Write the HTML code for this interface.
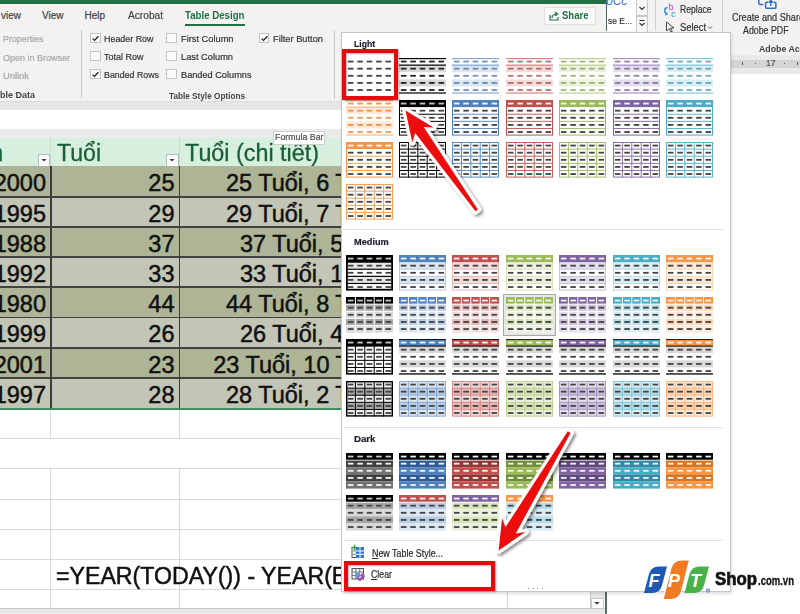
<!DOCTYPE html><html><head><meta charset="utf-8"><style>
html,body{margin:0;padding:0;width:800px;height:614px;overflow:hidden;background:#fff}
body{position:relative;font-family:"Liberation Sans", sans-serif}
body>div,body>svg{position:absolute;display:block}
</style></head><body>
<div style="left:0px;top:0px;width:607px;height:3.5px;background:#1e7145;"></div>
<div style="left:0px;top:3.5px;width:607px;height:97.5px;background:#f3f2f1;"></div>
<div style="left:607px;top:0px;width:193px;height:55px;background:#f3f2f1;"></div>
<div style="left:1.00px;top:10.90px;font-size:10px;line-height:10px;color:#444;font-weight:normal;-webkit-text-stroke:0.2px #444;white-space:nowrap">view</div>
<div style="left:42.00px;top:10.90px;font-size:10px;line-height:10px;color:#444;font-weight:normal;-webkit-text-stroke:0.2px #444;white-space:nowrap">View</div>
<div style="left:84.50px;top:10.90px;font-size:10px;line-height:10px;color:#444;font-weight:normal;-webkit-text-stroke:0.2px #444;white-space:nowrap">Help</div>
<div style="left:128.00px;top:10.90px;font-size:10px;line-height:10px;color:#444;font-weight:normal;-webkit-text-stroke:0.2px #444;transform:scaleX(1.0154);transform-origin:left top;white-space:nowrap">Acrobat</div>
<div style="left:185.00px;top:10.90px;font-size:10px;line-height:10px;color:#1e7145;font-weight:bold;transform:scaleX(0.9675);transform-origin:left top;white-space:nowrap">Table Design</div>
<div style="left:185px;top:23.5px;width:60px;height:2px;background:#1e7145;"></div>
<div style="left:2.50px;top:34.42px;font-size:9.5px;line-height:9.5px;color:#a6a6a6;font-weight:normal;-webkit-text-stroke:0.2px #a6a6a6;transform:scaleX(0.9351);transform-origin:left top;white-space:nowrap">Properties</div>
<div style="left:2.50px;top:52.72px;font-size:9.5px;line-height:9.5px;color:#a6a6a6;font-weight:normal;-webkit-text-stroke:0.2px #a6a6a6;transform:scaleX(0.9468);transform-origin:left top;white-space:nowrap">Open in Browser</div>
<div style="left:2.50px;top:70.92px;font-size:9.5px;line-height:9.5px;color:#a6a6a6;font-weight:normal;-webkit-text-stroke:0.2px #a6a6a6;transform:scaleX(0.9846);transform-origin:left top;white-space:nowrap">Unlink</div>
<div style="left:-0.50px;top:90.42px;font-size:9.5px;line-height:9.5px;color:#444;font-weight:bold;transform:scaleX(0.9467);transform-origin:left top;white-space:nowrap">ble Data</div>
<div style="left:80.5px;top:30px;width:1.2px;height:68px;background:#c8c6c4;"></div>
<div style="left:90px;top:32.5px;width:8.5px;height:8.5px;border:1px solid #c4c4c4;background:#fbfbfb"></div>
<svg style="left:90px;top:32.5px" width="11" height="11" viewBox="0 0 11 11"><path d="M2.6 5.6 L4.5 7.4 L8.4 3.3" fill="none" stroke="#222" stroke-width="1.3"/></svg>
<div style="left:90px;top:50.5px;width:8.5px;height:8.5px;border:1px solid #c4c4c4;background:#fbfbfb"></div>
<div style="left:90px;top:68.5px;width:8.5px;height:8.5px;border:1px solid #c4c4c4;background:#fbfbfb"></div>
<svg style="left:90px;top:68.5px" width="11" height="11" viewBox="0 0 11 11"><path d="M2.6 5.6 L4.5 7.4 L8.4 3.3" fill="none" stroke="#222" stroke-width="1.3"/></svg>
<div style="left:166.3px;top:32.5px;width:8.5px;height:8.5px;border:1px solid #c4c4c4;background:#fbfbfb"></div>
<div style="left:166.3px;top:50.5px;width:8.5px;height:8.5px;border:1px solid #c4c4c4;background:#fbfbfb"></div>
<div style="left:166.3px;top:68.5px;width:8.5px;height:8.5px;border:1px solid #c4c4c4;background:#fbfbfb"></div>
<div style="left:258.6px;top:32.5px;width:8.5px;height:8.5px;border:1px solid #c4c4c4;background:#fbfbfb"></div>
<svg style="left:258.6px;top:32.5px" width="11" height="11" viewBox="0 0 11 11"><path d="M2.6 5.6 L4.5 7.4 L8.4 3.3" fill="none" stroke="#222" stroke-width="1.3"/></svg>
<div style="left:104.00px;top:33.97px;font-size:9.8px;line-height:9.8px;color:#333;font-weight:normal;-webkit-text-stroke:0.2px #333;transform:scaleX(0.9090);transform-origin:left top;white-space:nowrap">Header Row</div>
<div style="left:104.00px;top:51.97px;font-size:9.8px;line-height:9.8px;color:#333;font-weight:normal;-webkit-text-stroke:0.2px #333;transform:scaleX(0.9183);transform-origin:left top;white-space:nowrap">Total Row</div>
<div style="left:104.00px;top:69.97px;font-size:9.8px;line-height:9.8px;color:#333;font-weight:normal;-webkit-text-stroke:0.2px #333;transform:scaleX(0.9016);transform-origin:left top;white-space:nowrap">Banded Rows</div>
<div style="left:180.70px;top:33.97px;font-size:9.8px;line-height:9.8px;color:#333;font-weight:normal;-webkit-text-stroke:0.2px #333;transform:scaleX(0.9454);transform-origin:left top;white-space:nowrap">First Column</div>
<div style="left:180.70px;top:51.97px;font-size:9.8px;line-height:9.8px;color:#333;font-weight:normal;-webkit-text-stroke:0.2px #333;transform:scaleX(0.9455);transform-origin:left top;white-space:nowrap">Last Column</div>
<div style="left:180.70px;top:69.97px;font-size:9.8px;line-height:9.8px;color:#333;font-weight:normal;-webkit-text-stroke:0.2px #333;transform:scaleX(0.9380);transform-origin:left top;white-space:nowrap">Banded Columns</div>
<div style="left:272.50px;top:33.97px;font-size:9.8px;line-height:9.8px;color:#333;font-weight:normal;-webkit-text-stroke:0.2px #333;transform:scaleX(0.9465);transform-origin:left top;white-space:nowrap">Filter Button</div>
<div style="left:169.00px;top:90.72px;font-size:9.5px;line-height:9.5px;color:#444;font-weight:bold;transform:scaleX(0.8638);transform-origin:left top;white-space:nowrap">Table Style Options</div>
<div style="left:334px;top:30.5px;width:1.2px;height:68px;background:#c8c6c4;"></div>
<div style="left:544px;top:6.5px;width:50px;height:16.5px;border:1px solid #e1dfdd;border-radius:2px;background:#fafafa"></div>
<svg style="left:549px;top:10px" width="11" height="11" viewBox="0 0 11 11"><path d="M1 5 V10 H9 V7" fill="none" stroke="#1e7145" stroke-width="1.2"/><path d="M3 8 C3 5 5 4 8 4 M6 2 L8.5 4 L6 6" fill="none" stroke="#1e7145" stroke-width="1.2"/></svg>
<div style="left:562.00px;top:10.70px;font-size:10px;line-height:10px;color:#1e7145;font-weight:bold;transform:scaleX(0.9533);transform-origin:left top;white-space:nowrap">Share</div>
<div style="left:0px;top:101px;width:607px;height:9px;background:#e6e6e6;"></div>
<div style="left:0px;top:101px;width:607px;height:1px;background:#dcdcdc;"></div>
<div style="left:0px;top:110px;width:607px;height:19px;background:#ffffff;"></div>
<div style="left:0px;top:129px;width:607px;height:8.5px;background:#ebebeb;"></div>
<div style="left:0px;top:137.5px;width:607px;height:471px;background:#ffffff;"></div>
<div style="left:0px;top:137.5px;width:341px;height:28.5px;background:#d6efdf;"></div>
<div style="left:50.3px;top:137.5px;width:1px;height:28.5px;background:#c6dccd;"></div>
<div style="left:179.3px;top:137.5px;width:1px;height:28.5px;background:#c6dccd;"></div>
<div style="left:-10.00px;top:142.03px;font-size:23.5px;line-height:23.5px;color:#1b5e36;font-weight:normal;-webkit-text-stroke:0.3px #1b5e36;white-space:nowrap">h</div>
<div style="left:56.50px;top:142.03px;font-size:23.5px;line-height:23.5px;color:#1b5e36;font-weight:normal;-webkit-text-stroke:0.3px #1b5e36;transform:scaleX(0.9812);transform-origin:left top;white-space:nowrap">Tuổi</div>
<div style="left:184.80px;top:142.03px;font-size:23.5px;line-height:23.5px;color:#1b5e36;font-weight:normal;-webkit-text-stroke:0.3px #1b5e36;transform:scaleX(0.9929);transform-origin:left top;white-space:nowrap">Tuổi (chi tiết)</div>
<div style="left:37.8px;top:154px;width:10.5px;height:10.5px;border:1px solid #b8b8b8;background:#fbfbfb"></div>
<svg style="left:37.8px;top:154px" width="12" height="12" viewBox="0 0 12 12"><path d="M3.3 5 L8.7 5 L6 7.6 Z" fill="#444"/></svg>
<div style="left:166.3px;top:154px;width:10.5px;height:10.5px;border:1px solid #b8b8b8;background:#fbfbfb"></div>
<svg style="left:166.3px;top:154px" width="12" height="12" viewBox="0 0 12 12"><path d="M3.3 5 L8.7 5 L6 7.6 Z" fill="#444"/></svg>
<div style="left:0px;top:166.0px;width:341px;height:30.2px;background:#adb596;"></div>
<div style="left:0px;top:196.2px;width:341px;height:30.2px;background:#c3c6b6;"></div>
<div style="left:0px;top:226.4px;width:341px;height:30.2px;background:#adb596;"></div>
<div style="left:0px;top:256.6px;width:341px;height:30.2px;background:#c3c6b6;"></div>
<div style="left:0px;top:286.8px;width:341px;height:30.2px;background:#adb596;"></div>
<div style="left:0px;top:317.0px;width:341px;height:30.2px;background:#c3c6b6;"></div>
<div style="left:0px;top:347.2px;width:341px;height:30.2px;background:#adb596;"></div>
<div style="left:0px;top:377.4px;width:341px;height:30.2px;background:#c3c6b6;"></div>
<div style="left:0px;top:195.8px;width:341px;height:1.8px;background:#424242;"></div>
<div style="left:0px;top:226.0px;width:341px;height:1.8px;background:#424242;"></div>
<div style="left:0px;top:256.2px;width:341px;height:1.8px;background:#424242;"></div>
<div style="left:0px;top:286.40000000000003px;width:341px;height:1.8px;background:#424242;"></div>
<div style="left:0px;top:316.6px;width:341px;height:1.8px;background:#424242;"></div>
<div style="left:0px;top:346.8px;width:341px;height:1.8px;background:#424242;"></div>
<div style="left:0px;top:377.0px;width:341px;height:1.8px;background:#424242;"></div>
<div style="left:-6.28px;width:52.28px;top:172.43px;font-size:23.5px;line-height:23.5px;color:#111;font-weight:normal;-webkit-text-stroke:0.5px #111;white-space:nowrap">2000</div>
<div style="left:148.36px;width:26.14px;top:172.43px;font-size:23.5px;line-height:23.5px;color:#111;font-weight:normal;-webkit-text-stroke:0.5px #111;white-space:nowrap">25</div>
<div style="left:226.00px;top:172.43px;font-size:23.5px;line-height:23.5px;color:#111;font-weight:normal;-webkit-text-stroke:0.5px #111;white-space:nowrap">25 Tuổi, 6 Tháng</div>
<div style="left:-6.28px;width:52.28px;top:202.62px;font-size:23.5px;line-height:23.5px;color:#111;font-weight:normal;-webkit-text-stroke:0.5px #111;white-space:nowrap">1995</div>
<div style="left:148.36px;width:26.14px;top:202.62px;font-size:23.5px;line-height:23.5px;color:#111;font-weight:normal;-webkit-text-stroke:0.5px #111;white-space:nowrap">29</div>
<div style="left:226.00px;top:202.62px;font-size:23.5px;line-height:23.5px;color:#111;font-weight:normal;-webkit-text-stroke:0.5px #111;white-space:nowrap">29 Tuổi, 7 Tháng</div>
<div style="left:-6.28px;width:52.28px;top:232.83px;font-size:23.5px;line-height:23.5px;color:#111;font-weight:normal;-webkit-text-stroke:0.5px #111;white-space:nowrap">1988</div>
<div style="left:148.36px;width:26.14px;top:232.83px;font-size:23.5px;line-height:23.5px;color:#111;font-weight:normal;-webkit-text-stroke:0.5px #111;white-space:nowrap">37</div>
<div style="left:240.00px;top:232.83px;font-size:23.5px;line-height:23.5px;color:#111;font-weight:normal;-webkit-text-stroke:0.5px #111;white-space:nowrap">37 Tuổi, 5 Tháng</div>
<div style="left:-6.28px;width:52.28px;top:263.02px;font-size:23.5px;line-height:23.5px;color:#111;font-weight:normal;-webkit-text-stroke:0.5px #111;white-space:nowrap">1992</div>
<div style="left:148.36px;width:26.14px;top:263.02px;font-size:23.5px;line-height:23.5px;color:#111;font-weight:normal;-webkit-text-stroke:0.5px #111;white-space:nowrap">33</div>
<div style="left:240.00px;top:263.02px;font-size:23.5px;line-height:23.5px;color:#111;font-weight:normal;-webkit-text-stroke:0.5px #111;white-space:nowrap">33 Tuổi, 1 Tháng</div>
<div style="left:-6.28px;width:52.28px;top:293.22px;font-size:23.5px;line-height:23.5px;color:#111;font-weight:normal;-webkit-text-stroke:0.5px #111;white-space:nowrap">1980</div>
<div style="left:148.36px;width:26.14px;top:293.22px;font-size:23.5px;line-height:23.5px;color:#111;font-weight:normal;-webkit-text-stroke:0.5px #111;white-space:nowrap">44</div>
<div style="left:226.00px;top:293.22px;font-size:23.5px;line-height:23.5px;color:#111;font-weight:normal;-webkit-text-stroke:0.5px #111;white-space:nowrap">44 Tuổi, 8 Tháng</div>
<div style="left:-6.28px;width:52.28px;top:323.42px;font-size:23.5px;line-height:23.5px;color:#111;font-weight:normal;-webkit-text-stroke:0.5px #111;white-space:nowrap">1999</div>
<div style="left:148.36px;width:26.14px;top:323.42px;font-size:23.5px;line-height:23.5px;color:#111;font-weight:normal;-webkit-text-stroke:0.5px #111;white-space:nowrap">26</div>
<div style="left:240.00px;top:323.42px;font-size:23.5px;line-height:23.5px;color:#111;font-weight:normal;-webkit-text-stroke:0.5px #111;white-space:nowrap">26 Tuổi, 4 Tháng</div>
<div style="left:-6.28px;width:52.28px;top:353.62px;font-size:23.5px;line-height:23.5px;color:#111;font-weight:normal;-webkit-text-stroke:0.5px #111;white-space:nowrap">2001</div>
<div style="left:148.36px;width:26.14px;top:353.62px;font-size:23.5px;line-height:23.5px;color:#111;font-weight:normal;-webkit-text-stroke:0.5px #111;white-space:nowrap">23</div>
<div style="left:213.20px;top:353.62px;font-size:23.5px;line-height:23.5px;color:#111;font-weight:normal;-webkit-text-stroke:0.5px #111;white-space:nowrap">23 Tuổi, 10 Tháng</div>
<div style="left:-6.28px;width:52.28px;top:383.82px;font-size:23.5px;line-height:23.5px;color:#111;font-weight:normal;-webkit-text-stroke:0.5px #111;white-space:nowrap">1997</div>
<div style="left:148.36px;width:26.14px;top:383.82px;font-size:23.5px;line-height:23.5px;color:#111;font-weight:normal;-webkit-text-stroke:0.5px #111;white-space:nowrap">28</div>
<div style="left:226.00px;top:383.82px;font-size:23.5px;line-height:23.5px;color:#111;font-weight:normal;-webkit-text-stroke:0.5px #111;white-space:nowrap">28 Tuổi, 2 Tháng</div>
<div style="left:50px;top:166px;width:1.6px;height:242px;background:#3d3d3d;"></div>
<div style="left:178.5px;top:166px;width:1.6px;height:242px;background:#3d3d3d;"></div>
<div style="left:0px;top:408px;width:341px;height:1.5px;background:#3f8f5e;"></div>
<div style="left:0px;top:438px;width:607px;height:1px;background:#d9d9d9;"></div>
<div style="left:0px;top:468px;width:607px;height:1px;background:#d9d9d9;"></div>
<div style="left:0px;top:499px;width:607px;height:1px;background:#d9d9d9;"></div>
<div style="left:0px;top:529px;width:607px;height:1px;background:#d9d9d9;"></div>
<div style="left:0px;top:559px;width:607px;height:1px;background:#d9d9d9;"></div>
<div style="left:0px;top:589px;width:607px;height:1px;background:#d9d9d9;"></div>
<div style="left:50.3px;top:409.5px;width:1px;height:28.5px;background:#d9d9d9;"></div>
<div style="left:178.8px;top:409.5px;width:1px;height:28.5px;background:#d9d9d9;"></div>
<div style="left:50.3px;top:468px;width:1px;height:140px;background:#d9d9d9;"></div>
<div style="left:178.8px;top:468px;width:1px;height:140px;background:#d9d9d9;"></div>
<div style="left:55.50px;top:565.02px;font-size:23.5px;line-height:23.5px;color:#111;font-weight:normal;-webkit-text-stroke:0.5px #111;transform:scaleX(0.9849);transform-origin:left top;white-space:nowrap">=YEAR(TODAY()) - YEAR(E</div>
<div style="left:0px;top:608px;width:607px;height:6px;background:#e8e8e8;"></div>
<div style="left:0px;top:607.5px;width:607px;height:1px;background:#c8c8c8;"></div>
<div style="left:507px;top:590px;width:1px;height:18px;background:#d9d9d9;"></div>
<div style="left:589.5px;top:590px;width:1px;height:18px;background:#c8c8c8;"></div>
<div style="left:590.5px;top:590px;width:14.5px;height:8px;background:#e6e6e6;"></div>
<div style="left:591px;top:598px;width:11px;height:9px;border:1px solid #c8c8c8;background:#fff"></div>
<svg style="left:591px;top:597px" width="12" height="12" viewBox="0 0 12 12"><path d="M3.3 5 L8.7 5 L6 7.7 Z" fill="#444"/></svg>
<div style="left:605.3px;top:590px;width:1.7px;height:24px;background:#56705e;"></div>
<div style="left:605.5px;top:0px;width:1.6px;height:31px;background:#4a6b55;"></div>
<div style="left:272.5px;top:131px;width:50.5px;height:11.8px;border:1px solid #cfcfcf;background:#fff"></div>
<div style="left:274.50px;top:133.09px;font-size:9.3px;line-height:9.3px;color:#4a4a4a;font-weight:normal;-webkit-text-stroke:0.2px #4a4a4a;transform:scaleX(0.9481);transform-origin:left top;white-space:nowrap">Formula Bar</div>
<div style="left:607px;top:0px;width:29px;height:31px;background:#ffffff;"></div>
<div style="left:606.00px;top:-5.20px;font-size:12px;line-height:12px;color:#4a6fc7;font-weight:normal;font-style:italic;white-space:nowrap">bCc</div>
<div style="left:608.00px;top:16.43px;font-size:9.5px;line-height:9.5px;color:#333;font-weight:normal;-webkit-text-stroke:0.2px #333;transform:scaleX(0.8910);transform-origin:left top;white-space:nowrap">se E...</div>
<div style="left:636px;top:0px;width:10px;height:15px;border:1px solid #c8c8c8;border-top:none;background:#f7f7f7"></div>
<div style="left:636px;top:16px;width:10px;height:14.5px;border:1px solid #c8c8c8;background:#f7f7f7"></div>
<svg style="left:636px;top:0px" width="12" height="32" viewBox="0 0 12 32"><path d="M3.5 7 L6 9.5 L8.5 7" fill="none" stroke="#333" stroke-width="1.1"/><path d="M3.5 20.5 L8.5 20.5 M3.5 23 L6 25.5 L8.5 23" fill="none" stroke="#333" stroke-width="1.1"/></svg>
<div style="left:655px;top:0px;width:1px;height:31px;background:#d0d0d0;"></div>
<div style="left:722px;top:0px;width:1px;height:52px;background:#d0d0d0;"></div>
<svg style="left:662px;top:2px" width="16" height="16" viewBox="0 0 16 16"><text x="6.5" y="7.5" font-family="Liberation Sans" font-size="9" fill="#b84cc8">b</text><text x="9" y="15" font-family="Liberation Sans" font-size="9" fill="#2a8fd0">c</text><path d="M5.5 5.5 C2 6 1.5 10.5 4.8 11.8 M3.4 10.3 L5 12 L3.2 13.2" fill="none" stroke="#2a8fd0" stroke-width="1.3"/></svg>
<div style="left:679.60px;top:5.00px;font-size:10px;line-height:10px;color:#333;font-weight:normal;-webkit-text-stroke:0.2px #333;transform:scaleX(0.8582);transform-origin:left top;white-space:nowrap">Replace</div>
<svg style="left:665px;top:21px" width="11" height="12" viewBox="0 0 11 12"><path d="M1.5 1 L1.5 10 L4 7.5 L6 11 L7.3 10.3 L5.5 7 L9 7 Z" fill="#fff" stroke="#333" stroke-width="0.9"/></svg>
<div style="left:679.60px;top:22.50px;font-size:10px;line-height:10px;color:#333;font-weight:normal;-webkit-text-stroke:0.2px #333;transform:scaleX(0.9354);transform-origin:left top;white-space:nowrap">Select</div>
<svg style="left:707px;top:25px" width="6" height="5" viewBox="0 0 6 5"><path d="M1 1.5 L3 3.5 L5 1.5" fill="none" stroke="#444" stroke-width="0.9"/></svg>
<svg style="left:756px;top:0px" width="22" height="10" viewBox="0 0 22 10"><path d="M2.8 0 V3.3 Q2.8 4.5 4 4.5 H7.2" fill="none" stroke="#2b6fc6" stroke-width="1.5"/><path d="M12 2.2 H10.7 Q9.6 2.2 9.6 3.3 V7.2 Q9.6 8.3 10.7 8.3 H18.8 Q19.9 8.3 19.9 7.2 V3.3 Q19.9 2.2 18.8 2.2 H17.5" fill="none" stroke="#2b6fc6" stroke-width="1.5"/><path d="M14.75 6 V0.5 M12.6 2.6 L14.75 0.5 L16.9 2.6" fill="none" stroke="#2b6fc6" stroke-width="1.4"/></svg>
<div style="left:731.60px;top:13.10px;font-size:10px;line-height:10px;color:#333;font-weight:normal;-webkit-text-stroke:0.2px #333;transform:scaleX(0.9119);transform-origin:left top;white-space:nowrap">Create and Share</div>
<div style="left:742.80px;top:25.60px;font-size:10px;line-height:10px;color:#333;font-weight:normal;-webkit-text-stroke:0.2px #333;transform:scaleX(0.8820);transform-origin:left top;white-space:nowrap">Adobe PDF</div>
<div style="left:758.80px;top:44.03px;font-size:9.5px;line-height:9.5px;color:#444;font-weight:bold;transform:scaleX(0.9227);transform-origin:left top;white-space:nowrap">Adobe Acr</div>
<div style="left:607px;top:55px;width:193px;height:19px;background:#e9e9e9;"></div>
<div style="left:607px;top:60px;width:193px;height:7.5px;background:#d4d4d4;"></div>
<div style="left:766.00px;top:59.27px;font-size:8.5px;line-height:8.5px;color:#555;font-weight:normal;-webkit-text-stroke:0.2px #555;white-space:nowrap">17</div>
<div style="left:741.5px;top:62px;width:0.8px;height:3px;background:#555;"></div>
<div style="left:797px;top:62px;width:0.8px;height:3px;background:#555;"></div>
<div style="left:755.4px;top:63px;width:1px;height:1px;background:#666;"></div>
<div style="left:783.5px;top:63px;width:1px;height:1px;background:#666;"></div>
<div style="left:607px;top:74px;width:193px;height:540px;background:#ffffff;"></div>
<div style="left:341px;top:32px;width:389.5px;height:560px;background:#fff;border:1px solid #c6c6c6;box-sizing:border-box;box-shadow:1px 2px 3px rgba(0,0,0,0.12)"></div>
<div style="left:353.50px;top:39.24px;font-size:9.6px;line-height:9.6px;color:#1c1c28;font-weight:bold;-webkit-text-stroke:0.2px #1c1c28;transform:scaleX(0.8954);transform-origin:left top;white-space:nowrap">Light</div>
<div style="left:353.60px;top:236.59px;font-size:9.9px;line-height:9.9px;color:#1c1c28;font-weight:bold;-webkit-text-stroke:0.2px #1c1c28;transform:scaleX(0.9327);transform-origin:left top;white-space:nowrap">Medium</div>
<div style="left:353.80px;top:434.08px;font-size:9.9px;line-height:9.9px;color:#1c1c28;font-weight:bold;-webkit-text-stroke:0.2px #1c1c28;transform:scaleX(0.9787);transform-origin:left top;white-space:nowrap">Dark</div>
<div style="left:342.5px;top:229px;width:380px;height:1px;background:#e1e1e1;"></div>
<div style="left:342.5px;top:427px;width:380px;height:1px;background:#e1e1e1;"></div>
<div style="left:342.5px;top:540px;width:380px;height:1px;background:#e1e1e1;"></div>
<svg style="left:345.60px;top:58.00px" width="47" height="35.6" viewBox="0 0 47 35.6"><rect x="1.90" y="2.66" width="5.6" height="1.8" fill="#444444"/><rect x="11.30" y="2.66" width="5.6" height="1.8" fill="#444444"/><rect x="20.70" y="2.66" width="5.6" height="1.8" fill="#444444"/><rect x="30.10" y="2.66" width="5.6" height="1.8" fill="#444444"/><rect x="39.50" y="2.66" width="5.6" height="1.8" fill="#444444"/><rect x="1.90" y="9.78" width="5.6" height="1.8" fill="#444444"/><rect x="11.30" y="9.78" width="5.6" height="1.8" fill="#444444"/><rect x="20.70" y="9.78" width="5.6" height="1.8" fill="#444444"/><rect x="30.10" y="9.78" width="5.6" height="1.8" fill="#444444"/><rect x="39.50" y="9.78" width="5.6" height="1.8" fill="#444444"/><rect x="1.90" y="16.90" width="5.6" height="1.8" fill="#444444"/><rect x="11.30" y="16.90" width="5.6" height="1.8" fill="#444444"/><rect x="20.70" y="16.90" width="5.6" height="1.8" fill="#444444"/><rect x="30.10" y="16.90" width="5.6" height="1.8" fill="#444444"/><rect x="39.50" y="16.90" width="5.6" height="1.8" fill="#444444"/><rect x="1.90" y="24.02" width="5.6" height="1.8" fill="#444444"/><rect x="11.30" y="24.02" width="5.6" height="1.8" fill="#444444"/><rect x="20.70" y="24.02" width="5.6" height="1.8" fill="#444444"/><rect x="30.10" y="24.02" width="5.6" height="1.8" fill="#444444"/><rect x="39.50" y="24.02" width="5.6" height="1.8" fill="#444444"/><rect x="1.90" y="31.14" width="5.6" height="1.8" fill="#444444"/><rect x="11.30" y="31.14" width="5.6" height="1.8" fill="#444444"/><rect x="20.70" y="31.14" width="5.6" height="1.8" fill="#444444"/><rect x="30.10" y="31.14" width="5.6" height="1.8" fill="#444444"/><rect x="39.50" y="31.14" width="5.6" height="1.8" fill="#444444"/></svg>
<svg style="left:399.00px;top:58.00px" width="47" height="35.6" viewBox="0 0 47 35.6"><rect x="0" y="7.12" width="47" height="7.12" fill="#d9d9d9"/><rect x="0" y="21.36" width="47" height="7.12" fill="#d9d9d9"/><g opacity="1"><rect x="0" y="0.00" width="47" height="1.2" fill="#000000"/><rect x="0" y="6.52" width="47" height="1.2" fill="#000000"/><rect x="0" y="34.40" width="47" height="1.2" fill="#000000"/><rect x="1.90" y="2.66" width="5.6" height="1.8" fill="#222"/><rect x="11.30" y="2.66" width="5.6" height="1.8" fill="#222"/><rect x="20.70" y="2.66" width="5.6" height="1.8" fill="#222"/><rect x="30.10" y="2.66" width="5.6" height="1.8" fill="#222"/><rect x="39.50" y="2.66" width="5.6" height="1.8" fill="#222"/><rect x="1.90" y="9.78" width="5.6" height="1.8" fill="#222"/><rect x="11.30" y="9.78" width="5.6" height="1.8" fill="#222"/><rect x="20.70" y="9.78" width="5.6" height="1.8" fill="#222"/><rect x="30.10" y="9.78" width="5.6" height="1.8" fill="#222"/><rect x="39.50" y="9.78" width="5.6" height="1.8" fill="#222"/><rect x="1.90" y="16.90" width="5.6" height="1.8" fill="#222"/><rect x="11.30" y="16.90" width="5.6" height="1.8" fill="#222"/><rect x="20.70" y="16.90" width="5.6" height="1.8" fill="#222"/><rect x="30.10" y="16.90" width="5.6" height="1.8" fill="#222"/><rect x="39.50" y="16.90" width="5.6" height="1.8" fill="#222"/><rect x="1.90" y="24.02" width="5.6" height="1.8" fill="#222"/><rect x="11.30" y="24.02" width="5.6" height="1.8" fill="#222"/><rect x="20.70" y="24.02" width="5.6" height="1.8" fill="#222"/><rect x="30.10" y="24.02" width="5.6" height="1.8" fill="#222"/><rect x="39.50" y="24.02" width="5.6" height="1.8" fill="#222"/><rect x="1.90" y="31.14" width="5.6" height="1.8" fill="#222"/><rect x="11.30" y="31.14" width="5.6" height="1.8" fill="#222"/><rect x="20.70" y="31.14" width="5.6" height="1.8" fill="#222"/><rect x="30.10" y="31.14" width="5.6" height="1.8" fill="#222"/><rect x="39.50" y="31.14" width="5.6" height="1.8" fill="#222"/></g></svg>
<svg style="left:452.40px;top:58.00px" width="47" height="35.6" viewBox="0 0 47 35.6"><rect x="0" y="7.12" width="47" height="7.12" fill="#dce6f1"/><rect x="0" y="21.36" width="47" height="7.12" fill="#dce6f1"/><g opacity="0.68"><rect x="0" y="0.00" width="47" height="1.2" fill="#4f81bd"/><rect x="0" y="6.52" width="47" height="1.2" fill="#4f81bd"/><rect x="0" y="34.40" width="47" height="1.2" fill="#4f81bd"/><rect x="1.90" y="2.66" width="5.6" height="1.8" fill="#376092"/><rect x="11.30" y="2.66" width="5.6" height="1.8" fill="#376092"/><rect x="20.70" y="2.66" width="5.6" height="1.8" fill="#376092"/><rect x="30.10" y="2.66" width="5.6" height="1.8" fill="#376092"/><rect x="39.50" y="2.66" width="5.6" height="1.8" fill="#376092"/><rect x="1.90" y="9.78" width="5.6" height="1.8" fill="#376092"/><rect x="11.30" y="9.78" width="5.6" height="1.8" fill="#376092"/><rect x="20.70" y="9.78" width="5.6" height="1.8" fill="#376092"/><rect x="30.10" y="9.78" width="5.6" height="1.8" fill="#376092"/><rect x="39.50" y="9.78" width="5.6" height="1.8" fill="#376092"/><rect x="1.90" y="16.90" width="5.6" height="1.8" fill="#376092"/><rect x="11.30" y="16.90" width="5.6" height="1.8" fill="#376092"/><rect x="20.70" y="16.90" width="5.6" height="1.8" fill="#376092"/><rect x="30.10" y="16.90" width="5.6" height="1.8" fill="#376092"/><rect x="39.50" y="16.90" width="5.6" height="1.8" fill="#376092"/><rect x="1.90" y="24.02" width="5.6" height="1.8" fill="#376092"/><rect x="11.30" y="24.02" width="5.6" height="1.8" fill="#376092"/><rect x="20.70" y="24.02" width="5.6" height="1.8" fill="#376092"/><rect x="30.10" y="24.02" width="5.6" height="1.8" fill="#376092"/><rect x="39.50" y="24.02" width="5.6" height="1.8" fill="#376092"/><rect x="1.90" y="31.14" width="5.6" height="1.8" fill="#376092"/><rect x="11.30" y="31.14" width="5.6" height="1.8" fill="#376092"/><rect x="20.70" y="31.14" width="5.6" height="1.8" fill="#376092"/><rect x="30.10" y="31.14" width="5.6" height="1.8" fill="#376092"/><rect x="39.50" y="31.14" width="5.6" height="1.8" fill="#376092"/></g></svg>
<svg style="left:505.80px;top:58.00px" width="47" height="35.6" viewBox="0 0 47 35.6"><rect x="0" y="7.12" width="47" height="7.12" fill="#f2dcdb"/><rect x="0" y="21.36" width="47" height="7.12" fill="#f2dcdb"/><g opacity="0.68"><rect x="0" y="0.00" width="47" height="1.2" fill="#c0504d"/><rect x="0" y="6.52" width="47" height="1.2" fill="#c0504d"/><rect x="0" y="34.40" width="47" height="1.2" fill="#c0504d"/><rect x="1.90" y="2.66" width="5.6" height="1.8" fill="#963634"/><rect x="11.30" y="2.66" width="5.6" height="1.8" fill="#963634"/><rect x="20.70" y="2.66" width="5.6" height="1.8" fill="#963634"/><rect x="30.10" y="2.66" width="5.6" height="1.8" fill="#963634"/><rect x="39.50" y="2.66" width="5.6" height="1.8" fill="#963634"/><rect x="1.90" y="9.78" width="5.6" height="1.8" fill="#963634"/><rect x="11.30" y="9.78" width="5.6" height="1.8" fill="#963634"/><rect x="20.70" y="9.78" width="5.6" height="1.8" fill="#963634"/><rect x="30.10" y="9.78" width="5.6" height="1.8" fill="#963634"/><rect x="39.50" y="9.78" width="5.6" height="1.8" fill="#963634"/><rect x="1.90" y="16.90" width="5.6" height="1.8" fill="#963634"/><rect x="11.30" y="16.90" width="5.6" height="1.8" fill="#963634"/><rect x="20.70" y="16.90" width="5.6" height="1.8" fill="#963634"/><rect x="30.10" y="16.90" width="5.6" height="1.8" fill="#963634"/><rect x="39.50" y="16.90" width="5.6" height="1.8" fill="#963634"/><rect x="1.90" y="24.02" width="5.6" height="1.8" fill="#963634"/><rect x="11.30" y="24.02" width="5.6" height="1.8" fill="#963634"/><rect x="20.70" y="24.02" width="5.6" height="1.8" fill="#963634"/><rect x="30.10" y="24.02" width="5.6" height="1.8" fill="#963634"/><rect x="39.50" y="24.02" width="5.6" height="1.8" fill="#963634"/><rect x="1.90" y="31.14" width="5.6" height="1.8" fill="#963634"/><rect x="11.30" y="31.14" width="5.6" height="1.8" fill="#963634"/><rect x="20.70" y="31.14" width="5.6" height="1.8" fill="#963634"/><rect x="30.10" y="31.14" width="5.6" height="1.8" fill="#963634"/><rect x="39.50" y="31.14" width="5.6" height="1.8" fill="#963634"/></g></svg>
<svg style="left:559.20px;top:58.00px" width="47" height="35.6" viewBox="0 0 47 35.6"><rect x="0" y="7.12" width="47" height="7.12" fill="#ebf1de"/><rect x="0" y="21.36" width="47" height="7.12" fill="#ebf1de"/><g opacity="0.68"><rect x="0" y="0.00" width="47" height="1.2" fill="#9bbb59"/><rect x="0" y="6.52" width="47" height="1.2" fill="#9bbb59"/><rect x="0" y="34.40" width="47" height="1.2" fill="#9bbb59"/><rect x="1.90" y="2.66" width="5.6" height="1.8" fill="#76933c"/><rect x="11.30" y="2.66" width="5.6" height="1.8" fill="#76933c"/><rect x="20.70" y="2.66" width="5.6" height="1.8" fill="#76933c"/><rect x="30.10" y="2.66" width="5.6" height="1.8" fill="#76933c"/><rect x="39.50" y="2.66" width="5.6" height="1.8" fill="#76933c"/><rect x="1.90" y="9.78" width="5.6" height="1.8" fill="#76933c"/><rect x="11.30" y="9.78" width="5.6" height="1.8" fill="#76933c"/><rect x="20.70" y="9.78" width="5.6" height="1.8" fill="#76933c"/><rect x="30.10" y="9.78" width="5.6" height="1.8" fill="#76933c"/><rect x="39.50" y="9.78" width="5.6" height="1.8" fill="#76933c"/><rect x="1.90" y="16.90" width="5.6" height="1.8" fill="#76933c"/><rect x="11.30" y="16.90" width="5.6" height="1.8" fill="#76933c"/><rect x="20.70" y="16.90" width="5.6" height="1.8" fill="#76933c"/><rect x="30.10" y="16.90" width="5.6" height="1.8" fill="#76933c"/><rect x="39.50" y="16.90" width="5.6" height="1.8" fill="#76933c"/><rect x="1.90" y="24.02" width="5.6" height="1.8" fill="#76933c"/><rect x="11.30" y="24.02" width="5.6" height="1.8" fill="#76933c"/><rect x="20.70" y="24.02" width="5.6" height="1.8" fill="#76933c"/><rect x="30.10" y="24.02" width="5.6" height="1.8" fill="#76933c"/><rect x="39.50" y="24.02" width="5.6" height="1.8" fill="#76933c"/><rect x="1.90" y="31.14" width="5.6" height="1.8" fill="#76933c"/><rect x="11.30" y="31.14" width="5.6" height="1.8" fill="#76933c"/><rect x="20.70" y="31.14" width="5.6" height="1.8" fill="#76933c"/><rect x="30.10" y="31.14" width="5.6" height="1.8" fill="#76933c"/><rect x="39.50" y="31.14" width="5.6" height="1.8" fill="#76933c"/></g></svg>
<svg style="left:612.60px;top:58.00px" width="47" height="35.6" viewBox="0 0 47 35.6"><rect x="0" y="7.12" width="47" height="7.12" fill="#e4dfec"/><rect x="0" y="21.36" width="47" height="7.12" fill="#e4dfec"/><g opacity="0.68"><rect x="0" y="0.00" width="47" height="1.2" fill="#8064a2"/><rect x="0" y="6.52" width="47" height="1.2" fill="#8064a2"/><rect x="0" y="34.40" width="47" height="1.2" fill="#8064a2"/><rect x="1.90" y="2.66" width="5.6" height="1.8" fill="#60497a"/><rect x="11.30" y="2.66" width="5.6" height="1.8" fill="#60497a"/><rect x="20.70" y="2.66" width="5.6" height="1.8" fill="#60497a"/><rect x="30.10" y="2.66" width="5.6" height="1.8" fill="#60497a"/><rect x="39.50" y="2.66" width="5.6" height="1.8" fill="#60497a"/><rect x="1.90" y="9.78" width="5.6" height="1.8" fill="#60497a"/><rect x="11.30" y="9.78" width="5.6" height="1.8" fill="#60497a"/><rect x="20.70" y="9.78" width="5.6" height="1.8" fill="#60497a"/><rect x="30.10" y="9.78" width="5.6" height="1.8" fill="#60497a"/><rect x="39.50" y="9.78" width="5.6" height="1.8" fill="#60497a"/><rect x="1.90" y="16.90" width="5.6" height="1.8" fill="#60497a"/><rect x="11.30" y="16.90" width="5.6" height="1.8" fill="#60497a"/><rect x="20.70" y="16.90" width="5.6" height="1.8" fill="#60497a"/><rect x="30.10" y="16.90" width="5.6" height="1.8" fill="#60497a"/><rect x="39.50" y="16.90" width="5.6" height="1.8" fill="#60497a"/><rect x="1.90" y="24.02" width="5.6" height="1.8" fill="#60497a"/><rect x="11.30" y="24.02" width="5.6" height="1.8" fill="#60497a"/><rect x="20.70" y="24.02" width="5.6" height="1.8" fill="#60497a"/><rect x="30.10" y="24.02" width="5.6" height="1.8" fill="#60497a"/><rect x="39.50" y="24.02" width="5.6" height="1.8" fill="#60497a"/><rect x="1.90" y="31.14" width="5.6" height="1.8" fill="#60497a"/><rect x="11.30" y="31.14" width="5.6" height="1.8" fill="#60497a"/><rect x="20.70" y="31.14" width="5.6" height="1.8" fill="#60497a"/><rect x="30.10" y="31.14" width="5.6" height="1.8" fill="#60497a"/><rect x="39.50" y="31.14" width="5.6" height="1.8" fill="#60497a"/></g></svg>
<svg style="left:666.00px;top:58.00px" width="47" height="35.6" viewBox="0 0 47 35.6"><rect x="0" y="7.12" width="47" height="7.12" fill="#daeef3"/><rect x="0" y="21.36" width="47" height="7.12" fill="#daeef3"/><g opacity="0.68"><rect x="0" y="0.00" width="47" height="1.2" fill="#4bacc6"/><rect x="0" y="6.52" width="47" height="1.2" fill="#4bacc6"/><rect x="0" y="34.40" width="47" height="1.2" fill="#4bacc6"/><rect x="1.90" y="2.66" width="5.6" height="1.8" fill="#31869b"/><rect x="11.30" y="2.66" width="5.6" height="1.8" fill="#31869b"/><rect x="20.70" y="2.66" width="5.6" height="1.8" fill="#31869b"/><rect x="30.10" y="2.66" width="5.6" height="1.8" fill="#31869b"/><rect x="39.50" y="2.66" width="5.6" height="1.8" fill="#31869b"/><rect x="1.90" y="9.78" width="5.6" height="1.8" fill="#31869b"/><rect x="11.30" y="9.78" width="5.6" height="1.8" fill="#31869b"/><rect x="20.70" y="9.78" width="5.6" height="1.8" fill="#31869b"/><rect x="30.10" y="9.78" width="5.6" height="1.8" fill="#31869b"/><rect x="39.50" y="9.78" width="5.6" height="1.8" fill="#31869b"/><rect x="1.90" y="16.90" width="5.6" height="1.8" fill="#31869b"/><rect x="11.30" y="16.90" width="5.6" height="1.8" fill="#31869b"/><rect x="20.70" y="16.90" width="5.6" height="1.8" fill="#31869b"/><rect x="30.10" y="16.90" width="5.6" height="1.8" fill="#31869b"/><rect x="39.50" y="16.90" width="5.6" height="1.8" fill="#31869b"/><rect x="1.90" y="24.02" width="5.6" height="1.8" fill="#31869b"/><rect x="11.30" y="24.02" width="5.6" height="1.8" fill="#31869b"/><rect x="20.70" y="24.02" width="5.6" height="1.8" fill="#31869b"/><rect x="30.10" y="24.02" width="5.6" height="1.8" fill="#31869b"/><rect x="39.50" y="24.02" width="5.6" height="1.8" fill="#31869b"/><rect x="1.90" y="31.14" width="5.6" height="1.8" fill="#31869b"/><rect x="11.30" y="31.14" width="5.6" height="1.8" fill="#31869b"/><rect x="20.70" y="31.14" width="5.6" height="1.8" fill="#31869b"/><rect x="30.10" y="31.14" width="5.6" height="1.8" fill="#31869b"/><rect x="39.50" y="31.14" width="5.6" height="1.8" fill="#31869b"/></g></svg>
<svg style="left:345.60px;top:100.00px" width="47" height="35.6" viewBox="0 0 47 35.6"><rect x="0" y="7.12" width="47" height="7.12" fill="#fde9d9"/><rect x="0" y="21.36" width="47" height="7.12" fill="#fde9d9"/><g opacity="0.68"><rect x="0" y="0.00" width="47" height="1.2" fill="#f79646"/><rect x="0" y="6.52" width="47" height="1.2" fill="#f79646"/><rect x="0" y="34.40" width="47" height="1.2" fill="#f79646"/><rect x="1.90" y="2.66" width="5.6" height="1.8" fill="#e26b0a"/><rect x="11.30" y="2.66" width="5.6" height="1.8" fill="#e26b0a"/><rect x="20.70" y="2.66" width="5.6" height="1.8" fill="#e26b0a"/><rect x="30.10" y="2.66" width="5.6" height="1.8" fill="#e26b0a"/><rect x="39.50" y="2.66" width="5.6" height="1.8" fill="#e26b0a"/><rect x="1.90" y="9.78" width="5.6" height="1.8" fill="#e26b0a"/><rect x="11.30" y="9.78" width="5.6" height="1.8" fill="#e26b0a"/><rect x="20.70" y="9.78" width="5.6" height="1.8" fill="#e26b0a"/><rect x="30.10" y="9.78" width="5.6" height="1.8" fill="#e26b0a"/><rect x="39.50" y="9.78" width="5.6" height="1.8" fill="#e26b0a"/><rect x="1.90" y="16.90" width="5.6" height="1.8" fill="#e26b0a"/><rect x="11.30" y="16.90" width="5.6" height="1.8" fill="#e26b0a"/><rect x="20.70" y="16.90" width="5.6" height="1.8" fill="#e26b0a"/><rect x="30.10" y="16.90" width="5.6" height="1.8" fill="#e26b0a"/><rect x="39.50" y="16.90" width="5.6" height="1.8" fill="#e26b0a"/><rect x="1.90" y="24.02" width="5.6" height="1.8" fill="#e26b0a"/><rect x="11.30" y="24.02" width="5.6" height="1.8" fill="#e26b0a"/><rect x="20.70" y="24.02" width="5.6" height="1.8" fill="#e26b0a"/><rect x="30.10" y="24.02" width="5.6" height="1.8" fill="#e26b0a"/><rect x="39.50" y="24.02" width="5.6" height="1.8" fill="#e26b0a"/><rect x="1.90" y="31.14" width="5.6" height="1.8" fill="#e26b0a"/><rect x="11.30" y="31.14" width="5.6" height="1.8" fill="#e26b0a"/><rect x="20.70" y="31.14" width="5.6" height="1.8" fill="#e26b0a"/><rect x="30.10" y="31.14" width="5.6" height="1.8" fill="#e26b0a"/><rect x="39.50" y="31.14" width="5.6" height="1.8" fill="#e26b0a"/></g></svg>
<svg style="left:399.00px;top:100.00px" width="47" height="35.6" viewBox="0 0 47 35.6"><rect x="0" y="0.00" width="47" height="7.12" fill="#000000"/><g opacity="1"><rect x="0" y="13.74" width="47" height="1.0" fill="#000000"/><rect x="0" y="20.86" width="47" height="1.0" fill="#000000"/><rect x="0" y="27.98" width="47" height="1.0" fill="#000000"/></g><rect x="0.5" y="0.5" width="46.0" height="34.60" fill="none" stroke="#000000" stroke-width="1.0"/><rect x="1.90" y="2.66" width="5.6" height="1.8" fill="#c4c4c4"/><rect x="11.30" y="2.66" width="5.6" height="1.8" fill="#c4c4c4"/><rect x="20.70" y="2.66" width="5.6" height="1.8" fill="#c4c4c4"/><rect x="30.10" y="2.66" width="5.6" height="1.8" fill="#c4c4c4"/><rect x="39.50" y="2.66" width="5.6" height="1.8" fill="#c4c4c4"/><rect x="1.90" y="9.78" width="5.6" height="1.8" fill="#444444"/><rect x="11.30" y="9.78" width="5.6" height="1.8" fill="#444444"/><rect x="20.70" y="9.78" width="5.6" height="1.8" fill="#444444"/><rect x="30.10" y="9.78" width="5.6" height="1.8" fill="#444444"/><rect x="39.50" y="9.78" width="5.6" height="1.8" fill="#444444"/><rect x="1.90" y="16.90" width="5.6" height="1.8" fill="#444444"/><rect x="11.30" y="16.90" width="5.6" height="1.8" fill="#444444"/><rect x="20.70" y="16.90" width="5.6" height="1.8" fill="#444444"/><rect x="30.10" y="16.90" width="5.6" height="1.8" fill="#444444"/><rect x="39.50" y="16.90" width="5.6" height="1.8" fill="#444444"/><rect x="1.90" y="24.02" width="5.6" height="1.8" fill="#444444"/><rect x="11.30" y="24.02" width="5.6" height="1.8" fill="#444444"/><rect x="20.70" y="24.02" width="5.6" height="1.8" fill="#444444"/><rect x="30.10" y="24.02" width="5.6" height="1.8" fill="#444444"/><rect x="39.50" y="24.02" width="5.6" height="1.8" fill="#444444"/><rect x="1.90" y="31.14" width="5.6" height="1.8" fill="#444444"/><rect x="11.30" y="31.14" width="5.6" height="1.8" fill="#444444"/><rect x="20.70" y="31.14" width="5.6" height="1.8" fill="#444444"/><rect x="30.10" y="31.14" width="5.6" height="1.8" fill="#444444"/><rect x="39.50" y="31.14" width="5.6" height="1.8" fill="#444444"/></svg>
<svg style="left:452.40px;top:100.00px" width="47" height="35.6" viewBox="0 0 47 35.6"><rect x="0" y="0.00" width="47" height="7.12" fill="#4f81bd"/><g opacity="0.9"><rect x="0" y="13.74" width="47" height="1.0" fill="#4f81bd"/><rect x="0" y="20.86" width="47" height="1.0" fill="#4f81bd"/><rect x="0" y="27.98" width="47" height="1.0" fill="#4f81bd"/></g><rect x="0.5" y="0.5" width="46.0" height="34.60" fill="none" stroke="#4f81bd" stroke-width="1.0"/><rect x="1.90" y="2.66" width="5.6" height="1.8" fill="#f4f4f4"/><rect x="11.30" y="2.66" width="5.6" height="1.8" fill="#f4f4f4"/><rect x="20.70" y="2.66" width="5.6" height="1.8" fill="#f4f4f4"/><rect x="30.10" y="2.66" width="5.6" height="1.8" fill="#f4f4f4"/><rect x="39.50" y="2.66" width="5.6" height="1.8" fill="#f4f4f4"/><rect x="1.90" y="9.78" width="5.6" height="1.8" fill="#444444"/><rect x="11.30" y="9.78" width="5.6" height="1.8" fill="#444444"/><rect x="20.70" y="9.78" width="5.6" height="1.8" fill="#444444"/><rect x="30.10" y="9.78" width="5.6" height="1.8" fill="#444444"/><rect x="39.50" y="9.78" width="5.6" height="1.8" fill="#444444"/><rect x="1.90" y="16.90" width="5.6" height="1.8" fill="#444444"/><rect x="11.30" y="16.90" width="5.6" height="1.8" fill="#444444"/><rect x="20.70" y="16.90" width="5.6" height="1.8" fill="#444444"/><rect x="30.10" y="16.90" width="5.6" height="1.8" fill="#444444"/><rect x="39.50" y="16.90" width="5.6" height="1.8" fill="#444444"/><rect x="1.90" y="24.02" width="5.6" height="1.8" fill="#444444"/><rect x="11.30" y="24.02" width="5.6" height="1.8" fill="#444444"/><rect x="20.70" y="24.02" width="5.6" height="1.8" fill="#444444"/><rect x="30.10" y="24.02" width="5.6" height="1.8" fill="#444444"/><rect x="39.50" y="24.02" width="5.6" height="1.8" fill="#444444"/><rect x="1.90" y="31.14" width="5.6" height="1.8" fill="#444444"/><rect x="11.30" y="31.14" width="5.6" height="1.8" fill="#444444"/><rect x="20.70" y="31.14" width="5.6" height="1.8" fill="#444444"/><rect x="30.10" y="31.14" width="5.6" height="1.8" fill="#444444"/><rect x="39.50" y="31.14" width="5.6" height="1.8" fill="#444444"/></svg>
<svg style="left:505.80px;top:100.00px" width="47" height="35.6" viewBox="0 0 47 35.6"><rect x="0" y="0.00" width="47" height="7.12" fill="#c0504d"/><g opacity="0.9"><rect x="0" y="13.74" width="47" height="1.0" fill="#c0504d"/><rect x="0" y="20.86" width="47" height="1.0" fill="#c0504d"/><rect x="0" y="27.98" width="47" height="1.0" fill="#c0504d"/></g><rect x="0.5" y="0.5" width="46.0" height="34.60" fill="none" stroke="#c0504d" stroke-width="1.0"/><rect x="1.90" y="2.66" width="5.6" height="1.8" fill="#f4f4f4"/><rect x="11.30" y="2.66" width="5.6" height="1.8" fill="#f4f4f4"/><rect x="20.70" y="2.66" width="5.6" height="1.8" fill="#f4f4f4"/><rect x="30.10" y="2.66" width="5.6" height="1.8" fill="#f4f4f4"/><rect x="39.50" y="2.66" width="5.6" height="1.8" fill="#f4f4f4"/><rect x="1.90" y="9.78" width="5.6" height="1.8" fill="#444444"/><rect x="11.30" y="9.78" width="5.6" height="1.8" fill="#444444"/><rect x="20.70" y="9.78" width="5.6" height="1.8" fill="#444444"/><rect x="30.10" y="9.78" width="5.6" height="1.8" fill="#444444"/><rect x="39.50" y="9.78" width="5.6" height="1.8" fill="#444444"/><rect x="1.90" y="16.90" width="5.6" height="1.8" fill="#444444"/><rect x="11.30" y="16.90" width="5.6" height="1.8" fill="#444444"/><rect x="20.70" y="16.90" width="5.6" height="1.8" fill="#444444"/><rect x="30.10" y="16.90" width="5.6" height="1.8" fill="#444444"/><rect x="39.50" y="16.90" width="5.6" height="1.8" fill="#444444"/><rect x="1.90" y="24.02" width="5.6" height="1.8" fill="#444444"/><rect x="11.30" y="24.02" width="5.6" height="1.8" fill="#444444"/><rect x="20.70" y="24.02" width="5.6" height="1.8" fill="#444444"/><rect x="30.10" y="24.02" width="5.6" height="1.8" fill="#444444"/><rect x="39.50" y="24.02" width="5.6" height="1.8" fill="#444444"/><rect x="1.90" y="31.14" width="5.6" height="1.8" fill="#444444"/><rect x="11.30" y="31.14" width="5.6" height="1.8" fill="#444444"/><rect x="20.70" y="31.14" width="5.6" height="1.8" fill="#444444"/><rect x="30.10" y="31.14" width="5.6" height="1.8" fill="#444444"/><rect x="39.50" y="31.14" width="5.6" height="1.8" fill="#444444"/></svg>
<svg style="left:559.20px;top:100.00px" width="47" height="35.6" viewBox="0 0 47 35.6"><rect x="0" y="0.00" width="47" height="7.12" fill="#9bbb59"/><g opacity="0.9"><rect x="0" y="13.74" width="47" height="1.0" fill="#9bbb59"/><rect x="0" y="20.86" width="47" height="1.0" fill="#9bbb59"/><rect x="0" y="27.98" width="47" height="1.0" fill="#9bbb59"/></g><rect x="0.5" y="0.5" width="46.0" height="34.60" fill="none" stroke="#9bbb59" stroke-width="1.0"/><rect x="1.90" y="2.66" width="5.6" height="1.8" fill="#f4f4f4"/><rect x="11.30" y="2.66" width="5.6" height="1.8" fill="#f4f4f4"/><rect x="20.70" y="2.66" width="5.6" height="1.8" fill="#f4f4f4"/><rect x="30.10" y="2.66" width="5.6" height="1.8" fill="#f4f4f4"/><rect x="39.50" y="2.66" width="5.6" height="1.8" fill="#f4f4f4"/><rect x="1.90" y="9.78" width="5.6" height="1.8" fill="#444444"/><rect x="11.30" y="9.78" width="5.6" height="1.8" fill="#444444"/><rect x="20.70" y="9.78" width="5.6" height="1.8" fill="#444444"/><rect x="30.10" y="9.78" width="5.6" height="1.8" fill="#444444"/><rect x="39.50" y="9.78" width="5.6" height="1.8" fill="#444444"/><rect x="1.90" y="16.90" width="5.6" height="1.8" fill="#444444"/><rect x="11.30" y="16.90" width="5.6" height="1.8" fill="#444444"/><rect x="20.70" y="16.90" width="5.6" height="1.8" fill="#444444"/><rect x="30.10" y="16.90" width="5.6" height="1.8" fill="#444444"/><rect x="39.50" y="16.90" width="5.6" height="1.8" fill="#444444"/><rect x="1.90" y="24.02" width="5.6" height="1.8" fill="#444444"/><rect x="11.30" y="24.02" width="5.6" height="1.8" fill="#444444"/><rect x="20.70" y="24.02" width="5.6" height="1.8" fill="#444444"/><rect x="30.10" y="24.02" width="5.6" height="1.8" fill="#444444"/><rect x="39.50" y="24.02" width="5.6" height="1.8" fill="#444444"/><rect x="1.90" y="31.14" width="5.6" height="1.8" fill="#444444"/><rect x="11.30" y="31.14" width="5.6" height="1.8" fill="#444444"/><rect x="20.70" y="31.14" width="5.6" height="1.8" fill="#444444"/><rect x="30.10" y="31.14" width="5.6" height="1.8" fill="#444444"/><rect x="39.50" y="31.14" width="5.6" height="1.8" fill="#444444"/></svg>
<svg style="left:612.60px;top:100.00px" width="47" height="35.6" viewBox="0 0 47 35.6"><rect x="0" y="0.00" width="47" height="7.12" fill="#8064a2"/><g opacity="0.9"><rect x="0" y="13.74" width="47" height="1.0" fill="#8064a2"/><rect x="0" y="20.86" width="47" height="1.0" fill="#8064a2"/><rect x="0" y="27.98" width="47" height="1.0" fill="#8064a2"/></g><rect x="0.5" y="0.5" width="46.0" height="34.60" fill="none" stroke="#8064a2" stroke-width="1.0"/><rect x="1.90" y="2.66" width="5.6" height="1.8" fill="#f4f4f4"/><rect x="11.30" y="2.66" width="5.6" height="1.8" fill="#f4f4f4"/><rect x="20.70" y="2.66" width="5.6" height="1.8" fill="#f4f4f4"/><rect x="30.10" y="2.66" width="5.6" height="1.8" fill="#f4f4f4"/><rect x="39.50" y="2.66" width="5.6" height="1.8" fill="#f4f4f4"/><rect x="1.90" y="9.78" width="5.6" height="1.8" fill="#444444"/><rect x="11.30" y="9.78" width="5.6" height="1.8" fill="#444444"/><rect x="20.70" y="9.78" width="5.6" height="1.8" fill="#444444"/><rect x="30.10" y="9.78" width="5.6" height="1.8" fill="#444444"/><rect x="39.50" y="9.78" width="5.6" height="1.8" fill="#444444"/><rect x="1.90" y="16.90" width="5.6" height="1.8" fill="#444444"/><rect x="11.30" y="16.90" width="5.6" height="1.8" fill="#444444"/><rect x="20.70" y="16.90" width="5.6" height="1.8" fill="#444444"/><rect x="30.10" y="16.90" width="5.6" height="1.8" fill="#444444"/><rect x="39.50" y="16.90" width="5.6" height="1.8" fill="#444444"/><rect x="1.90" y="24.02" width="5.6" height="1.8" fill="#444444"/><rect x="11.30" y="24.02" width="5.6" height="1.8" fill="#444444"/><rect x="20.70" y="24.02" width="5.6" height="1.8" fill="#444444"/><rect x="30.10" y="24.02" width="5.6" height="1.8" fill="#444444"/><rect x="39.50" y="24.02" width="5.6" height="1.8" fill="#444444"/><rect x="1.90" y="31.14" width="5.6" height="1.8" fill="#444444"/><rect x="11.30" y="31.14" width="5.6" height="1.8" fill="#444444"/><rect x="20.70" y="31.14" width="5.6" height="1.8" fill="#444444"/><rect x="30.10" y="31.14" width="5.6" height="1.8" fill="#444444"/><rect x="39.50" y="31.14" width="5.6" height="1.8" fill="#444444"/></svg>
<svg style="left:666.00px;top:100.00px" width="47" height="35.6" viewBox="0 0 47 35.6"><rect x="0" y="0.00" width="47" height="7.12" fill="#4bacc6"/><g opacity="0.9"><rect x="0" y="13.74" width="47" height="1.0" fill="#4bacc6"/><rect x="0" y="20.86" width="47" height="1.0" fill="#4bacc6"/><rect x="0" y="27.98" width="47" height="1.0" fill="#4bacc6"/></g><rect x="0.5" y="0.5" width="46.0" height="34.60" fill="none" stroke="#4bacc6" stroke-width="1.0"/><rect x="1.90" y="2.66" width="5.6" height="1.8" fill="#f4f4f4"/><rect x="11.30" y="2.66" width="5.6" height="1.8" fill="#f4f4f4"/><rect x="20.70" y="2.66" width="5.6" height="1.8" fill="#f4f4f4"/><rect x="30.10" y="2.66" width="5.6" height="1.8" fill="#f4f4f4"/><rect x="39.50" y="2.66" width="5.6" height="1.8" fill="#f4f4f4"/><rect x="1.90" y="9.78" width="5.6" height="1.8" fill="#444444"/><rect x="11.30" y="9.78" width="5.6" height="1.8" fill="#444444"/><rect x="20.70" y="9.78" width="5.6" height="1.8" fill="#444444"/><rect x="30.10" y="9.78" width="5.6" height="1.8" fill="#444444"/><rect x="39.50" y="9.78" width="5.6" height="1.8" fill="#444444"/><rect x="1.90" y="16.90" width="5.6" height="1.8" fill="#444444"/><rect x="11.30" y="16.90" width="5.6" height="1.8" fill="#444444"/><rect x="20.70" y="16.90" width="5.6" height="1.8" fill="#444444"/><rect x="30.10" y="16.90" width="5.6" height="1.8" fill="#444444"/><rect x="39.50" y="16.90" width="5.6" height="1.8" fill="#444444"/><rect x="1.90" y="24.02" width="5.6" height="1.8" fill="#444444"/><rect x="11.30" y="24.02" width="5.6" height="1.8" fill="#444444"/><rect x="20.70" y="24.02" width="5.6" height="1.8" fill="#444444"/><rect x="30.10" y="24.02" width="5.6" height="1.8" fill="#444444"/><rect x="39.50" y="24.02" width="5.6" height="1.8" fill="#444444"/><rect x="1.90" y="31.14" width="5.6" height="1.8" fill="#444444"/><rect x="11.30" y="31.14" width="5.6" height="1.8" fill="#444444"/><rect x="20.70" y="31.14" width="5.6" height="1.8" fill="#444444"/><rect x="30.10" y="31.14" width="5.6" height="1.8" fill="#444444"/><rect x="39.50" y="31.14" width="5.6" height="1.8" fill="#444444"/></svg>
<svg style="left:345.60px;top:142.00px" width="47" height="35.6" viewBox="0 0 47 35.6"><rect x="0" y="0.00" width="47" height="7.12" fill="#f79646"/><g opacity="0.9"><rect x="0" y="13.74" width="47" height="1.0" fill="#f79646"/><rect x="0" y="20.86" width="47" height="1.0" fill="#f79646"/><rect x="0" y="27.98" width="47" height="1.0" fill="#f79646"/></g><rect x="0.5" y="0.5" width="46.0" height="34.60" fill="none" stroke="#f79646" stroke-width="1.0"/><rect x="1.90" y="2.66" width="5.6" height="1.8" fill="#f4f4f4"/><rect x="11.30" y="2.66" width="5.6" height="1.8" fill="#f4f4f4"/><rect x="20.70" y="2.66" width="5.6" height="1.8" fill="#f4f4f4"/><rect x="30.10" y="2.66" width="5.6" height="1.8" fill="#f4f4f4"/><rect x="39.50" y="2.66" width="5.6" height="1.8" fill="#f4f4f4"/><rect x="1.90" y="9.78" width="5.6" height="1.8" fill="#444444"/><rect x="11.30" y="9.78" width="5.6" height="1.8" fill="#444444"/><rect x="20.70" y="9.78" width="5.6" height="1.8" fill="#444444"/><rect x="30.10" y="9.78" width="5.6" height="1.8" fill="#444444"/><rect x="39.50" y="9.78" width="5.6" height="1.8" fill="#444444"/><rect x="1.90" y="16.90" width="5.6" height="1.8" fill="#444444"/><rect x="11.30" y="16.90" width="5.6" height="1.8" fill="#444444"/><rect x="20.70" y="16.90" width="5.6" height="1.8" fill="#444444"/><rect x="30.10" y="16.90" width="5.6" height="1.8" fill="#444444"/><rect x="39.50" y="16.90" width="5.6" height="1.8" fill="#444444"/><rect x="1.90" y="24.02" width="5.6" height="1.8" fill="#444444"/><rect x="11.30" y="24.02" width="5.6" height="1.8" fill="#444444"/><rect x="20.70" y="24.02" width="5.6" height="1.8" fill="#444444"/><rect x="30.10" y="24.02" width="5.6" height="1.8" fill="#444444"/><rect x="39.50" y="24.02" width="5.6" height="1.8" fill="#444444"/><rect x="1.90" y="31.14" width="5.6" height="1.8" fill="#444444"/><rect x="11.30" y="31.14" width="5.6" height="1.8" fill="#444444"/><rect x="20.70" y="31.14" width="5.6" height="1.8" fill="#444444"/><rect x="30.10" y="31.14" width="5.6" height="1.8" fill="#444444"/><rect x="39.50" y="31.14" width="5.6" height="1.8" fill="#444444"/></svg>
<svg style="left:399.00px;top:142.00px" width="47" height="35.6" viewBox="0 0 47 35.6"><g opacity="1"><rect x="0" y="6.62" width="47" height="1.0" fill="#000000"/><rect x="0" y="13.74" width="47" height="1.0" fill="#000000"/><rect x="0" y="20.86" width="47" height="1.0" fill="#000000"/><rect x="0" y="27.98" width="47" height="1.0" fill="#000000"/><rect x="8.90" y="0.00" width="1.0" height="35.60" fill="#000000"/><rect x="18.30" y="0.00" width="1.0" height="35.60" fill="#000000"/><rect x="27.70" y="0.00" width="1.0" height="35.60" fill="#000000"/><rect x="37.10" y="0.00" width="1.0" height="35.60" fill="#000000"/><rect x="0.5" y="0.5" width="46.0" height="34.60" fill="none" stroke="#000000" stroke-width="1.0"/></g><rect x="1.90" y="2.66" width="5.6" height="1.8" fill="#444444"/><rect x="11.30" y="2.66" width="5.6" height="1.8" fill="#444444"/><rect x="20.70" y="2.66" width="5.6" height="1.8" fill="#444444"/><rect x="30.10" y="2.66" width="5.6" height="1.8" fill="#444444"/><rect x="39.50" y="2.66" width="5.6" height="1.8" fill="#444444"/><rect x="1.90" y="9.78" width="5.6" height="1.8" fill="#444444"/><rect x="11.30" y="9.78" width="5.6" height="1.8" fill="#444444"/><rect x="20.70" y="9.78" width="5.6" height="1.8" fill="#444444"/><rect x="30.10" y="9.78" width="5.6" height="1.8" fill="#444444"/><rect x="39.50" y="9.78" width="5.6" height="1.8" fill="#444444"/><rect x="1.90" y="16.90" width="5.6" height="1.8" fill="#444444"/><rect x="11.30" y="16.90" width="5.6" height="1.8" fill="#444444"/><rect x="20.70" y="16.90" width="5.6" height="1.8" fill="#444444"/><rect x="30.10" y="16.90" width="5.6" height="1.8" fill="#444444"/><rect x="39.50" y="16.90" width="5.6" height="1.8" fill="#444444"/><rect x="1.90" y="24.02" width="5.6" height="1.8" fill="#444444"/><rect x="11.30" y="24.02" width="5.6" height="1.8" fill="#444444"/><rect x="20.70" y="24.02" width="5.6" height="1.8" fill="#444444"/><rect x="30.10" y="24.02" width="5.6" height="1.8" fill="#444444"/><rect x="39.50" y="24.02" width="5.6" height="1.8" fill="#444444"/><rect x="1.90" y="31.14" width="5.6" height="1.8" fill="#444444"/><rect x="11.30" y="31.14" width="5.6" height="1.8" fill="#444444"/><rect x="20.70" y="31.14" width="5.6" height="1.8" fill="#444444"/><rect x="30.10" y="31.14" width="5.6" height="1.8" fill="#444444"/><rect x="39.50" y="31.14" width="5.6" height="1.8" fill="#444444"/></svg>
<svg style="left:452.40px;top:142.00px" width="47" height="35.6" viewBox="0 0 47 35.6"><g opacity="0.9"><rect x="0" y="6.62" width="47" height="1.0" fill="#4f81bd"/><rect x="0" y="13.74" width="47" height="1.0" fill="#4f81bd"/><rect x="0" y="20.86" width="47" height="1.0" fill="#4f81bd"/><rect x="0" y="27.98" width="47" height="1.0" fill="#4f81bd"/><rect x="8.90" y="0.00" width="1.0" height="35.60" fill="#4f81bd"/><rect x="18.30" y="0.00" width="1.0" height="35.60" fill="#4f81bd"/><rect x="27.70" y="0.00" width="1.0" height="35.60" fill="#4f81bd"/><rect x="37.10" y="0.00" width="1.0" height="35.60" fill="#4f81bd"/><rect x="0.5" y="0.5" width="46.0" height="34.60" fill="none" stroke="#4f81bd" stroke-width="1.0"/></g><rect x="1.90" y="2.66" width="5.6" height="1.8" fill="#444444"/><rect x="11.30" y="2.66" width="5.6" height="1.8" fill="#444444"/><rect x="20.70" y="2.66" width="5.6" height="1.8" fill="#444444"/><rect x="30.10" y="2.66" width="5.6" height="1.8" fill="#444444"/><rect x="39.50" y="2.66" width="5.6" height="1.8" fill="#444444"/><rect x="1.90" y="9.78" width="5.6" height="1.8" fill="#444444"/><rect x="11.30" y="9.78" width="5.6" height="1.8" fill="#444444"/><rect x="20.70" y="9.78" width="5.6" height="1.8" fill="#444444"/><rect x="30.10" y="9.78" width="5.6" height="1.8" fill="#444444"/><rect x="39.50" y="9.78" width="5.6" height="1.8" fill="#444444"/><rect x="1.90" y="16.90" width="5.6" height="1.8" fill="#444444"/><rect x="11.30" y="16.90" width="5.6" height="1.8" fill="#444444"/><rect x="20.70" y="16.90" width="5.6" height="1.8" fill="#444444"/><rect x="30.10" y="16.90" width="5.6" height="1.8" fill="#444444"/><rect x="39.50" y="16.90" width="5.6" height="1.8" fill="#444444"/><rect x="1.90" y="24.02" width="5.6" height="1.8" fill="#444444"/><rect x="11.30" y="24.02" width="5.6" height="1.8" fill="#444444"/><rect x="20.70" y="24.02" width="5.6" height="1.8" fill="#444444"/><rect x="30.10" y="24.02" width="5.6" height="1.8" fill="#444444"/><rect x="39.50" y="24.02" width="5.6" height="1.8" fill="#444444"/><rect x="1.90" y="31.14" width="5.6" height="1.8" fill="#444444"/><rect x="11.30" y="31.14" width="5.6" height="1.8" fill="#444444"/><rect x="20.70" y="31.14" width="5.6" height="1.8" fill="#444444"/><rect x="30.10" y="31.14" width="5.6" height="1.8" fill="#444444"/><rect x="39.50" y="31.14" width="5.6" height="1.8" fill="#444444"/></svg>
<svg style="left:505.80px;top:142.00px" width="47" height="35.6" viewBox="0 0 47 35.6"><g opacity="0.9"><rect x="0" y="6.62" width="47" height="1.0" fill="#c0504d"/><rect x="0" y="13.74" width="47" height="1.0" fill="#c0504d"/><rect x="0" y="20.86" width="47" height="1.0" fill="#c0504d"/><rect x="0" y="27.98" width="47" height="1.0" fill="#c0504d"/><rect x="8.90" y="0.00" width="1.0" height="35.60" fill="#c0504d"/><rect x="18.30" y="0.00" width="1.0" height="35.60" fill="#c0504d"/><rect x="27.70" y="0.00" width="1.0" height="35.60" fill="#c0504d"/><rect x="37.10" y="0.00" width="1.0" height="35.60" fill="#c0504d"/><rect x="0.5" y="0.5" width="46.0" height="34.60" fill="none" stroke="#c0504d" stroke-width="1.0"/></g><rect x="1.90" y="2.66" width="5.6" height="1.8" fill="#444444"/><rect x="11.30" y="2.66" width="5.6" height="1.8" fill="#444444"/><rect x="20.70" y="2.66" width="5.6" height="1.8" fill="#444444"/><rect x="30.10" y="2.66" width="5.6" height="1.8" fill="#444444"/><rect x="39.50" y="2.66" width="5.6" height="1.8" fill="#444444"/><rect x="1.90" y="9.78" width="5.6" height="1.8" fill="#444444"/><rect x="11.30" y="9.78" width="5.6" height="1.8" fill="#444444"/><rect x="20.70" y="9.78" width="5.6" height="1.8" fill="#444444"/><rect x="30.10" y="9.78" width="5.6" height="1.8" fill="#444444"/><rect x="39.50" y="9.78" width="5.6" height="1.8" fill="#444444"/><rect x="1.90" y="16.90" width="5.6" height="1.8" fill="#444444"/><rect x="11.30" y="16.90" width="5.6" height="1.8" fill="#444444"/><rect x="20.70" y="16.90" width="5.6" height="1.8" fill="#444444"/><rect x="30.10" y="16.90" width="5.6" height="1.8" fill="#444444"/><rect x="39.50" y="16.90" width="5.6" height="1.8" fill="#444444"/><rect x="1.90" y="24.02" width="5.6" height="1.8" fill="#444444"/><rect x="11.30" y="24.02" width="5.6" height="1.8" fill="#444444"/><rect x="20.70" y="24.02" width="5.6" height="1.8" fill="#444444"/><rect x="30.10" y="24.02" width="5.6" height="1.8" fill="#444444"/><rect x="39.50" y="24.02" width="5.6" height="1.8" fill="#444444"/><rect x="1.90" y="31.14" width="5.6" height="1.8" fill="#444444"/><rect x="11.30" y="31.14" width="5.6" height="1.8" fill="#444444"/><rect x="20.70" y="31.14" width="5.6" height="1.8" fill="#444444"/><rect x="30.10" y="31.14" width="5.6" height="1.8" fill="#444444"/><rect x="39.50" y="31.14" width="5.6" height="1.8" fill="#444444"/></svg>
<svg style="left:559.20px;top:142.00px" width="47" height="35.6" viewBox="0 0 47 35.6"><g opacity="0.9"><rect x="0" y="6.62" width="47" height="1.0" fill="#9bbb59"/><rect x="0" y="13.74" width="47" height="1.0" fill="#9bbb59"/><rect x="0" y="20.86" width="47" height="1.0" fill="#9bbb59"/><rect x="0" y="27.98" width="47" height="1.0" fill="#9bbb59"/><rect x="8.90" y="0.00" width="1.0" height="35.60" fill="#9bbb59"/><rect x="18.30" y="0.00" width="1.0" height="35.60" fill="#9bbb59"/><rect x="27.70" y="0.00" width="1.0" height="35.60" fill="#9bbb59"/><rect x="37.10" y="0.00" width="1.0" height="35.60" fill="#9bbb59"/><rect x="0.5" y="0.5" width="46.0" height="34.60" fill="none" stroke="#9bbb59" stroke-width="1.0"/></g><rect x="1.90" y="2.66" width="5.6" height="1.8" fill="#444444"/><rect x="11.30" y="2.66" width="5.6" height="1.8" fill="#444444"/><rect x="20.70" y="2.66" width="5.6" height="1.8" fill="#444444"/><rect x="30.10" y="2.66" width="5.6" height="1.8" fill="#444444"/><rect x="39.50" y="2.66" width="5.6" height="1.8" fill="#444444"/><rect x="1.90" y="9.78" width="5.6" height="1.8" fill="#444444"/><rect x="11.30" y="9.78" width="5.6" height="1.8" fill="#444444"/><rect x="20.70" y="9.78" width="5.6" height="1.8" fill="#444444"/><rect x="30.10" y="9.78" width="5.6" height="1.8" fill="#444444"/><rect x="39.50" y="9.78" width="5.6" height="1.8" fill="#444444"/><rect x="1.90" y="16.90" width="5.6" height="1.8" fill="#444444"/><rect x="11.30" y="16.90" width="5.6" height="1.8" fill="#444444"/><rect x="20.70" y="16.90" width="5.6" height="1.8" fill="#444444"/><rect x="30.10" y="16.90" width="5.6" height="1.8" fill="#444444"/><rect x="39.50" y="16.90" width="5.6" height="1.8" fill="#444444"/><rect x="1.90" y="24.02" width="5.6" height="1.8" fill="#444444"/><rect x="11.30" y="24.02" width="5.6" height="1.8" fill="#444444"/><rect x="20.70" y="24.02" width="5.6" height="1.8" fill="#444444"/><rect x="30.10" y="24.02" width="5.6" height="1.8" fill="#444444"/><rect x="39.50" y="24.02" width="5.6" height="1.8" fill="#444444"/><rect x="1.90" y="31.14" width="5.6" height="1.8" fill="#444444"/><rect x="11.30" y="31.14" width="5.6" height="1.8" fill="#444444"/><rect x="20.70" y="31.14" width="5.6" height="1.8" fill="#444444"/><rect x="30.10" y="31.14" width="5.6" height="1.8" fill="#444444"/><rect x="39.50" y="31.14" width="5.6" height="1.8" fill="#444444"/></svg>
<svg style="left:612.60px;top:142.00px" width="47" height="35.6" viewBox="0 0 47 35.6"><g opacity="0.9"><rect x="0" y="6.62" width="47" height="1.0" fill="#8064a2"/><rect x="0" y="13.74" width="47" height="1.0" fill="#8064a2"/><rect x="0" y="20.86" width="47" height="1.0" fill="#8064a2"/><rect x="0" y="27.98" width="47" height="1.0" fill="#8064a2"/><rect x="8.90" y="0.00" width="1.0" height="35.60" fill="#8064a2"/><rect x="18.30" y="0.00" width="1.0" height="35.60" fill="#8064a2"/><rect x="27.70" y="0.00" width="1.0" height="35.60" fill="#8064a2"/><rect x="37.10" y="0.00" width="1.0" height="35.60" fill="#8064a2"/><rect x="0.5" y="0.5" width="46.0" height="34.60" fill="none" stroke="#8064a2" stroke-width="1.0"/></g><rect x="1.90" y="2.66" width="5.6" height="1.8" fill="#444444"/><rect x="11.30" y="2.66" width="5.6" height="1.8" fill="#444444"/><rect x="20.70" y="2.66" width="5.6" height="1.8" fill="#444444"/><rect x="30.10" y="2.66" width="5.6" height="1.8" fill="#444444"/><rect x="39.50" y="2.66" width="5.6" height="1.8" fill="#444444"/><rect x="1.90" y="9.78" width="5.6" height="1.8" fill="#444444"/><rect x="11.30" y="9.78" width="5.6" height="1.8" fill="#444444"/><rect x="20.70" y="9.78" width="5.6" height="1.8" fill="#444444"/><rect x="30.10" y="9.78" width="5.6" height="1.8" fill="#444444"/><rect x="39.50" y="9.78" width="5.6" height="1.8" fill="#444444"/><rect x="1.90" y="16.90" width="5.6" height="1.8" fill="#444444"/><rect x="11.30" y="16.90" width="5.6" height="1.8" fill="#444444"/><rect x="20.70" y="16.90" width="5.6" height="1.8" fill="#444444"/><rect x="30.10" y="16.90" width="5.6" height="1.8" fill="#444444"/><rect x="39.50" y="16.90" width="5.6" height="1.8" fill="#444444"/><rect x="1.90" y="24.02" width="5.6" height="1.8" fill="#444444"/><rect x="11.30" y="24.02" width="5.6" height="1.8" fill="#444444"/><rect x="20.70" y="24.02" width="5.6" height="1.8" fill="#444444"/><rect x="30.10" y="24.02" width="5.6" height="1.8" fill="#444444"/><rect x="39.50" y="24.02" width="5.6" height="1.8" fill="#444444"/><rect x="1.90" y="31.14" width="5.6" height="1.8" fill="#444444"/><rect x="11.30" y="31.14" width="5.6" height="1.8" fill="#444444"/><rect x="20.70" y="31.14" width="5.6" height="1.8" fill="#444444"/><rect x="30.10" y="31.14" width="5.6" height="1.8" fill="#444444"/><rect x="39.50" y="31.14" width="5.6" height="1.8" fill="#444444"/></svg>
<svg style="left:666.00px;top:142.00px" width="47" height="35.6" viewBox="0 0 47 35.6"><g opacity="0.9"><rect x="0" y="6.62" width="47" height="1.0" fill="#4bacc6"/><rect x="0" y="13.74" width="47" height="1.0" fill="#4bacc6"/><rect x="0" y="20.86" width="47" height="1.0" fill="#4bacc6"/><rect x="0" y="27.98" width="47" height="1.0" fill="#4bacc6"/><rect x="8.90" y="0.00" width="1.0" height="35.60" fill="#4bacc6"/><rect x="18.30" y="0.00" width="1.0" height="35.60" fill="#4bacc6"/><rect x="27.70" y="0.00" width="1.0" height="35.60" fill="#4bacc6"/><rect x="37.10" y="0.00" width="1.0" height="35.60" fill="#4bacc6"/><rect x="0.5" y="0.5" width="46.0" height="34.60" fill="none" stroke="#4bacc6" stroke-width="1.0"/></g><rect x="1.90" y="2.66" width="5.6" height="1.8" fill="#444444"/><rect x="11.30" y="2.66" width="5.6" height="1.8" fill="#444444"/><rect x="20.70" y="2.66" width="5.6" height="1.8" fill="#444444"/><rect x="30.10" y="2.66" width="5.6" height="1.8" fill="#444444"/><rect x="39.50" y="2.66" width="5.6" height="1.8" fill="#444444"/><rect x="1.90" y="9.78" width="5.6" height="1.8" fill="#444444"/><rect x="11.30" y="9.78" width="5.6" height="1.8" fill="#444444"/><rect x="20.70" y="9.78" width="5.6" height="1.8" fill="#444444"/><rect x="30.10" y="9.78" width="5.6" height="1.8" fill="#444444"/><rect x="39.50" y="9.78" width="5.6" height="1.8" fill="#444444"/><rect x="1.90" y="16.90" width="5.6" height="1.8" fill="#444444"/><rect x="11.30" y="16.90" width="5.6" height="1.8" fill="#444444"/><rect x="20.70" y="16.90" width="5.6" height="1.8" fill="#444444"/><rect x="30.10" y="16.90" width="5.6" height="1.8" fill="#444444"/><rect x="39.50" y="16.90" width="5.6" height="1.8" fill="#444444"/><rect x="1.90" y="24.02" width="5.6" height="1.8" fill="#444444"/><rect x="11.30" y="24.02" width="5.6" height="1.8" fill="#444444"/><rect x="20.70" y="24.02" width="5.6" height="1.8" fill="#444444"/><rect x="30.10" y="24.02" width="5.6" height="1.8" fill="#444444"/><rect x="39.50" y="24.02" width="5.6" height="1.8" fill="#444444"/><rect x="1.90" y="31.14" width="5.6" height="1.8" fill="#444444"/><rect x="11.30" y="31.14" width="5.6" height="1.8" fill="#444444"/><rect x="20.70" y="31.14" width="5.6" height="1.8" fill="#444444"/><rect x="30.10" y="31.14" width="5.6" height="1.8" fill="#444444"/><rect x="39.50" y="31.14" width="5.6" height="1.8" fill="#444444"/></svg>
<svg style="left:345.60px;top:184.00px" width="47" height="35.6" viewBox="0 0 47 35.6"><g opacity="0.9"><rect x="0" y="6.62" width="47" height="1.0" fill="#f79646"/><rect x="0" y="13.74" width="47" height="1.0" fill="#f79646"/><rect x="0" y="20.86" width="47" height="1.0" fill="#f79646"/><rect x="0" y="27.98" width="47" height="1.0" fill="#f79646"/><rect x="8.90" y="0.00" width="1.0" height="35.60" fill="#f79646"/><rect x="18.30" y="0.00" width="1.0" height="35.60" fill="#f79646"/><rect x="27.70" y="0.00" width="1.0" height="35.60" fill="#f79646"/><rect x="37.10" y="0.00" width="1.0" height="35.60" fill="#f79646"/><rect x="0.5" y="0.5" width="46.0" height="34.60" fill="none" stroke="#f79646" stroke-width="1.0"/></g><rect x="1.90" y="2.66" width="5.6" height="1.8" fill="#444444"/><rect x="11.30" y="2.66" width="5.6" height="1.8" fill="#444444"/><rect x="20.70" y="2.66" width="5.6" height="1.8" fill="#444444"/><rect x="30.10" y="2.66" width="5.6" height="1.8" fill="#444444"/><rect x="39.50" y="2.66" width="5.6" height="1.8" fill="#444444"/><rect x="1.90" y="9.78" width="5.6" height="1.8" fill="#444444"/><rect x="11.30" y="9.78" width="5.6" height="1.8" fill="#444444"/><rect x="20.70" y="9.78" width="5.6" height="1.8" fill="#444444"/><rect x="30.10" y="9.78" width="5.6" height="1.8" fill="#444444"/><rect x="39.50" y="9.78" width="5.6" height="1.8" fill="#444444"/><rect x="1.90" y="16.90" width="5.6" height="1.8" fill="#444444"/><rect x="11.30" y="16.90" width="5.6" height="1.8" fill="#444444"/><rect x="20.70" y="16.90" width="5.6" height="1.8" fill="#444444"/><rect x="30.10" y="16.90" width="5.6" height="1.8" fill="#444444"/><rect x="39.50" y="16.90" width="5.6" height="1.8" fill="#444444"/><rect x="1.90" y="24.02" width="5.6" height="1.8" fill="#444444"/><rect x="11.30" y="24.02" width="5.6" height="1.8" fill="#444444"/><rect x="20.70" y="24.02" width="5.6" height="1.8" fill="#444444"/><rect x="30.10" y="24.02" width="5.6" height="1.8" fill="#444444"/><rect x="39.50" y="24.02" width="5.6" height="1.8" fill="#444444"/><rect x="1.90" y="31.14" width="5.6" height="1.8" fill="#444444"/><rect x="11.30" y="31.14" width="5.6" height="1.8" fill="#444444"/><rect x="20.70" y="31.14" width="5.6" height="1.8" fill="#444444"/><rect x="30.10" y="31.14" width="5.6" height="1.8" fill="#444444"/><rect x="39.50" y="31.14" width="5.6" height="1.8" fill="#444444"/></svg>
<div style="left:502.6px;top:294px;width:53.5px;height:41.8px;box-sizing:border-box;border:1px solid #a8a8a8;background:#e6e6e6"></div>
<svg style="left:345.60px;top:255.20px" width="47" height="35.6" viewBox="0 0 47 35.6"><rect x="0" y="0.00" width="47" height="7.12" fill="#000"/><rect x="0" y="7.12" width="47" height="7.12" fill="#e6e6e6"/><rect x="0" y="21.36" width="47" height="7.12" fill="#e6e6e6"/><rect x="0" y="6.52" width="47" height="1.2" fill="#000"/><rect x="0" y="13.64" width="47" height="1.2" fill="#000"/><rect x="0" y="20.76" width="47" height="1.2" fill="#000"/><rect x="0" y="27.88" width="47" height="1.2" fill="#000"/><rect x="0.9" y="0.9" width="45.2" height="33.80" fill="none" stroke="#000" stroke-width="1.8"/><rect x="1.90" y="2.66" width="5.6" height="1.8" fill="#c4c4c4"/><rect x="11.30" y="2.66" width="5.6" height="1.8" fill="#c4c4c4"/><rect x="20.70" y="2.66" width="5.6" height="1.8" fill="#c4c4c4"/><rect x="30.10" y="2.66" width="5.6" height="1.8" fill="#c4c4c4"/><rect x="39.50" y="2.66" width="5.6" height="1.8" fill="#c4c4c4"/><rect x="1.90" y="9.78" width="5.6" height="1.8" fill="#444444"/><rect x="11.30" y="9.78" width="5.6" height="1.8" fill="#444444"/><rect x="20.70" y="9.78" width="5.6" height="1.8" fill="#444444"/><rect x="30.10" y="9.78" width="5.6" height="1.8" fill="#444444"/><rect x="39.50" y="9.78" width="5.6" height="1.8" fill="#444444"/><rect x="1.90" y="16.90" width="5.6" height="1.8" fill="#444444"/><rect x="11.30" y="16.90" width="5.6" height="1.8" fill="#444444"/><rect x="20.70" y="16.90" width="5.6" height="1.8" fill="#444444"/><rect x="30.10" y="16.90" width="5.6" height="1.8" fill="#444444"/><rect x="39.50" y="16.90" width="5.6" height="1.8" fill="#444444"/><rect x="1.90" y="24.02" width="5.6" height="1.8" fill="#444444"/><rect x="11.30" y="24.02" width="5.6" height="1.8" fill="#444444"/><rect x="20.70" y="24.02" width="5.6" height="1.8" fill="#444444"/><rect x="30.10" y="24.02" width="5.6" height="1.8" fill="#444444"/><rect x="39.50" y="24.02" width="5.6" height="1.8" fill="#444444"/><rect x="1.90" y="31.14" width="5.6" height="1.8" fill="#444444"/><rect x="11.30" y="31.14" width="5.6" height="1.8" fill="#444444"/><rect x="20.70" y="31.14" width="5.6" height="1.8" fill="#444444"/><rect x="30.10" y="31.14" width="5.6" height="1.8" fill="#444444"/><rect x="39.50" y="31.14" width="5.6" height="1.8" fill="#444444"/></svg>
<svg style="left:399.00px;top:255.20px" width="47" height="35.6" viewBox="0 0 47 35.6"><rect x="0" y="0.00" width="47" height="7.12" fill="#4f81bd"/><rect x="0" y="7.12" width="47" height="7.12" fill="#dce6f1"/><rect x="0" y="21.36" width="47" height="7.12" fill="#dce6f1"/><rect x="0" y="13.74" width="47" height="1.0" fill="#b8cce4"/><rect x="0" y="20.86" width="47" height="1.0" fill="#b8cce4"/><rect x="0" y="27.98" width="47" height="1.0" fill="#b8cce4"/><rect x="0.5" y="0.5" width="46.0" height="34.60" fill="none" stroke="#b8cce4" stroke-width="1.0"/><rect x="0" y="0.00" width="47" height="7.12" fill="#4f81bd"/><rect x="1.90" y="2.66" width="5.6" height="1.8" fill="#f4f4f4"/><rect x="11.30" y="2.66" width="5.6" height="1.8" fill="#f4f4f4"/><rect x="20.70" y="2.66" width="5.6" height="1.8" fill="#f4f4f4"/><rect x="30.10" y="2.66" width="5.6" height="1.8" fill="#f4f4f4"/><rect x="39.50" y="2.66" width="5.6" height="1.8" fill="#f4f4f4"/><rect x="1.90" y="9.78" width="5.6" height="1.8" fill="#444444"/><rect x="11.30" y="9.78" width="5.6" height="1.8" fill="#444444"/><rect x="20.70" y="9.78" width="5.6" height="1.8" fill="#444444"/><rect x="30.10" y="9.78" width="5.6" height="1.8" fill="#444444"/><rect x="39.50" y="9.78" width="5.6" height="1.8" fill="#444444"/><rect x="1.90" y="16.90" width="5.6" height="1.8" fill="#444444"/><rect x="11.30" y="16.90" width="5.6" height="1.8" fill="#444444"/><rect x="20.70" y="16.90" width="5.6" height="1.8" fill="#444444"/><rect x="30.10" y="16.90" width="5.6" height="1.8" fill="#444444"/><rect x="39.50" y="16.90" width="5.6" height="1.8" fill="#444444"/><rect x="1.90" y="24.02" width="5.6" height="1.8" fill="#444444"/><rect x="11.30" y="24.02" width="5.6" height="1.8" fill="#444444"/><rect x="20.70" y="24.02" width="5.6" height="1.8" fill="#444444"/><rect x="30.10" y="24.02" width="5.6" height="1.8" fill="#444444"/><rect x="39.50" y="24.02" width="5.6" height="1.8" fill="#444444"/><rect x="1.90" y="31.14" width="5.6" height="1.8" fill="#444444"/><rect x="11.30" y="31.14" width="5.6" height="1.8" fill="#444444"/><rect x="20.70" y="31.14" width="5.6" height="1.8" fill="#444444"/><rect x="30.10" y="31.14" width="5.6" height="1.8" fill="#444444"/><rect x="39.50" y="31.14" width="5.6" height="1.8" fill="#444444"/></svg>
<svg style="left:452.40px;top:255.20px" width="47" height="35.6" viewBox="0 0 47 35.6"><rect x="0" y="0.00" width="47" height="7.12" fill="#c0504d"/><rect x="0" y="7.12" width="47" height="7.12" fill="#f2dcdb"/><rect x="0" y="21.36" width="47" height="7.12" fill="#f2dcdb"/><rect x="0" y="13.74" width="47" height="1.0" fill="#e6b8b7"/><rect x="0" y="20.86" width="47" height="1.0" fill="#e6b8b7"/><rect x="0" y="27.98" width="47" height="1.0" fill="#e6b8b7"/><rect x="0.5" y="0.5" width="46.0" height="34.60" fill="none" stroke="#e6b8b7" stroke-width="1.0"/><rect x="0" y="0.00" width="47" height="7.12" fill="#c0504d"/><rect x="1.90" y="2.66" width="5.6" height="1.8" fill="#f4f4f4"/><rect x="11.30" y="2.66" width="5.6" height="1.8" fill="#f4f4f4"/><rect x="20.70" y="2.66" width="5.6" height="1.8" fill="#f4f4f4"/><rect x="30.10" y="2.66" width="5.6" height="1.8" fill="#f4f4f4"/><rect x="39.50" y="2.66" width="5.6" height="1.8" fill="#f4f4f4"/><rect x="1.90" y="9.78" width="5.6" height="1.8" fill="#444444"/><rect x="11.30" y="9.78" width="5.6" height="1.8" fill="#444444"/><rect x="20.70" y="9.78" width="5.6" height="1.8" fill="#444444"/><rect x="30.10" y="9.78" width="5.6" height="1.8" fill="#444444"/><rect x="39.50" y="9.78" width="5.6" height="1.8" fill="#444444"/><rect x="1.90" y="16.90" width="5.6" height="1.8" fill="#444444"/><rect x="11.30" y="16.90" width="5.6" height="1.8" fill="#444444"/><rect x="20.70" y="16.90" width="5.6" height="1.8" fill="#444444"/><rect x="30.10" y="16.90" width="5.6" height="1.8" fill="#444444"/><rect x="39.50" y="16.90" width="5.6" height="1.8" fill="#444444"/><rect x="1.90" y="24.02" width="5.6" height="1.8" fill="#444444"/><rect x="11.30" y="24.02" width="5.6" height="1.8" fill="#444444"/><rect x="20.70" y="24.02" width="5.6" height="1.8" fill="#444444"/><rect x="30.10" y="24.02" width="5.6" height="1.8" fill="#444444"/><rect x="39.50" y="24.02" width="5.6" height="1.8" fill="#444444"/><rect x="1.90" y="31.14" width="5.6" height="1.8" fill="#444444"/><rect x="11.30" y="31.14" width="5.6" height="1.8" fill="#444444"/><rect x="20.70" y="31.14" width="5.6" height="1.8" fill="#444444"/><rect x="30.10" y="31.14" width="5.6" height="1.8" fill="#444444"/><rect x="39.50" y="31.14" width="5.6" height="1.8" fill="#444444"/></svg>
<svg style="left:505.80px;top:255.20px" width="47" height="35.6" viewBox="0 0 47 35.6"><rect x="0" y="0.00" width="47" height="7.12" fill="#9bbb59"/><rect x="0" y="7.12" width="47" height="7.12" fill="#ebf1de"/><rect x="0" y="21.36" width="47" height="7.12" fill="#ebf1de"/><rect x="0" y="13.74" width="47" height="1.0" fill="#d8e4bc"/><rect x="0" y="20.86" width="47" height="1.0" fill="#d8e4bc"/><rect x="0" y="27.98" width="47" height="1.0" fill="#d8e4bc"/><rect x="0.5" y="0.5" width="46.0" height="34.60" fill="none" stroke="#d8e4bc" stroke-width="1.0"/><rect x="0" y="0.00" width="47" height="7.12" fill="#9bbb59"/><rect x="1.90" y="2.66" width="5.6" height="1.8" fill="#f4f4f4"/><rect x="11.30" y="2.66" width="5.6" height="1.8" fill="#f4f4f4"/><rect x="20.70" y="2.66" width="5.6" height="1.8" fill="#f4f4f4"/><rect x="30.10" y="2.66" width="5.6" height="1.8" fill="#f4f4f4"/><rect x="39.50" y="2.66" width="5.6" height="1.8" fill="#f4f4f4"/><rect x="1.90" y="9.78" width="5.6" height="1.8" fill="#444444"/><rect x="11.30" y="9.78" width="5.6" height="1.8" fill="#444444"/><rect x="20.70" y="9.78" width="5.6" height="1.8" fill="#444444"/><rect x="30.10" y="9.78" width="5.6" height="1.8" fill="#444444"/><rect x="39.50" y="9.78" width="5.6" height="1.8" fill="#444444"/><rect x="1.90" y="16.90" width="5.6" height="1.8" fill="#444444"/><rect x="11.30" y="16.90" width="5.6" height="1.8" fill="#444444"/><rect x="20.70" y="16.90" width="5.6" height="1.8" fill="#444444"/><rect x="30.10" y="16.90" width="5.6" height="1.8" fill="#444444"/><rect x="39.50" y="16.90" width="5.6" height="1.8" fill="#444444"/><rect x="1.90" y="24.02" width="5.6" height="1.8" fill="#444444"/><rect x="11.30" y="24.02" width="5.6" height="1.8" fill="#444444"/><rect x="20.70" y="24.02" width="5.6" height="1.8" fill="#444444"/><rect x="30.10" y="24.02" width="5.6" height="1.8" fill="#444444"/><rect x="39.50" y="24.02" width="5.6" height="1.8" fill="#444444"/><rect x="1.90" y="31.14" width="5.6" height="1.8" fill="#444444"/><rect x="11.30" y="31.14" width="5.6" height="1.8" fill="#444444"/><rect x="20.70" y="31.14" width="5.6" height="1.8" fill="#444444"/><rect x="30.10" y="31.14" width="5.6" height="1.8" fill="#444444"/><rect x="39.50" y="31.14" width="5.6" height="1.8" fill="#444444"/></svg>
<svg style="left:559.20px;top:255.20px" width="47" height="35.6" viewBox="0 0 47 35.6"><rect x="0" y="0.00" width="47" height="7.12" fill="#8064a2"/><rect x="0" y="7.12" width="47" height="7.12" fill="#e4dfec"/><rect x="0" y="21.36" width="47" height="7.12" fill="#e4dfec"/><rect x="0" y="13.74" width="47" height="1.0" fill="#ccc0da"/><rect x="0" y="20.86" width="47" height="1.0" fill="#ccc0da"/><rect x="0" y="27.98" width="47" height="1.0" fill="#ccc0da"/><rect x="0.5" y="0.5" width="46.0" height="34.60" fill="none" stroke="#ccc0da" stroke-width="1.0"/><rect x="0" y="0.00" width="47" height="7.12" fill="#8064a2"/><rect x="1.90" y="2.66" width="5.6" height="1.8" fill="#f4f4f4"/><rect x="11.30" y="2.66" width="5.6" height="1.8" fill="#f4f4f4"/><rect x="20.70" y="2.66" width="5.6" height="1.8" fill="#f4f4f4"/><rect x="30.10" y="2.66" width="5.6" height="1.8" fill="#f4f4f4"/><rect x="39.50" y="2.66" width="5.6" height="1.8" fill="#f4f4f4"/><rect x="1.90" y="9.78" width="5.6" height="1.8" fill="#444444"/><rect x="11.30" y="9.78" width="5.6" height="1.8" fill="#444444"/><rect x="20.70" y="9.78" width="5.6" height="1.8" fill="#444444"/><rect x="30.10" y="9.78" width="5.6" height="1.8" fill="#444444"/><rect x="39.50" y="9.78" width="5.6" height="1.8" fill="#444444"/><rect x="1.90" y="16.90" width="5.6" height="1.8" fill="#444444"/><rect x="11.30" y="16.90" width="5.6" height="1.8" fill="#444444"/><rect x="20.70" y="16.90" width="5.6" height="1.8" fill="#444444"/><rect x="30.10" y="16.90" width="5.6" height="1.8" fill="#444444"/><rect x="39.50" y="16.90" width="5.6" height="1.8" fill="#444444"/><rect x="1.90" y="24.02" width="5.6" height="1.8" fill="#444444"/><rect x="11.30" y="24.02" width="5.6" height="1.8" fill="#444444"/><rect x="20.70" y="24.02" width="5.6" height="1.8" fill="#444444"/><rect x="30.10" y="24.02" width="5.6" height="1.8" fill="#444444"/><rect x="39.50" y="24.02" width="5.6" height="1.8" fill="#444444"/><rect x="1.90" y="31.14" width="5.6" height="1.8" fill="#444444"/><rect x="11.30" y="31.14" width="5.6" height="1.8" fill="#444444"/><rect x="20.70" y="31.14" width="5.6" height="1.8" fill="#444444"/><rect x="30.10" y="31.14" width="5.6" height="1.8" fill="#444444"/><rect x="39.50" y="31.14" width="5.6" height="1.8" fill="#444444"/></svg>
<svg style="left:612.60px;top:255.20px" width="47" height="35.6" viewBox="0 0 47 35.6"><rect x="0" y="0.00" width="47" height="7.12" fill="#4bacc6"/><rect x="0" y="7.12" width="47" height="7.12" fill="#daeef3"/><rect x="0" y="21.36" width="47" height="7.12" fill="#daeef3"/><rect x="0" y="13.74" width="47" height="1.0" fill="#b7dee8"/><rect x="0" y="20.86" width="47" height="1.0" fill="#b7dee8"/><rect x="0" y="27.98" width="47" height="1.0" fill="#b7dee8"/><rect x="0.5" y="0.5" width="46.0" height="34.60" fill="none" stroke="#b7dee8" stroke-width="1.0"/><rect x="0" y="0.00" width="47" height="7.12" fill="#4bacc6"/><rect x="1.90" y="2.66" width="5.6" height="1.8" fill="#f4f4f4"/><rect x="11.30" y="2.66" width="5.6" height="1.8" fill="#f4f4f4"/><rect x="20.70" y="2.66" width="5.6" height="1.8" fill="#f4f4f4"/><rect x="30.10" y="2.66" width="5.6" height="1.8" fill="#f4f4f4"/><rect x="39.50" y="2.66" width="5.6" height="1.8" fill="#f4f4f4"/><rect x="1.90" y="9.78" width="5.6" height="1.8" fill="#444444"/><rect x="11.30" y="9.78" width="5.6" height="1.8" fill="#444444"/><rect x="20.70" y="9.78" width="5.6" height="1.8" fill="#444444"/><rect x="30.10" y="9.78" width="5.6" height="1.8" fill="#444444"/><rect x="39.50" y="9.78" width="5.6" height="1.8" fill="#444444"/><rect x="1.90" y="16.90" width="5.6" height="1.8" fill="#444444"/><rect x="11.30" y="16.90" width="5.6" height="1.8" fill="#444444"/><rect x="20.70" y="16.90" width="5.6" height="1.8" fill="#444444"/><rect x="30.10" y="16.90" width="5.6" height="1.8" fill="#444444"/><rect x="39.50" y="16.90" width="5.6" height="1.8" fill="#444444"/><rect x="1.90" y="24.02" width="5.6" height="1.8" fill="#444444"/><rect x="11.30" y="24.02" width="5.6" height="1.8" fill="#444444"/><rect x="20.70" y="24.02" width="5.6" height="1.8" fill="#444444"/><rect x="30.10" y="24.02" width="5.6" height="1.8" fill="#444444"/><rect x="39.50" y="24.02" width="5.6" height="1.8" fill="#444444"/><rect x="1.90" y="31.14" width="5.6" height="1.8" fill="#444444"/><rect x="11.30" y="31.14" width="5.6" height="1.8" fill="#444444"/><rect x="20.70" y="31.14" width="5.6" height="1.8" fill="#444444"/><rect x="30.10" y="31.14" width="5.6" height="1.8" fill="#444444"/><rect x="39.50" y="31.14" width="5.6" height="1.8" fill="#444444"/></svg>
<svg style="left:666.00px;top:255.20px" width="47" height="35.6" viewBox="0 0 47 35.6"><rect x="0" y="0.00" width="47" height="7.12" fill="#f79646"/><rect x="0" y="7.12" width="47" height="7.12" fill="#fde9d9"/><rect x="0" y="21.36" width="47" height="7.12" fill="#fde9d9"/><rect x="0" y="13.74" width="47" height="1.0" fill="#fcd5b4"/><rect x="0" y="20.86" width="47" height="1.0" fill="#fcd5b4"/><rect x="0" y="27.98" width="47" height="1.0" fill="#fcd5b4"/><rect x="0.5" y="0.5" width="46.0" height="34.60" fill="none" stroke="#fcd5b4" stroke-width="1.0"/><rect x="0" y="0.00" width="47" height="7.12" fill="#f79646"/><rect x="1.90" y="2.66" width="5.6" height="1.8" fill="#f4f4f4"/><rect x="11.30" y="2.66" width="5.6" height="1.8" fill="#f4f4f4"/><rect x="20.70" y="2.66" width="5.6" height="1.8" fill="#f4f4f4"/><rect x="30.10" y="2.66" width="5.6" height="1.8" fill="#f4f4f4"/><rect x="39.50" y="2.66" width="5.6" height="1.8" fill="#f4f4f4"/><rect x="1.90" y="9.78" width="5.6" height="1.8" fill="#444444"/><rect x="11.30" y="9.78" width="5.6" height="1.8" fill="#444444"/><rect x="20.70" y="9.78" width="5.6" height="1.8" fill="#444444"/><rect x="30.10" y="9.78" width="5.6" height="1.8" fill="#444444"/><rect x="39.50" y="9.78" width="5.6" height="1.8" fill="#444444"/><rect x="1.90" y="16.90" width="5.6" height="1.8" fill="#444444"/><rect x="11.30" y="16.90" width="5.6" height="1.8" fill="#444444"/><rect x="20.70" y="16.90" width="5.6" height="1.8" fill="#444444"/><rect x="30.10" y="16.90" width="5.6" height="1.8" fill="#444444"/><rect x="39.50" y="16.90" width="5.6" height="1.8" fill="#444444"/><rect x="1.90" y="24.02" width="5.6" height="1.8" fill="#444444"/><rect x="11.30" y="24.02" width="5.6" height="1.8" fill="#444444"/><rect x="20.70" y="24.02" width="5.6" height="1.8" fill="#444444"/><rect x="30.10" y="24.02" width="5.6" height="1.8" fill="#444444"/><rect x="39.50" y="24.02" width="5.6" height="1.8" fill="#444444"/><rect x="1.90" y="31.14" width="5.6" height="1.8" fill="#444444"/><rect x="11.30" y="31.14" width="5.6" height="1.8" fill="#444444"/><rect x="20.70" y="31.14" width="5.6" height="1.8" fill="#444444"/><rect x="30.10" y="31.14" width="5.6" height="1.8" fill="#444444"/><rect x="39.50" y="31.14" width="5.6" height="1.8" fill="#444444"/></svg>
<svg style="left:345.60px;top:297.20px" width="47" height="35.6" viewBox="0 0 47 35.6"><rect x="0" y="0.00" width="47" height="7.12" fill="#000"/><rect x="0" y="7.12" width="47" height="7.12" fill="#a6a6a6"/><rect x="0" y="14.24" width="47" height="7.12" fill="#d9d9d9"/><rect x="0" y="21.36" width="47" height="7.12" fill="#a6a6a6"/><rect x="0" y="28.48" width="47" height="7.12" fill="#d9d9d9"/><rect x="0" y="6.62" width="47" height="1.0" fill="#fff"/><rect x="0" y="13.74" width="47" height="1.0" fill="#fff"/><rect x="0" y="20.86" width="47" height="1.0" fill="#fff"/><rect x="0" y="27.98" width="47" height="1.0" fill="#fff"/><rect x="8.90" y="0.00" width="1.0" height="35.60" fill="#fff"/><rect x="18.30" y="0.00" width="1.0" height="35.60" fill="#fff"/><rect x="27.70" y="0.00" width="1.0" height="35.60" fill="#fff"/><rect x="37.10" y="0.00" width="1.0" height="35.60" fill="#fff"/><rect x="1.90" y="2.66" width="5.6" height="1.8" fill="#c4c4c4"/><rect x="11.30" y="2.66" width="5.6" height="1.8" fill="#c4c4c4"/><rect x="20.70" y="2.66" width="5.6" height="1.8" fill="#c4c4c4"/><rect x="30.10" y="2.66" width="5.6" height="1.8" fill="#c4c4c4"/><rect x="39.50" y="2.66" width="5.6" height="1.8" fill="#c4c4c4"/><rect x="1.90" y="9.78" width="5.6" height="1.8" fill="#444444"/><rect x="11.30" y="9.78" width="5.6" height="1.8" fill="#444444"/><rect x="20.70" y="9.78" width="5.6" height="1.8" fill="#444444"/><rect x="30.10" y="9.78" width="5.6" height="1.8" fill="#444444"/><rect x="39.50" y="9.78" width="5.6" height="1.8" fill="#444444"/><rect x="1.90" y="16.90" width="5.6" height="1.8" fill="#444444"/><rect x="11.30" y="16.90" width="5.6" height="1.8" fill="#444444"/><rect x="20.70" y="16.90" width="5.6" height="1.8" fill="#444444"/><rect x="30.10" y="16.90" width="5.6" height="1.8" fill="#444444"/><rect x="39.50" y="16.90" width="5.6" height="1.8" fill="#444444"/><rect x="1.90" y="24.02" width="5.6" height="1.8" fill="#444444"/><rect x="11.30" y="24.02" width="5.6" height="1.8" fill="#444444"/><rect x="20.70" y="24.02" width="5.6" height="1.8" fill="#444444"/><rect x="30.10" y="24.02" width="5.6" height="1.8" fill="#444444"/><rect x="39.50" y="24.02" width="5.6" height="1.8" fill="#444444"/><rect x="1.90" y="31.14" width="5.6" height="1.8" fill="#444444"/><rect x="11.30" y="31.14" width="5.6" height="1.8" fill="#444444"/><rect x="20.70" y="31.14" width="5.6" height="1.8" fill="#444444"/><rect x="30.10" y="31.14" width="5.6" height="1.8" fill="#444444"/><rect x="39.50" y="31.14" width="5.6" height="1.8" fill="#444444"/></svg>
<svg style="left:399.00px;top:297.20px" width="47" height="35.6" viewBox="0 0 47 35.6"><rect x="0" y="0.00" width="47" height="7.12" fill="#4f81bd"/><rect x="0" y="7.12" width="47" height="7.12" fill="#b8cce4"/><rect x="0" y="14.24" width="47" height="7.12" fill="#dce6f1"/><rect x="0" y="21.36" width="47" height="7.12" fill="#b8cce4"/><rect x="0" y="28.48" width="47" height="7.12" fill="#dce6f1"/><rect x="0" y="6.62" width="47" height="1.0" fill="#fff"/><rect x="0" y="13.74" width="47" height="1.0" fill="#fff"/><rect x="0" y="20.86" width="47" height="1.0" fill="#fff"/><rect x="0" y="27.98" width="47" height="1.0" fill="#fff"/><rect x="8.90" y="0.00" width="1.0" height="35.60" fill="#fff"/><rect x="18.30" y="0.00" width="1.0" height="35.60" fill="#fff"/><rect x="27.70" y="0.00" width="1.0" height="35.60" fill="#fff"/><rect x="37.10" y="0.00" width="1.0" height="35.60" fill="#fff"/><rect x="1.90" y="2.66" width="5.6" height="1.8" fill="#f4f4f4"/><rect x="11.30" y="2.66" width="5.6" height="1.8" fill="#f4f4f4"/><rect x="20.70" y="2.66" width="5.6" height="1.8" fill="#f4f4f4"/><rect x="30.10" y="2.66" width="5.6" height="1.8" fill="#f4f4f4"/><rect x="39.50" y="2.66" width="5.6" height="1.8" fill="#f4f4f4"/><rect x="1.90" y="9.78" width="5.6" height="1.8" fill="#444444"/><rect x="11.30" y="9.78" width="5.6" height="1.8" fill="#444444"/><rect x="20.70" y="9.78" width="5.6" height="1.8" fill="#444444"/><rect x="30.10" y="9.78" width="5.6" height="1.8" fill="#444444"/><rect x="39.50" y="9.78" width="5.6" height="1.8" fill="#444444"/><rect x="1.90" y="16.90" width="5.6" height="1.8" fill="#444444"/><rect x="11.30" y="16.90" width="5.6" height="1.8" fill="#444444"/><rect x="20.70" y="16.90" width="5.6" height="1.8" fill="#444444"/><rect x="30.10" y="16.90" width="5.6" height="1.8" fill="#444444"/><rect x="39.50" y="16.90" width="5.6" height="1.8" fill="#444444"/><rect x="1.90" y="24.02" width="5.6" height="1.8" fill="#444444"/><rect x="11.30" y="24.02" width="5.6" height="1.8" fill="#444444"/><rect x="20.70" y="24.02" width="5.6" height="1.8" fill="#444444"/><rect x="30.10" y="24.02" width="5.6" height="1.8" fill="#444444"/><rect x="39.50" y="24.02" width="5.6" height="1.8" fill="#444444"/><rect x="1.90" y="31.14" width="5.6" height="1.8" fill="#444444"/><rect x="11.30" y="31.14" width="5.6" height="1.8" fill="#444444"/><rect x="20.70" y="31.14" width="5.6" height="1.8" fill="#444444"/><rect x="30.10" y="31.14" width="5.6" height="1.8" fill="#444444"/><rect x="39.50" y="31.14" width="5.6" height="1.8" fill="#444444"/></svg>
<svg style="left:452.40px;top:297.20px" width="47" height="35.6" viewBox="0 0 47 35.6"><rect x="0" y="0.00" width="47" height="7.12" fill="#c0504d"/><rect x="0" y="7.12" width="47" height="7.12" fill="#e6b8b7"/><rect x="0" y="14.24" width="47" height="7.12" fill="#f2dcdb"/><rect x="0" y="21.36" width="47" height="7.12" fill="#e6b8b7"/><rect x="0" y="28.48" width="47" height="7.12" fill="#f2dcdb"/><rect x="0" y="6.62" width="47" height="1.0" fill="#fff"/><rect x="0" y="13.74" width="47" height="1.0" fill="#fff"/><rect x="0" y="20.86" width="47" height="1.0" fill="#fff"/><rect x="0" y="27.98" width="47" height="1.0" fill="#fff"/><rect x="8.90" y="0.00" width="1.0" height="35.60" fill="#fff"/><rect x="18.30" y="0.00" width="1.0" height="35.60" fill="#fff"/><rect x="27.70" y="0.00" width="1.0" height="35.60" fill="#fff"/><rect x="37.10" y="0.00" width="1.0" height="35.60" fill="#fff"/><rect x="1.90" y="2.66" width="5.6" height="1.8" fill="#f4f4f4"/><rect x="11.30" y="2.66" width="5.6" height="1.8" fill="#f4f4f4"/><rect x="20.70" y="2.66" width="5.6" height="1.8" fill="#f4f4f4"/><rect x="30.10" y="2.66" width="5.6" height="1.8" fill="#f4f4f4"/><rect x="39.50" y="2.66" width="5.6" height="1.8" fill="#f4f4f4"/><rect x="1.90" y="9.78" width="5.6" height="1.8" fill="#444444"/><rect x="11.30" y="9.78" width="5.6" height="1.8" fill="#444444"/><rect x="20.70" y="9.78" width="5.6" height="1.8" fill="#444444"/><rect x="30.10" y="9.78" width="5.6" height="1.8" fill="#444444"/><rect x="39.50" y="9.78" width="5.6" height="1.8" fill="#444444"/><rect x="1.90" y="16.90" width="5.6" height="1.8" fill="#444444"/><rect x="11.30" y="16.90" width="5.6" height="1.8" fill="#444444"/><rect x="20.70" y="16.90" width="5.6" height="1.8" fill="#444444"/><rect x="30.10" y="16.90" width="5.6" height="1.8" fill="#444444"/><rect x="39.50" y="16.90" width="5.6" height="1.8" fill="#444444"/><rect x="1.90" y="24.02" width="5.6" height="1.8" fill="#444444"/><rect x="11.30" y="24.02" width="5.6" height="1.8" fill="#444444"/><rect x="20.70" y="24.02" width="5.6" height="1.8" fill="#444444"/><rect x="30.10" y="24.02" width="5.6" height="1.8" fill="#444444"/><rect x="39.50" y="24.02" width="5.6" height="1.8" fill="#444444"/><rect x="1.90" y="31.14" width="5.6" height="1.8" fill="#444444"/><rect x="11.30" y="31.14" width="5.6" height="1.8" fill="#444444"/><rect x="20.70" y="31.14" width="5.6" height="1.8" fill="#444444"/><rect x="30.10" y="31.14" width="5.6" height="1.8" fill="#444444"/><rect x="39.50" y="31.14" width="5.6" height="1.8" fill="#444444"/></svg>
<svg style="left:505.80px;top:297.20px" width="47" height="35.6" viewBox="0 0 47 35.6"><rect x="0" y="0.00" width="47" height="7.12" fill="#9bbb59"/><rect x="0" y="7.12" width="47" height="7.12" fill="#d8e4bc"/><rect x="0" y="14.24" width="47" height="7.12" fill="#ebf1de"/><rect x="0" y="21.36" width="47" height="7.12" fill="#d8e4bc"/><rect x="0" y="28.48" width="47" height="7.12" fill="#ebf1de"/><rect x="0" y="6.62" width="47" height="1.0" fill="#fff"/><rect x="0" y="13.74" width="47" height="1.0" fill="#fff"/><rect x="0" y="20.86" width="47" height="1.0" fill="#fff"/><rect x="0" y="27.98" width="47" height="1.0" fill="#fff"/><rect x="8.90" y="0.00" width="1.0" height="35.60" fill="#fff"/><rect x="18.30" y="0.00" width="1.0" height="35.60" fill="#fff"/><rect x="27.70" y="0.00" width="1.0" height="35.60" fill="#fff"/><rect x="37.10" y="0.00" width="1.0" height="35.60" fill="#fff"/><rect x="1.90" y="2.66" width="5.6" height="1.8" fill="#f4f4f4"/><rect x="11.30" y="2.66" width="5.6" height="1.8" fill="#f4f4f4"/><rect x="20.70" y="2.66" width="5.6" height="1.8" fill="#f4f4f4"/><rect x="30.10" y="2.66" width="5.6" height="1.8" fill="#f4f4f4"/><rect x="39.50" y="2.66" width="5.6" height="1.8" fill="#f4f4f4"/><rect x="1.90" y="9.78" width="5.6" height="1.8" fill="#444444"/><rect x="11.30" y="9.78" width="5.6" height="1.8" fill="#444444"/><rect x="20.70" y="9.78" width="5.6" height="1.8" fill="#444444"/><rect x="30.10" y="9.78" width="5.6" height="1.8" fill="#444444"/><rect x="39.50" y="9.78" width="5.6" height="1.8" fill="#444444"/><rect x="1.90" y="16.90" width="5.6" height="1.8" fill="#444444"/><rect x="11.30" y="16.90" width="5.6" height="1.8" fill="#444444"/><rect x="20.70" y="16.90" width="5.6" height="1.8" fill="#444444"/><rect x="30.10" y="16.90" width="5.6" height="1.8" fill="#444444"/><rect x="39.50" y="16.90" width="5.6" height="1.8" fill="#444444"/><rect x="1.90" y="24.02" width="5.6" height="1.8" fill="#444444"/><rect x="11.30" y="24.02" width="5.6" height="1.8" fill="#444444"/><rect x="20.70" y="24.02" width="5.6" height="1.8" fill="#444444"/><rect x="30.10" y="24.02" width="5.6" height="1.8" fill="#444444"/><rect x="39.50" y="24.02" width="5.6" height="1.8" fill="#444444"/><rect x="1.90" y="31.14" width="5.6" height="1.8" fill="#444444"/><rect x="11.30" y="31.14" width="5.6" height="1.8" fill="#444444"/><rect x="20.70" y="31.14" width="5.6" height="1.8" fill="#444444"/><rect x="30.10" y="31.14" width="5.6" height="1.8" fill="#444444"/><rect x="39.50" y="31.14" width="5.6" height="1.8" fill="#444444"/></svg>
<svg style="left:559.20px;top:297.20px" width="47" height="35.6" viewBox="0 0 47 35.6"><rect x="0" y="0.00" width="47" height="7.12" fill="#8064a2"/><rect x="0" y="7.12" width="47" height="7.12" fill="#ccc0da"/><rect x="0" y="14.24" width="47" height="7.12" fill="#e4dfec"/><rect x="0" y="21.36" width="47" height="7.12" fill="#ccc0da"/><rect x="0" y="28.48" width="47" height="7.12" fill="#e4dfec"/><rect x="0" y="6.62" width="47" height="1.0" fill="#fff"/><rect x="0" y="13.74" width="47" height="1.0" fill="#fff"/><rect x="0" y="20.86" width="47" height="1.0" fill="#fff"/><rect x="0" y="27.98" width="47" height="1.0" fill="#fff"/><rect x="8.90" y="0.00" width="1.0" height="35.60" fill="#fff"/><rect x="18.30" y="0.00" width="1.0" height="35.60" fill="#fff"/><rect x="27.70" y="0.00" width="1.0" height="35.60" fill="#fff"/><rect x="37.10" y="0.00" width="1.0" height="35.60" fill="#fff"/><rect x="1.90" y="2.66" width="5.6" height="1.8" fill="#f4f4f4"/><rect x="11.30" y="2.66" width="5.6" height="1.8" fill="#f4f4f4"/><rect x="20.70" y="2.66" width="5.6" height="1.8" fill="#f4f4f4"/><rect x="30.10" y="2.66" width="5.6" height="1.8" fill="#f4f4f4"/><rect x="39.50" y="2.66" width="5.6" height="1.8" fill="#f4f4f4"/><rect x="1.90" y="9.78" width="5.6" height="1.8" fill="#444444"/><rect x="11.30" y="9.78" width="5.6" height="1.8" fill="#444444"/><rect x="20.70" y="9.78" width="5.6" height="1.8" fill="#444444"/><rect x="30.10" y="9.78" width="5.6" height="1.8" fill="#444444"/><rect x="39.50" y="9.78" width="5.6" height="1.8" fill="#444444"/><rect x="1.90" y="16.90" width="5.6" height="1.8" fill="#444444"/><rect x="11.30" y="16.90" width="5.6" height="1.8" fill="#444444"/><rect x="20.70" y="16.90" width="5.6" height="1.8" fill="#444444"/><rect x="30.10" y="16.90" width="5.6" height="1.8" fill="#444444"/><rect x="39.50" y="16.90" width="5.6" height="1.8" fill="#444444"/><rect x="1.90" y="24.02" width="5.6" height="1.8" fill="#444444"/><rect x="11.30" y="24.02" width="5.6" height="1.8" fill="#444444"/><rect x="20.70" y="24.02" width="5.6" height="1.8" fill="#444444"/><rect x="30.10" y="24.02" width="5.6" height="1.8" fill="#444444"/><rect x="39.50" y="24.02" width="5.6" height="1.8" fill="#444444"/><rect x="1.90" y="31.14" width="5.6" height="1.8" fill="#444444"/><rect x="11.30" y="31.14" width="5.6" height="1.8" fill="#444444"/><rect x="20.70" y="31.14" width="5.6" height="1.8" fill="#444444"/><rect x="30.10" y="31.14" width="5.6" height="1.8" fill="#444444"/><rect x="39.50" y="31.14" width="5.6" height="1.8" fill="#444444"/></svg>
<svg style="left:612.60px;top:297.20px" width="47" height="35.6" viewBox="0 0 47 35.6"><rect x="0" y="0.00" width="47" height="7.12" fill="#4bacc6"/><rect x="0" y="7.12" width="47" height="7.12" fill="#b7dee8"/><rect x="0" y="14.24" width="47" height="7.12" fill="#daeef3"/><rect x="0" y="21.36" width="47" height="7.12" fill="#b7dee8"/><rect x="0" y="28.48" width="47" height="7.12" fill="#daeef3"/><rect x="0" y="6.62" width="47" height="1.0" fill="#fff"/><rect x="0" y="13.74" width="47" height="1.0" fill="#fff"/><rect x="0" y="20.86" width="47" height="1.0" fill="#fff"/><rect x="0" y="27.98" width="47" height="1.0" fill="#fff"/><rect x="8.90" y="0.00" width="1.0" height="35.60" fill="#fff"/><rect x="18.30" y="0.00" width="1.0" height="35.60" fill="#fff"/><rect x="27.70" y="0.00" width="1.0" height="35.60" fill="#fff"/><rect x="37.10" y="0.00" width="1.0" height="35.60" fill="#fff"/><rect x="1.90" y="2.66" width="5.6" height="1.8" fill="#f4f4f4"/><rect x="11.30" y="2.66" width="5.6" height="1.8" fill="#f4f4f4"/><rect x="20.70" y="2.66" width="5.6" height="1.8" fill="#f4f4f4"/><rect x="30.10" y="2.66" width="5.6" height="1.8" fill="#f4f4f4"/><rect x="39.50" y="2.66" width="5.6" height="1.8" fill="#f4f4f4"/><rect x="1.90" y="9.78" width="5.6" height="1.8" fill="#444444"/><rect x="11.30" y="9.78" width="5.6" height="1.8" fill="#444444"/><rect x="20.70" y="9.78" width="5.6" height="1.8" fill="#444444"/><rect x="30.10" y="9.78" width="5.6" height="1.8" fill="#444444"/><rect x="39.50" y="9.78" width="5.6" height="1.8" fill="#444444"/><rect x="1.90" y="16.90" width="5.6" height="1.8" fill="#444444"/><rect x="11.30" y="16.90" width="5.6" height="1.8" fill="#444444"/><rect x="20.70" y="16.90" width="5.6" height="1.8" fill="#444444"/><rect x="30.10" y="16.90" width="5.6" height="1.8" fill="#444444"/><rect x="39.50" y="16.90" width="5.6" height="1.8" fill="#444444"/><rect x="1.90" y="24.02" width="5.6" height="1.8" fill="#444444"/><rect x="11.30" y="24.02" width="5.6" height="1.8" fill="#444444"/><rect x="20.70" y="24.02" width="5.6" height="1.8" fill="#444444"/><rect x="30.10" y="24.02" width="5.6" height="1.8" fill="#444444"/><rect x="39.50" y="24.02" width="5.6" height="1.8" fill="#444444"/><rect x="1.90" y="31.14" width="5.6" height="1.8" fill="#444444"/><rect x="11.30" y="31.14" width="5.6" height="1.8" fill="#444444"/><rect x="20.70" y="31.14" width="5.6" height="1.8" fill="#444444"/><rect x="30.10" y="31.14" width="5.6" height="1.8" fill="#444444"/><rect x="39.50" y="31.14" width="5.6" height="1.8" fill="#444444"/></svg>
<svg style="left:666.00px;top:297.20px" width="47" height="35.6" viewBox="0 0 47 35.6"><rect x="0" y="0.00" width="47" height="7.12" fill="#f79646"/><rect x="0" y="7.12" width="47" height="7.12" fill="#fcd5b4"/><rect x="0" y="14.24" width="47" height="7.12" fill="#fde9d9"/><rect x="0" y="21.36" width="47" height="7.12" fill="#fcd5b4"/><rect x="0" y="28.48" width="47" height="7.12" fill="#fde9d9"/><rect x="0" y="6.62" width="47" height="1.0" fill="#fff"/><rect x="0" y="13.74" width="47" height="1.0" fill="#fff"/><rect x="0" y="20.86" width="47" height="1.0" fill="#fff"/><rect x="0" y="27.98" width="47" height="1.0" fill="#fff"/><rect x="8.90" y="0.00" width="1.0" height="35.60" fill="#fff"/><rect x="18.30" y="0.00" width="1.0" height="35.60" fill="#fff"/><rect x="27.70" y="0.00" width="1.0" height="35.60" fill="#fff"/><rect x="37.10" y="0.00" width="1.0" height="35.60" fill="#fff"/><rect x="1.90" y="2.66" width="5.6" height="1.8" fill="#f4f4f4"/><rect x="11.30" y="2.66" width="5.6" height="1.8" fill="#f4f4f4"/><rect x="20.70" y="2.66" width="5.6" height="1.8" fill="#f4f4f4"/><rect x="30.10" y="2.66" width="5.6" height="1.8" fill="#f4f4f4"/><rect x="39.50" y="2.66" width="5.6" height="1.8" fill="#f4f4f4"/><rect x="1.90" y="9.78" width="5.6" height="1.8" fill="#444444"/><rect x="11.30" y="9.78" width="5.6" height="1.8" fill="#444444"/><rect x="20.70" y="9.78" width="5.6" height="1.8" fill="#444444"/><rect x="30.10" y="9.78" width="5.6" height="1.8" fill="#444444"/><rect x="39.50" y="9.78" width="5.6" height="1.8" fill="#444444"/><rect x="1.90" y="16.90" width="5.6" height="1.8" fill="#444444"/><rect x="11.30" y="16.90" width="5.6" height="1.8" fill="#444444"/><rect x="20.70" y="16.90" width="5.6" height="1.8" fill="#444444"/><rect x="30.10" y="16.90" width="5.6" height="1.8" fill="#444444"/><rect x="39.50" y="16.90" width="5.6" height="1.8" fill="#444444"/><rect x="1.90" y="24.02" width="5.6" height="1.8" fill="#444444"/><rect x="11.30" y="24.02" width="5.6" height="1.8" fill="#444444"/><rect x="20.70" y="24.02" width="5.6" height="1.8" fill="#444444"/><rect x="30.10" y="24.02" width="5.6" height="1.8" fill="#444444"/><rect x="39.50" y="24.02" width="5.6" height="1.8" fill="#444444"/><rect x="1.90" y="31.14" width="5.6" height="1.8" fill="#444444"/><rect x="11.30" y="31.14" width="5.6" height="1.8" fill="#444444"/><rect x="20.70" y="31.14" width="5.6" height="1.8" fill="#444444"/><rect x="30.10" y="31.14" width="5.6" height="1.8" fill="#444444"/><rect x="39.50" y="31.14" width="5.6" height="1.8" fill="#444444"/></svg>
<svg style="left:345.60px;top:339.00px" width="47" height="35.6" viewBox="0 0 47 35.6"><rect x="0" y="0.00" width="47" height="7.12" fill="#000"/><rect x="0" y="6.62" width="47" height="1.0" fill="#000"/><rect x="0" y="13.74" width="47" height="1.0" fill="#000"/><rect x="0" y="20.86" width="47" height="1.0" fill="#000"/><rect x="0" y="27.98" width="47" height="1.0" fill="#000"/><rect x="8.90" y="0.00" width="1.0" height="35.60" fill="#000"/><rect x="18.30" y="0.00" width="1.0" height="35.60" fill="#000"/><rect x="27.70" y="0.00" width="1.0" height="35.60" fill="#000"/><rect x="37.10" y="0.00" width="1.0" height="35.60" fill="#000"/><rect x="0.8" y="0.8" width="45.4" height="34.00" fill="none" stroke="#000" stroke-width="1.6"/><rect x="1.90" y="2.66" width="5.6" height="1.8" fill="#c4c4c4"/><rect x="11.30" y="2.66" width="5.6" height="1.8" fill="#c4c4c4"/><rect x="20.70" y="2.66" width="5.6" height="1.8" fill="#c4c4c4"/><rect x="30.10" y="2.66" width="5.6" height="1.8" fill="#c4c4c4"/><rect x="39.50" y="2.66" width="5.6" height="1.8" fill="#c4c4c4"/><rect x="1.90" y="9.78" width="5.6" height="1.8" fill="#444444"/><rect x="11.30" y="9.78" width="5.6" height="1.8" fill="#444444"/><rect x="20.70" y="9.78" width="5.6" height="1.8" fill="#444444"/><rect x="30.10" y="9.78" width="5.6" height="1.8" fill="#444444"/><rect x="39.50" y="9.78" width="5.6" height="1.8" fill="#444444"/><rect x="1.90" y="16.90" width="5.6" height="1.8" fill="#444444"/><rect x="11.30" y="16.90" width="5.6" height="1.8" fill="#444444"/><rect x="20.70" y="16.90" width="5.6" height="1.8" fill="#444444"/><rect x="30.10" y="16.90" width="5.6" height="1.8" fill="#444444"/><rect x="39.50" y="16.90" width="5.6" height="1.8" fill="#444444"/><rect x="1.90" y="24.02" width="5.6" height="1.8" fill="#444444"/><rect x="11.30" y="24.02" width="5.6" height="1.8" fill="#444444"/><rect x="20.70" y="24.02" width="5.6" height="1.8" fill="#444444"/><rect x="30.10" y="24.02" width="5.6" height="1.8" fill="#444444"/><rect x="39.50" y="24.02" width="5.6" height="1.8" fill="#444444"/><rect x="1.90" y="31.14" width="5.6" height="1.8" fill="#444444"/><rect x="11.30" y="31.14" width="5.6" height="1.8" fill="#444444"/><rect x="20.70" y="31.14" width="5.6" height="1.8" fill="#444444"/><rect x="30.10" y="31.14" width="5.6" height="1.8" fill="#444444"/><rect x="39.50" y="31.14" width="5.6" height="1.8" fill="#444444"/></svg>
<svg style="left:399.00px;top:339.00px" width="47" height="35.6" viewBox="0 0 47 35.6"><rect x="0" y="0.00" width="47" height="7.12" fill="#4f81bd"/><rect x="0" y="7.12" width="47" height="7.12" fill="#d9d9d9"/><rect x="0" y="21.36" width="47" height="7.12" fill="#d9d9d9"/><rect x="0" y="0.00" width="47" height="0.8" fill="#000"/><rect x="0" y="6.62" width="47" height="1.0" fill="#000"/><rect x="0" y="34.30" width="47" height="1.3" fill="#000"/><rect x="1.90" y="2.66" width="5.6" height="1.8" fill="#f4f4f4"/><rect x="11.30" y="2.66" width="5.6" height="1.8" fill="#f4f4f4"/><rect x="20.70" y="2.66" width="5.6" height="1.8" fill="#f4f4f4"/><rect x="30.10" y="2.66" width="5.6" height="1.8" fill="#f4f4f4"/><rect x="39.50" y="2.66" width="5.6" height="1.8" fill="#f4f4f4"/><rect x="1.90" y="9.78" width="5.6" height="1.8" fill="#444444"/><rect x="11.30" y="9.78" width="5.6" height="1.8" fill="#444444"/><rect x="20.70" y="9.78" width="5.6" height="1.8" fill="#444444"/><rect x="30.10" y="9.78" width="5.6" height="1.8" fill="#444444"/><rect x="39.50" y="9.78" width="5.6" height="1.8" fill="#444444"/><rect x="1.90" y="16.90" width="5.6" height="1.8" fill="#444444"/><rect x="11.30" y="16.90" width="5.6" height="1.8" fill="#444444"/><rect x="20.70" y="16.90" width="5.6" height="1.8" fill="#444444"/><rect x="30.10" y="16.90" width="5.6" height="1.8" fill="#444444"/><rect x="39.50" y="16.90" width="5.6" height="1.8" fill="#444444"/><rect x="1.90" y="24.02" width="5.6" height="1.8" fill="#444444"/><rect x="11.30" y="24.02" width="5.6" height="1.8" fill="#444444"/><rect x="20.70" y="24.02" width="5.6" height="1.8" fill="#444444"/><rect x="30.10" y="24.02" width="5.6" height="1.8" fill="#444444"/><rect x="39.50" y="24.02" width="5.6" height="1.8" fill="#444444"/><rect x="1.90" y="31.14" width="5.6" height="1.8" fill="#444444"/><rect x="11.30" y="31.14" width="5.6" height="1.8" fill="#444444"/><rect x="20.70" y="31.14" width="5.6" height="1.8" fill="#444444"/><rect x="30.10" y="31.14" width="5.6" height="1.8" fill="#444444"/><rect x="39.50" y="31.14" width="5.6" height="1.8" fill="#444444"/></svg>
<svg style="left:452.40px;top:339.00px" width="47" height="35.6" viewBox="0 0 47 35.6"><rect x="0" y="0.00" width="47" height="7.12" fill="#c0504d"/><rect x="0" y="7.12" width="47" height="7.12" fill="#d9d9d9"/><rect x="0" y="21.36" width="47" height="7.12" fill="#d9d9d9"/><rect x="0" y="0.00" width="47" height="0.8" fill="#000"/><rect x="0" y="6.62" width="47" height="1.0" fill="#000"/><rect x="0" y="34.30" width="47" height="1.3" fill="#000"/><rect x="1.90" y="2.66" width="5.6" height="1.8" fill="#f4f4f4"/><rect x="11.30" y="2.66" width="5.6" height="1.8" fill="#f4f4f4"/><rect x="20.70" y="2.66" width="5.6" height="1.8" fill="#f4f4f4"/><rect x="30.10" y="2.66" width="5.6" height="1.8" fill="#f4f4f4"/><rect x="39.50" y="2.66" width="5.6" height="1.8" fill="#f4f4f4"/><rect x="1.90" y="9.78" width="5.6" height="1.8" fill="#444444"/><rect x="11.30" y="9.78" width="5.6" height="1.8" fill="#444444"/><rect x="20.70" y="9.78" width="5.6" height="1.8" fill="#444444"/><rect x="30.10" y="9.78" width="5.6" height="1.8" fill="#444444"/><rect x="39.50" y="9.78" width="5.6" height="1.8" fill="#444444"/><rect x="1.90" y="16.90" width="5.6" height="1.8" fill="#444444"/><rect x="11.30" y="16.90" width="5.6" height="1.8" fill="#444444"/><rect x="20.70" y="16.90" width="5.6" height="1.8" fill="#444444"/><rect x="30.10" y="16.90" width="5.6" height="1.8" fill="#444444"/><rect x="39.50" y="16.90" width="5.6" height="1.8" fill="#444444"/><rect x="1.90" y="24.02" width="5.6" height="1.8" fill="#444444"/><rect x="11.30" y="24.02" width="5.6" height="1.8" fill="#444444"/><rect x="20.70" y="24.02" width="5.6" height="1.8" fill="#444444"/><rect x="30.10" y="24.02" width="5.6" height="1.8" fill="#444444"/><rect x="39.50" y="24.02" width="5.6" height="1.8" fill="#444444"/><rect x="1.90" y="31.14" width="5.6" height="1.8" fill="#444444"/><rect x="11.30" y="31.14" width="5.6" height="1.8" fill="#444444"/><rect x="20.70" y="31.14" width="5.6" height="1.8" fill="#444444"/><rect x="30.10" y="31.14" width="5.6" height="1.8" fill="#444444"/><rect x="39.50" y="31.14" width="5.6" height="1.8" fill="#444444"/></svg>
<svg style="left:505.80px;top:339.00px" width="47" height="35.6" viewBox="0 0 47 35.6"><rect x="0" y="0.00" width="47" height="7.12" fill="#9bbb59"/><rect x="0" y="7.12" width="47" height="7.12" fill="#d9d9d9"/><rect x="0" y="21.36" width="47" height="7.12" fill="#d9d9d9"/><rect x="0" y="0.00" width="47" height="0.8" fill="#000"/><rect x="0" y="6.62" width="47" height="1.0" fill="#000"/><rect x="0" y="34.30" width="47" height="1.3" fill="#000"/><rect x="1.90" y="2.66" width="5.6" height="1.8" fill="#f4f4f4"/><rect x="11.30" y="2.66" width="5.6" height="1.8" fill="#f4f4f4"/><rect x="20.70" y="2.66" width="5.6" height="1.8" fill="#f4f4f4"/><rect x="30.10" y="2.66" width="5.6" height="1.8" fill="#f4f4f4"/><rect x="39.50" y="2.66" width="5.6" height="1.8" fill="#f4f4f4"/><rect x="1.90" y="9.78" width="5.6" height="1.8" fill="#444444"/><rect x="11.30" y="9.78" width="5.6" height="1.8" fill="#444444"/><rect x="20.70" y="9.78" width="5.6" height="1.8" fill="#444444"/><rect x="30.10" y="9.78" width="5.6" height="1.8" fill="#444444"/><rect x="39.50" y="9.78" width="5.6" height="1.8" fill="#444444"/><rect x="1.90" y="16.90" width="5.6" height="1.8" fill="#444444"/><rect x="11.30" y="16.90" width="5.6" height="1.8" fill="#444444"/><rect x="20.70" y="16.90" width="5.6" height="1.8" fill="#444444"/><rect x="30.10" y="16.90" width="5.6" height="1.8" fill="#444444"/><rect x="39.50" y="16.90" width="5.6" height="1.8" fill="#444444"/><rect x="1.90" y="24.02" width="5.6" height="1.8" fill="#444444"/><rect x="11.30" y="24.02" width="5.6" height="1.8" fill="#444444"/><rect x="20.70" y="24.02" width="5.6" height="1.8" fill="#444444"/><rect x="30.10" y="24.02" width="5.6" height="1.8" fill="#444444"/><rect x="39.50" y="24.02" width="5.6" height="1.8" fill="#444444"/><rect x="1.90" y="31.14" width="5.6" height="1.8" fill="#444444"/><rect x="11.30" y="31.14" width="5.6" height="1.8" fill="#444444"/><rect x="20.70" y="31.14" width="5.6" height="1.8" fill="#444444"/><rect x="30.10" y="31.14" width="5.6" height="1.8" fill="#444444"/><rect x="39.50" y="31.14" width="5.6" height="1.8" fill="#444444"/></svg>
<svg style="left:559.20px;top:339.00px" width="47" height="35.6" viewBox="0 0 47 35.6"><rect x="0" y="0.00" width="47" height="7.12" fill="#8064a2"/><rect x="0" y="7.12" width="47" height="7.12" fill="#d9d9d9"/><rect x="0" y="21.36" width="47" height="7.12" fill="#d9d9d9"/><rect x="0" y="0.00" width="47" height="0.8" fill="#000"/><rect x="0" y="6.62" width="47" height="1.0" fill="#000"/><rect x="0" y="34.30" width="47" height="1.3" fill="#000"/><rect x="1.90" y="2.66" width="5.6" height="1.8" fill="#f4f4f4"/><rect x="11.30" y="2.66" width="5.6" height="1.8" fill="#f4f4f4"/><rect x="20.70" y="2.66" width="5.6" height="1.8" fill="#f4f4f4"/><rect x="30.10" y="2.66" width="5.6" height="1.8" fill="#f4f4f4"/><rect x="39.50" y="2.66" width="5.6" height="1.8" fill="#f4f4f4"/><rect x="1.90" y="9.78" width="5.6" height="1.8" fill="#444444"/><rect x="11.30" y="9.78" width="5.6" height="1.8" fill="#444444"/><rect x="20.70" y="9.78" width="5.6" height="1.8" fill="#444444"/><rect x="30.10" y="9.78" width="5.6" height="1.8" fill="#444444"/><rect x="39.50" y="9.78" width="5.6" height="1.8" fill="#444444"/><rect x="1.90" y="16.90" width="5.6" height="1.8" fill="#444444"/><rect x="11.30" y="16.90" width="5.6" height="1.8" fill="#444444"/><rect x="20.70" y="16.90" width="5.6" height="1.8" fill="#444444"/><rect x="30.10" y="16.90" width="5.6" height="1.8" fill="#444444"/><rect x="39.50" y="16.90" width="5.6" height="1.8" fill="#444444"/><rect x="1.90" y="24.02" width="5.6" height="1.8" fill="#444444"/><rect x="11.30" y="24.02" width="5.6" height="1.8" fill="#444444"/><rect x="20.70" y="24.02" width="5.6" height="1.8" fill="#444444"/><rect x="30.10" y="24.02" width="5.6" height="1.8" fill="#444444"/><rect x="39.50" y="24.02" width="5.6" height="1.8" fill="#444444"/><rect x="1.90" y="31.14" width="5.6" height="1.8" fill="#444444"/><rect x="11.30" y="31.14" width="5.6" height="1.8" fill="#444444"/><rect x="20.70" y="31.14" width="5.6" height="1.8" fill="#444444"/><rect x="30.10" y="31.14" width="5.6" height="1.8" fill="#444444"/><rect x="39.50" y="31.14" width="5.6" height="1.8" fill="#444444"/></svg>
<svg style="left:612.60px;top:339.00px" width="47" height="35.6" viewBox="0 0 47 35.6"><rect x="0" y="0.00" width="47" height="7.12" fill="#4bacc6"/><rect x="0" y="7.12" width="47" height="7.12" fill="#d9d9d9"/><rect x="0" y="21.36" width="47" height="7.12" fill="#d9d9d9"/><rect x="0" y="0.00" width="47" height="0.8" fill="#000"/><rect x="0" y="6.62" width="47" height="1.0" fill="#000"/><rect x="0" y="34.30" width="47" height="1.3" fill="#000"/><rect x="1.90" y="2.66" width="5.6" height="1.8" fill="#f4f4f4"/><rect x="11.30" y="2.66" width="5.6" height="1.8" fill="#f4f4f4"/><rect x="20.70" y="2.66" width="5.6" height="1.8" fill="#f4f4f4"/><rect x="30.10" y="2.66" width="5.6" height="1.8" fill="#f4f4f4"/><rect x="39.50" y="2.66" width="5.6" height="1.8" fill="#f4f4f4"/><rect x="1.90" y="9.78" width="5.6" height="1.8" fill="#444444"/><rect x="11.30" y="9.78" width="5.6" height="1.8" fill="#444444"/><rect x="20.70" y="9.78" width="5.6" height="1.8" fill="#444444"/><rect x="30.10" y="9.78" width="5.6" height="1.8" fill="#444444"/><rect x="39.50" y="9.78" width="5.6" height="1.8" fill="#444444"/><rect x="1.90" y="16.90" width="5.6" height="1.8" fill="#444444"/><rect x="11.30" y="16.90" width="5.6" height="1.8" fill="#444444"/><rect x="20.70" y="16.90" width="5.6" height="1.8" fill="#444444"/><rect x="30.10" y="16.90" width="5.6" height="1.8" fill="#444444"/><rect x="39.50" y="16.90" width="5.6" height="1.8" fill="#444444"/><rect x="1.90" y="24.02" width="5.6" height="1.8" fill="#444444"/><rect x="11.30" y="24.02" width="5.6" height="1.8" fill="#444444"/><rect x="20.70" y="24.02" width="5.6" height="1.8" fill="#444444"/><rect x="30.10" y="24.02" width="5.6" height="1.8" fill="#444444"/><rect x="39.50" y="24.02" width="5.6" height="1.8" fill="#444444"/><rect x="1.90" y="31.14" width="5.6" height="1.8" fill="#444444"/><rect x="11.30" y="31.14" width="5.6" height="1.8" fill="#444444"/><rect x="20.70" y="31.14" width="5.6" height="1.8" fill="#444444"/><rect x="30.10" y="31.14" width="5.6" height="1.8" fill="#444444"/><rect x="39.50" y="31.14" width="5.6" height="1.8" fill="#444444"/></svg>
<svg style="left:666.00px;top:339.00px" width="47" height="35.6" viewBox="0 0 47 35.6"><rect x="0" y="0.00" width="47" height="7.12" fill="#f79646"/><rect x="0" y="7.12" width="47" height="7.12" fill="#d9d9d9"/><rect x="0" y="21.36" width="47" height="7.12" fill="#d9d9d9"/><rect x="0" y="0.00" width="47" height="0.8" fill="#000"/><rect x="0" y="6.62" width="47" height="1.0" fill="#000"/><rect x="0" y="34.30" width="47" height="1.3" fill="#000"/><rect x="1.90" y="2.66" width="5.6" height="1.8" fill="#f4f4f4"/><rect x="11.30" y="2.66" width="5.6" height="1.8" fill="#f4f4f4"/><rect x="20.70" y="2.66" width="5.6" height="1.8" fill="#f4f4f4"/><rect x="30.10" y="2.66" width="5.6" height="1.8" fill="#f4f4f4"/><rect x="39.50" y="2.66" width="5.6" height="1.8" fill="#f4f4f4"/><rect x="1.90" y="9.78" width="5.6" height="1.8" fill="#444444"/><rect x="11.30" y="9.78" width="5.6" height="1.8" fill="#444444"/><rect x="20.70" y="9.78" width="5.6" height="1.8" fill="#444444"/><rect x="30.10" y="9.78" width="5.6" height="1.8" fill="#444444"/><rect x="39.50" y="9.78" width="5.6" height="1.8" fill="#444444"/><rect x="1.90" y="16.90" width="5.6" height="1.8" fill="#444444"/><rect x="11.30" y="16.90" width="5.6" height="1.8" fill="#444444"/><rect x="20.70" y="16.90" width="5.6" height="1.8" fill="#444444"/><rect x="30.10" y="16.90" width="5.6" height="1.8" fill="#444444"/><rect x="39.50" y="16.90" width="5.6" height="1.8" fill="#444444"/><rect x="1.90" y="24.02" width="5.6" height="1.8" fill="#444444"/><rect x="11.30" y="24.02" width="5.6" height="1.8" fill="#444444"/><rect x="20.70" y="24.02" width="5.6" height="1.8" fill="#444444"/><rect x="30.10" y="24.02" width="5.6" height="1.8" fill="#444444"/><rect x="39.50" y="24.02" width="5.6" height="1.8" fill="#444444"/><rect x="1.90" y="31.14" width="5.6" height="1.8" fill="#444444"/><rect x="11.30" y="31.14" width="5.6" height="1.8" fill="#444444"/><rect x="20.70" y="31.14" width="5.6" height="1.8" fill="#444444"/><rect x="30.10" y="31.14" width="5.6" height="1.8" fill="#444444"/><rect x="39.50" y="31.14" width="5.6" height="1.8" fill="#444444"/></svg>
<svg style="left:345.60px;top:381.00px" width="47" height="35.6" viewBox="0 0 47 35.6"><rect x="0" y="0.00" width="47" height="7.12" fill="#ececec"/><rect x="0" y="7.12" width="47" height="7.12" fill="#a6a6a6"/><rect x="0" y="14.24" width="47" height="7.12" fill="#ececec"/><rect x="0" y="21.36" width="47" height="7.12" fill="#a6a6a6"/><rect x="0" y="28.48" width="47" height="7.12" fill="#ececec"/><rect x="0" y="6.62" width="47" height="1.0" fill="#000"/><rect x="0" y="13.74" width="47" height="1.0" fill="#000"/><rect x="0" y="20.86" width="47" height="1.0" fill="#000"/><rect x="0" y="27.98" width="47" height="1.0" fill="#000"/><rect x="8.90" y="0.00" width="1.0" height="35.60" fill="#000"/><rect x="18.30" y="0.00" width="1.0" height="35.60" fill="#000"/><rect x="27.70" y="0.00" width="1.0" height="35.60" fill="#000"/><rect x="37.10" y="0.00" width="1.0" height="35.60" fill="#000"/><rect x="0.7" y="0.7" width="45.6" height="34.20" fill="none" stroke="#000" stroke-width="1.4"/><rect x="1.90" y="2.66" width="5.6" height="1.8" fill="#444444"/><rect x="11.30" y="2.66" width="5.6" height="1.8" fill="#444444"/><rect x="20.70" y="2.66" width="5.6" height="1.8" fill="#444444"/><rect x="30.10" y="2.66" width="5.6" height="1.8" fill="#444444"/><rect x="39.50" y="2.66" width="5.6" height="1.8" fill="#444444"/><rect x="1.90" y="9.78" width="5.6" height="1.8" fill="#444444"/><rect x="11.30" y="9.78" width="5.6" height="1.8" fill="#444444"/><rect x="20.70" y="9.78" width="5.6" height="1.8" fill="#444444"/><rect x="30.10" y="9.78" width="5.6" height="1.8" fill="#444444"/><rect x="39.50" y="9.78" width="5.6" height="1.8" fill="#444444"/><rect x="1.90" y="16.90" width="5.6" height="1.8" fill="#444444"/><rect x="11.30" y="16.90" width="5.6" height="1.8" fill="#444444"/><rect x="20.70" y="16.90" width="5.6" height="1.8" fill="#444444"/><rect x="30.10" y="16.90" width="5.6" height="1.8" fill="#444444"/><rect x="39.50" y="16.90" width="5.6" height="1.8" fill="#444444"/><rect x="1.90" y="24.02" width="5.6" height="1.8" fill="#444444"/><rect x="11.30" y="24.02" width="5.6" height="1.8" fill="#444444"/><rect x="20.70" y="24.02" width="5.6" height="1.8" fill="#444444"/><rect x="30.10" y="24.02" width="5.6" height="1.8" fill="#444444"/><rect x="39.50" y="24.02" width="5.6" height="1.8" fill="#444444"/><rect x="1.90" y="31.14" width="5.6" height="1.8" fill="#444444"/><rect x="11.30" y="31.14" width="5.6" height="1.8" fill="#444444"/><rect x="20.70" y="31.14" width="5.6" height="1.8" fill="#444444"/><rect x="30.10" y="31.14" width="5.6" height="1.8" fill="#444444"/><rect x="39.50" y="31.14" width="5.6" height="1.8" fill="#444444"/></svg>
<svg style="left:399.00px;top:381.00px" width="47" height="35.6" viewBox="0 0 47 35.6"><rect x="0" y="0.00" width="47" height="7.12" fill="#dce6f1"/><rect x="0" y="7.12" width="47" height="7.12" fill="#b8cce4"/><rect x="0" y="14.24" width="47" height="7.12" fill="#dce6f1"/><rect x="0" y="21.36" width="47" height="7.12" fill="#b8cce4"/><rect x="0" y="28.48" width="47" height="7.12" fill="#dce6f1"/><g opacity="0.55"><rect x="0" y="6.62" width="47" height="1.0" fill="#4f81bd"/><rect x="0" y="13.74" width="47" height="1.0" fill="#4f81bd"/><rect x="0" y="20.86" width="47" height="1.0" fill="#4f81bd"/><rect x="0" y="27.98" width="47" height="1.0" fill="#4f81bd"/><rect x="8.90" y="0.00" width="1.0" height="35.60" fill="#4f81bd"/><rect x="18.30" y="0.00" width="1.0" height="35.60" fill="#4f81bd"/><rect x="27.70" y="0.00" width="1.0" height="35.60" fill="#4f81bd"/><rect x="37.10" y="0.00" width="1.0" height="35.60" fill="#4f81bd"/><rect x="0.5" y="0.5" width="46.0" height="34.60" fill="none" stroke="#4f81bd" stroke-width="1.0"/></g><rect x="1.90" y="2.66" width="5.6" height="1.8" fill="#444444"/><rect x="11.30" y="2.66" width="5.6" height="1.8" fill="#444444"/><rect x="20.70" y="2.66" width="5.6" height="1.8" fill="#444444"/><rect x="30.10" y="2.66" width="5.6" height="1.8" fill="#444444"/><rect x="39.50" y="2.66" width="5.6" height="1.8" fill="#444444"/><rect x="1.90" y="9.78" width="5.6" height="1.8" fill="#444444"/><rect x="11.30" y="9.78" width="5.6" height="1.8" fill="#444444"/><rect x="20.70" y="9.78" width="5.6" height="1.8" fill="#444444"/><rect x="30.10" y="9.78" width="5.6" height="1.8" fill="#444444"/><rect x="39.50" y="9.78" width="5.6" height="1.8" fill="#444444"/><rect x="1.90" y="16.90" width="5.6" height="1.8" fill="#444444"/><rect x="11.30" y="16.90" width="5.6" height="1.8" fill="#444444"/><rect x="20.70" y="16.90" width="5.6" height="1.8" fill="#444444"/><rect x="30.10" y="16.90" width="5.6" height="1.8" fill="#444444"/><rect x="39.50" y="16.90" width="5.6" height="1.8" fill="#444444"/><rect x="1.90" y="24.02" width="5.6" height="1.8" fill="#444444"/><rect x="11.30" y="24.02" width="5.6" height="1.8" fill="#444444"/><rect x="20.70" y="24.02" width="5.6" height="1.8" fill="#444444"/><rect x="30.10" y="24.02" width="5.6" height="1.8" fill="#444444"/><rect x="39.50" y="24.02" width="5.6" height="1.8" fill="#444444"/><rect x="1.90" y="31.14" width="5.6" height="1.8" fill="#444444"/><rect x="11.30" y="31.14" width="5.6" height="1.8" fill="#444444"/><rect x="20.70" y="31.14" width="5.6" height="1.8" fill="#444444"/><rect x="30.10" y="31.14" width="5.6" height="1.8" fill="#444444"/><rect x="39.50" y="31.14" width="5.6" height="1.8" fill="#444444"/></svg>
<svg style="left:452.40px;top:381.00px" width="47" height="35.6" viewBox="0 0 47 35.6"><rect x="0" y="0.00" width="47" height="7.12" fill="#f2dcdb"/><rect x="0" y="7.12" width="47" height="7.12" fill="#e6b8b7"/><rect x="0" y="14.24" width="47" height="7.12" fill="#f2dcdb"/><rect x="0" y="21.36" width="47" height="7.12" fill="#e6b8b7"/><rect x="0" y="28.48" width="47" height="7.12" fill="#f2dcdb"/><g opacity="0.55"><rect x="0" y="6.62" width="47" height="1.0" fill="#c0504d"/><rect x="0" y="13.74" width="47" height="1.0" fill="#c0504d"/><rect x="0" y="20.86" width="47" height="1.0" fill="#c0504d"/><rect x="0" y="27.98" width="47" height="1.0" fill="#c0504d"/><rect x="8.90" y="0.00" width="1.0" height="35.60" fill="#c0504d"/><rect x="18.30" y="0.00" width="1.0" height="35.60" fill="#c0504d"/><rect x="27.70" y="0.00" width="1.0" height="35.60" fill="#c0504d"/><rect x="37.10" y="0.00" width="1.0" height="35.60" fill="#c0504d"/><rect x="0.5" y="0.5" width="46.0" height="34.60" fill="none" stroke="#c0504d" stroke-width="1.0"/></g><rect x="1.90" y="2.66" width="5.6" height="1.8" fill="#444444"/><rect x="11.30" y="2.66" width="5.6" height="1.8" fill="#444444"/><rect x="20.70" y="2.66" width="5.6" height="1.8" fill="#444444"/><rect x="30.10" y="2.66" width="5.6" height="1.8" fill="#444444"/><rect x="39.50" y="2.66" width="5.6" height="1.8" fill="#444444"/><rect x="1.90" y="9.78" width="5.6" height="1.8" fill="#444444"/><rect x="11.30" y="9.78" width="5.6" height="1.8" fill="#444444"/><rect x="20.70" y="9.78" width="5.6" height="1.8" fill="#444444"/><rect x="30.10" y="9.78" width="5.6" height="1.8" fill="#444444"/><rect x="39.50" y="9.78" width="5.6" height="1.8" fill="#444444"/><rect x="1.90" y="16.90" width="5.6" height="1.8" fill="#444444"/><rect x="11.30" y="16.90" width="5.6" height="1.8" fill="#444444"/><rect x="20.70" y="16.90" width="5.6" height="1.8" fill="#444444"/><rect x="30.10" y="16.90" width="5.6" height="1.8" fill="#444444"/><rect x="39.50" y="16.90" width="5.6" height="1.8" fill="#444444"/><rect x="1.90" y="24.02" width="5.6" height="1.8" fill="#444444"/><rect x="11.30" y="24.02" width="5.6" height="1.8" fill="#444444"/><rect x="20.70" y="24.02" width="5.6" height="1.8" fill="#444444"/><rect x="30.10" y="24.02" width="5.6" height="1.8" fill="#444444"/><rect x="39.50" y="24.02" width="5.6" height="1.8" fill="#444444"/><rect x="1.90" y="31.14" width="5.6" height="1.8" fill="#444444"/><rect x="11.30" y="31.14" width="5.6" height="1.8" fill="#444444"/><rect x="20.70" y="31.14" width="5.6" height="1.8" fill="#444444"/><rect x="30.10" y="31.14" width="5.6" height="1.8" fill="#444444"/><rect x="39.50" y="31.14" width="5.6" height="1.8" fill="#444444"/></svg>
<svg style="left:505.80px;top:381.00px" width="47" height="35.6" viewBox="0 0 47 35.6"><rect x="0" y="0.00" width="47" height="7.12" fill="#ebf1de"/><rect x="0" y="7.12" width="47" height="7.12" fill="#d8e4bc"/><rect x="0" y="14.24" width="47" height="7.12" fill="#ebf1de"/><rect x="0" y="21.36" width="47" height="7.12" fill="#d8e4bc"/><rect x="0" y="28.48" width="47" height="7.12" fill="#ebf1de"/><g opacity="0.55"><rect x="0" y="6.62" width="47" height="1.0" fill="#9bbb59"/><rect x="0" y="13.74" width="47" height="1.0" fill="#9bbb59"/><rect x="0" y="20.86" width="47" height="1.0" fill="#9bbb59"/><rect x="0" y="27.98" width="47" height="1.0" fill="#9bbb59"/><rect x="8.90" y="0.00" width="1.0" height="35.60" fill="#9bbb59"/><rect x="18.30" y="0.00" width="1.0" height="35.60" fill="#9bbb59"/><rect x="27.70" y="0.00" width="1.0" height="35.60" fill="#9bbb59"/><rect x="37.10" y="0.00" width="1.0" height="35.60" fill="#9bbb59"/><rect x="0.5" y="0.5" width="46.0" height="34.60" fill="none" stroke="#9bbb59" stroke-width="1.0"/></g><rect x="1.90" y="2.66" width="5.6" height="1.8" fill="#444444"/><rect x="11.30" y="2.66" width="5.6" height="1.8" fill="#444444"/><rect x="20.70" y="2.66" width="5.6" height="1.8" fill="#444444"/><rect x="30.10" y="2.66" width="5.6" height="1.8" fill="#444444"/><rect x="39.50" y="2.66" width="5.6" height="1.8" fill="#444444"/><rect x="1.90" y="9.78" width="5.6" height="1.8" fill="#444444"/><rect x="11.30" y="9.78" width="5.6" height="1.8" fill="#444444"/><rect x="20.70" y="9.78" width="5.6" height="1.8" fill="#444444"/><rect x="30.10" y="9.78" width="5.6" height="1.8" fill="#444444"/><rect x="39.50" y="9.78" width="5.6" height="1.8" fill="#444444"/><rect x="1.90" y="16.90" width="5.6" height="1.8" fill="#444444"/><rect x="11.30" y="16.90" width="5.6" height="1.8" fill="#444444"/><rect x="20.70" y="16.90" width="5.6" height="1.8" fill="#444444"/><rect x="30.10" y="16.90" width="5.6" height="1.8" fill="#444444"/><rect x="39.50" y="16.90" width="5.6" height="1.8" fill="#444444"/><rect x="1.90" y="24.02" width="5.6" height="1.8" fill="#444444"/><rect x="11.30" y="24.02" width="5.6" height="1.8" fill="#444444"/><rect x="20.70" y="24.02" width="5.6" height="1.8" fill="#444444"/><rect x="30.10" y="24.02" width="5.6" height="1.8" fill="#444444"/><rect x="39.50" y="24.02" width="5.6" height="1.8" fill="#444444"/><rect x="1.90" y="31.14" width="5.6" height="1.8" fill="#444444"/><rect x="11.30" y="31.14" width="5.6" height="1.8" fill="#444444"/><rect x="20.70" y="31.14" width="5.6" height="1.8" fill="#444444"/><rect x="30.10" y="31.14" width="5.6" height="1.8" fill="#444444"/><rect x="39.50" y="31.14" width="5.6" height="1.8" fill="#444444"/></svg>
<svg style="left:559.20px;top:381.00px" width="47" height="35.6" viewBox="0 0 47 35.6"><rect x="0" y="0.00" width="47" height="7.12" fill="#e4dfec"/><rect x="0" y="7.12" width="47" height="7.12" fill="#ccc0da"/><rect x="0" y="14.24" width="47" height="7.12" fill="#e4dfec"/><rect x="0" y="21.36" width="47" height="7.12" fill="#ccc0da"/><rect x="0" y="28.48" width="47" height="7.12" fill="#e4dfec"/><g opacity="0.55"><rect x="0" y="6.62" width="47" height="1.0" fill="#8064a2"/><rect x="0" y="13.74" width="47" height="1.0" fill="#8064a2"/><rect x="0" y="20.86" width="47" height="1.0" fill="#8064a2"/><rect x="0" y="27.98" width="47" height="1.0" fill="#8064a2"/><rect x="8.90" y="0.00" width="1.0" height="35.60" fill="#8064a2"/><rect x="18.30" y="0.00" width="1.0" height="35.60" fill="#8064a2"/><rect x="27.70" y="0.00" width="1.0" height="35.60" fill="#8064a2"/><rect x="37.10" y="0.00" width="1.0" height="35.60" fill="#8064a2"/><rect x="0.5" y="0.5" width="46.0" height="34.60" fill="none" stroke="#8064a2" stroke-width="1.0"/></g><rect x="1.90" y="2.66" width="5.6" height="1.8" fill="#444444"/><rect x="11.30" y="2.66" width="5.6" height="1.8" fill="#444444"/><rect x="20.70" y="2.66" width="5.6" height="1.8" fill="#444444"/><rect x="30.10" y="2.66" width="5.6" height="1.8" fill="#444444"/><rect x="39.50" y="2.66" width="5.6" height="1.8" fill="#444444"/><rect x="1.90" y="9.78" width="5.6" height="1.8" fill="#444444"/><rect x="11.30" y="9.78" width="5.6" height="1.8" fill="#444444"/><rect x="20.70" y="9.78" width="5.6" height="1.8" fill="#444444"/><rect x="30.10" y="9.78" width="5.6" height="1.8" fill="#444444"/><rect x="39.50" y="9.78" width="5.6" height="1.8" fill="#444444"/><rect x="1.90" y="16.90" width="5.6" height="1.8" fill="#444444"/><rect x="11.30" y="16.90" width="5.6" height="1.8" fill="#444444"/><rect x="20.70" y="16.90" width="5.6" height="1.8" fill="#444444"/><rect x="30.10" y="16.90" width="5.6" height="1.8" fill="#444444"/><rect x="39.50" y="16.90" width="5.6" height="1.8" fill="#444444"/><rect x="1.90" y="24.02" width="5.6" height="1.8" fill="#444444"/><rect x="11.30" y="24.02" width="5.6" height="1.8" fill="#444444"/><rect x="20.70" y="24.02" width="5.6" height="1.8" fill="#444444"/><rect x="30.10" y="24.02" width="5.6" height="1.8" fill="#444444"/><rect x="39.50" y="24.02" width="5.6" height="1.8" fill="#444444"/><rect x="1.90" y="31.14" width="5.6" height="1.8" fill="#444444"/><rect x="11.30" y="31.14" width="5.6" height="1.8" fill="#444444"/><rect x="20.70" y="31.14" width="5.6" height="1.8" fill="#444444"/><rect x="30.10" y="31.14" width="5.6" height="1.8" fill="#444444"/><rect x="39.50" y="31.14" width="5.6" height="1.8" fill="#444444"/></svg>
<svg style="left:612.60px;top:381.00px" width="47" height="35.6" viewBox="0 0 47 35.6"><rect x="0" y="0.00" width="47" height="7.12" fill="#daeef3"/><rect x="0" y="7.12" width="47" height="7.12" fill="#b7dee8"/><rect x="0" y="14.24" width="47" height="7.12" fill="#daeef3"/><rect x="0" y="21.36" width="47" height="7.12" fill="#b7dee8"/><rect x="0" y="28.48" width="47" height="7.12" fill="#daeef3"/><g opacity="0.55"><rect x="0" y="6.62" width="47" height="1.0" fill="#4bacc6"/><rect x="0" y="13.74" width="47" height="1.0" fill="#4bacc6"/><rect x="0" y="20.86" width="47" height="1.0" fill="#4bacc6"/><rect x="0" y="27.98" width="47" height="1.0" fill="#4bacc6"/><rect x="8.90" y="0.00" width="1.0" height="35.60" fill="#4bacc6"/><rect x="18.30" y="0.00" width="1.0" height="35.60" fill="#4bacc6"/><rect x="27.70" y="0.00" width="1.0" height="35.60" fill="#4bacc6"/><rect x="37.10" y="0.00" width="1.0" height="35.60" fill="#4bacc6"/><rect x="0.5" y="0.5" width="46.0" height="34.60" fill="none" stroke="#4bacc6" stroke-width="1.0"/></g><rect x="1.90" y="2.66" width="5.6" height="1.8" fill="#444444"/><rect x="11.30" y="2.66" width="5.6" height="1.8" fill="#444444"/><rect x="20.70" y="2.66" width="5.6" height="1.8" fill="#444444"/><rect x="30.10" y="2.66" width="5.6" height="1.8" fill="#444444"/><rect x="39.50" y="2.66" width="5.6" height="1.8" fill="#444444"/><rect x="1.90" y="9.78" width="5.6" height="1.8" fill="#444444"/><rect x="11.30" y="9.78" width="5.6" height="1.8" fill="#444444"/><rect x="20.70" y="9.78" width="5.6" height="1.8" fill="#444444"/><rect x="30.10" y="9.78" width="5.6" height="1.8" fill="#444444"/><rect x="39.50" y="9.78" width="5.6" height="1.8" fill="#444444"/><rect x="1.90" y="16.90" width="5.6" height="1.8" fill="#444444"/><rect x="11.30" y="16.90" width="5.6" height="1.8" fill="#444444"/><rect x="20.70" y="16.90" width="5.6" height="1.8" fill="#444444"/><rect x="30.10" y="16.90" width="5.6" height="1.8" fill="#444444"/><rect x="39.50" y="16.90" width="5.6" height="1.8" fill="#444444"/><rect x="1.90" y="24.02" width="5.6" height="1.8" fill="#444444"/><rect x="11.30" y="24.02" width="5.6" height="1.8" fill="#444444"/><rect x="20.70" y="24.02" width="5.6" height="1.8" fill="#444444"/><rect x="30.10" y="24.02" width="5.6" height="1.8" fill="#444444"/><rect x="39.50" y="24.02" width="5.6" height="1.8" fill="#444444"/><rect x="1.90" y="31.14" width="5.6" height="1.8" fill="#444444"/><rect x="11.30" y="31.14" width="5.6" height="1.8" fill="#444444"/><rect x="20.70" y="31.14" width="5.6" height="1.8" fill="#444444"/><rect x="30.10" y="31.14" width="5.6" height="1.8" fill="#444444"/><rect x="39.50" y="31.14" width="5.6" height="1.8" fill="#444444"/></svg>
<svg style="left:666.00px;top:381.00px" width="47" height="35.6" viewBox="0 0 47 35.6"><rect x="0" y="0.00" width="47" height="7.12" fill="#fde9d9"/><rect x="0" y="7.12" width="47" height="7.12" fill="#fcd5b4"/><rect x="0" y="14.24" width="47" height="7.12" fill="#fde9d9"/><rect x="0" y="21.36" width="47" height="7.12" fill="#fcd5b4"/><rect x="0" y="28.48" width="47" height="7.12" fill="#fde9d9"/><g opacity="0.55"><rect x="0" y="6.62" width="47" height="1.0" fill="#f79646"/><rect x="0" y="13.74" width="47" height="1.0" fill="#f79646"/><rect x="0" y="20.86" width="47" height="1.0" fill="#f79646"/><rect x="0" y="27.98" width="47" height="1.0" fill="#f79646"/><rect x="8.90" y="0.00" width="1.0" height="35.60" fill="#f79646"/><rect x="18.30" y="0.00" width="1.0" height="35.60" fill="#f79646"/><rect x="27.70" y="0.00" width="1.0" height="35.60" fill="#f79646"/><rect x="37.10" y="0.00" width="1.0" height="35.60" fill="#f79646"/><rect x="0.5" y="0.5" width="46.0" height="34.60" fill="none" stroke="#f79646" stroke-width="1.0"/></g><rect x="1.90" y="2.66" width="5.6" height="1.8" fill="#444444"/><rect x="11.30" y="2.66" width="5.6" height="1.8" fill="#444444"/><rect x="20.70" y="2.66" width="5.6" height="1.8" fill="#444444"/><rect x="30.10" y="2.66" width="5.6" height="1.8" fill="#444444"/><rect x="39.50" y="2.66" width="5.6" height="1.8" fill="#444444"/><rect x="1.90" y="9.78" width="5.6" height="1.8" fill="#444444"/><rect x="11.30" y="9.78" width="5.6" height="1.8" fill="#444444"/><rect x="20.70" y="9.78" width="5.6" height="1.8" fill="#444444"/><rect x="30.10" y="9.78" width="5.6" height="1.8" fill="#444444"/><rect x="39.50" y="9.78" width="5.6" height="1.8" fill="#444444"/><rect x="1.90" y="16.90" width="5.6" height="1.8" fill="#444444"/><rect x="11.30" y="16.90" width="5.6" height="1.8" fill="#444444"/><rect x="20.70" y="16.90" width="5.6" height="1.8" fill="#444444"/><rect x="30.10" y="16.90" width="5.6" height="1.8" fill="#444444"/><rect x="39.50" y="16.90" width="5.6" height="1.8" fill="#444444"/><rect x="1.90" y="24.02" width="5.6" height="1.8" fill="#444444"/><rect x="11.30" y="24.02" width="5.6" height="1.8" fill="#444444"/><rect x="20.70" y="24.02" width="5.6" height="1.8" fill="#444444"/><rect x="30.10" y="24.02" width="5.6" height="1.8" fill="#444444"/><rect x="39.50" y="24.02" width="5.6" height="1.8" fill="#444444"/><rect x="1.90" y="31.14" width="5.6" height="1.8" fill="#444444"/><rect x="11.30" y="31.14" width="5.6" height="1.8" fill="#444444"/><rect x="20.70" y="31.14" width="5.6" height="1.8" fill="#444444"/><rect x="30.10" y="31.14" width="5.6" height="1.8" fill="#444444"/><rect x="39.50" y="31.14" width="5.6" height="1.8" fill="#444444"/></svg>
<svg style="left:345.60px;top:453.00px" width="47" height="35.6" viewBox="0 0 47 35.6"><rect x="0" y="0.00" width="47" height="7.12" fill="#000"/><rect x="0" y="7.12" width="47" height="7.12" fill="#404040"/><rect x="0" y="14.24" width="47" height="7.12" fill="#737373"/><rect x="0" y="21.36" width="47" height="7.12" fill="#404040"/><rect x="0" y="28.48" width="47" height="7.12" fill="#737373"/><rect x="0" y="6.72" width="47" height="0.8" fill="#ffffff"/><rect x="1.90" y="2.66" width="5.6" height="1.8" fill="#c4c4c4"/><rect x="11.30" y="2.66" width="5.6" height="1.8" fill="#c4c4c4"/><rect x="20.70" y="2.66" width="5.6" height="1.8" fill="#c4c4c4"/><rect x="30.10" y="2.66" width="5.6" height="1.8" fill="#c4c4c4"/><rect x="39.50" y="2.66" width="5.6" height="1.8" fill="#c4c4c4"/><rect x="1.90" y="9.78" width="5.6" height="1.8" fill="#f2f2f2"/><rect x="11.30" y="9.78" width="5.6" height="1.8" fill="#f2f2f2"/><rect x="20.70" y="9.78" width="5.6" height="1.8" fill="#f2f2f2"/><rect x="30.10" y="9.78" width="5.6" height="1.8" fill="#f2f2f2"/><rect x="39.50" y="9.78" width="5.6" height="1.8" fill="#f2f2f2"/><rect x="1.90" y="16.90" width="5.6" height="1.8" fill="#f2f2f2"/><rect x="11.30" y="16.90" width="5.6" height="1.8" fill="#f2f2f2"/><rect x="20.70" y="16.90" width="5.6" height="1.8" fill="#f2f2f2"/><rect x="30.10" y="16.90" width="5.6" height="1.8" fill="#f2f2f2"/><rect x="39.50" y="16.90" width="5.6" height="1.8" fill="#f2f2f2"/><rect x="1.90" y="24.02" width="5.6" height="1.8" fill="#f2f2f2"/><rect x="11.30" y="24.02" width="5.6" height="1.8" fill="#f2f2f2"/><rect x="20.70" y="24.02" width="5.6" height="1.8" fill="#f2f2f2"/><rect x="30.10" y="24.02" width="5.6" height="1.8" fill="#f2f2f2"/><rect x="39.50" y="24.02" width="5.6" height="1.8" fill="#f2f2f2"/><rect x="1.90" y="31.14" width="5.6" height="1.8" fill="#f2f2f2"/><rect x="11.30" y="31.14" width="5.6" height="1.8" fill="#f2f2f2"/><rect x="20.70" y="31.14" width="5.6" height="1.8" fill="#f2f2f2"/><rect x="30.10" y="31.14" width="5.6" height="1.8" fill="#f2f2f2"/><rect x="39.50" y="31.14" width="5.6" height="1.8" fill="#f2f2f2"/></svg>
<svg style="left:399.00px;top:453.00px" width="47" height="35.6" viewBox="0 0 47 35.6"><rect x="0" y="0.00" width="47" height="7.12" fill="#000"/><rect x="0" y="7.12" width="47" height="7.12" fill="#2e5b96"/><rect x="0" y="14.24" width="47" height="7.12" fill="#4f81bd"/><rect x="0" y="21.36" width="47" height="7.12" fill="#2e5b96"/><rect x="0" y="28.48" width="47" height="7.12" fill="#4f81bd"/><rect x="0" y="6.72" width="47" height="0.8" fill="#ffffff"/><rect x="1.90" y="2.66" width="5.6" height="1.8" fill="#f4f4f4"/><rect x="11.30" y="2.66" width="5.6" height="1.8" fill="#f4f4f4"/><rect x="20.70" y="2.66" width="5.6" height="1.8" fill="#f4f4f4"/><rect x="30.10" y="2.66" width="5.6" height="1.8" fill="#f4f4f4"/><rect x="39.50" y="2.66" width="5.6" height="1.8" fill="#f4f4f4"/><rect x="1.90" y="9.78" width="5.6" height="1.8" fill="#f2f2f2"/><rect x="11.30" y="9.78" width="5.6" height="1.8" fill="#f2f2f2"/><rect x="20.70" y="9.78" width="5.6" height="1.8" fill="#f2f2f2"/><rect x="30.10" y="9.78" width="5.6" height="1.8" fill="#f2f2f2"/><rect x="39.50" y="9.78" width="5.6" height="1.8" fill="#f2f2f2"/><rect x="1.90" y="16.90" width="5.6" height="1.8" fill="#f2f2f2"/><rect x="11.30" y="16.90" width="5.6" height="1.8" fill="#f2f2f2"/><rect x="20.70" y="16.90" width="5.6" height="1.8" fill="#f2f2f2"/><rect x="30.10" y="16.90" width="5.6" height="1.8" fill="#f2f2f2"/><rect x="39.50" y="16.90" width="5.6" height="1.8" fill="#f2f2f2"/><rect x="1.90" y="24.02" width="5.6" height="1.8" fill="#f2f2f2"/><rect x="11.30" y="24.02" width="5.6" height="1.8" fill="#f2f2f2"/><rect x="20.70" y="24.02" width="5.6" height="1.8" fill="#f2f2f2"/><rect x="30.10" y="24.02" width="5.6" height="1.8" fill="#f2f2f2"/><rect x="39.50" y="24.02" width="5.6" height="1.8" fill="#f2f2f2"/><rect x="1.90" y="31.14" width="5.6" height="1.8" fill="#f2f2f2"/><rect x="11.30" y="31.14" width="5.6" height="1.8" fill="#f2f2f2"/><rect x="20.70" y="31.14" width="5.6" height="1.8" fill="#f2f2f2"/><rect x="30.10" y="31.14" width="5.6" height="1.8" fill="#f2f2f2"/><rect x="39.50" y="31.14" width="5.6" height="1.8" fill="#f2f2f2"/></svg>
<svg style="left:452.40px;top:453.00px" width="47" height="35.6" viewBox="0 0 47 35.6"><rect x="0" y="0.00" width="47" height="7.12" fill="#000"/><rect x="0" y="7.12" width="47" height="7.12" fill="#943734"/><rect x="0" y="14.24" width="47" height="7.12" fill="#c0504d"/><rect x="0" y="21.36" width="47" height="7.12" fill="#943734"/><rect x="0" y="28.48" width="47" height="7.12" fill="#c0504d"/><rect x="0" y="6.72" width="47" height="0.8" fill="#ffffff"/><rect x="1.90" y="2.66" width="5.6" height="1.8" fill="#f4f4f4"/><rect x="11.30" y="2.66" width="5.6" height="1.8" fill="#f4f4f4"/><rect x="20.70" y="2.66" width="5.6" height="1.8" fill="#f4f4f4"/><rect x="30.10" y="2.66" width="5.6" height="1.8" fill="#f4f4f4"/><rect x="39.50" y="2.66" width="5.6" height="1.8" fill="#f4f4f4"/><rect x="1.90" y="9.78" width="5.6" height="1.8" fill="#f2f2f2"/><rect x="11.30" y="9.78" width="5.6" height="1.8" fill="#f2f2f2"/><rect x="20.70" y="9.78" width="5.6" height="1.8" fill="#f2f2f2"/><rect x="30.10" y="9.78" width="5.6" height="1.8" fill="#f2f2f2"/><rect x="39.50" y="9.78" width="5.6" height="1.8" fill="#f2f2f2"/><rect x="1.90" y="16.90" width="5.6" height="1.8" fill="#f2f2f2"/><rect x="11.30" y="16.90" width="5.6" height="1.8" fill="#f2f2f2"/><rect x="20.70" y="16.90" width="5.6" height="1.8" fill="#f2f2f2"/><rect x="30.10" y="16.90" width="5.6" height="1.8" fill="#f2f2f2"/><rect x="39.50" y="16.90" width="5.6" height="1.8" fill="#f2f2f2"/><rect x="1.90" y="24.02" width="5.6" height="1.8" fill="#f2f2f2"/><rect x="11.30" y="24.02" width="5.6" height="1.8" fill="#f2f2f2"/><rect x="20.70" y="24.02" width="5.6" height="1.8" fill="#f2f2f2"/><rect x="30.10" y="24.02" width="5.6" height="1.8" fill="#f2f2f2"/><rect x="39.50" y="24.02" width="5.6" height="1.8" fill="#f2f2f2"/><rect x="1.90" y="31.14" width="5.6" height="1.8" fill="#f2f2f2"/><rect x="11.30" y="31.14" width="5.6" height="1.8" fill="#f2f2f2"/><rect x="20.70" y="31.14" width="5.6" height="1.8" fill="#f2f2f2"/><rect x="30.10" y="31.14" width="5.6" height="1.8" fill="#f2f2f2"/><rect x="39.50" y="31.14" width="5.6" height="1.8" fill="#f2f2f2"/></svg>
<svg style="left:505.80px;top:453.00px" width="47" height="35.6" viewBox="0 0 47 35.6"><rect x="0" y="0.00" width="47" height="7.12" fill="#000"/><rect x="0" y="7.12" width="47" height="7.12" fill="#6f8c36"/><rect x="0" y="14.24" width="47" height="7.12" fill="#9bbb59"/><rect x="0" y="21.36" width="47" height="7.12" fill="#6f8c36"/><rect x="0" y="28.48" width="47" height="7.12" fill="#9bbb59"/><rect x="0" y="6.72" width="47" height="0.8" fill="#ffffff"/><rect x="1.90" y="2.66" width="5.6" height="1.8" fill="#f4f4f4"/><rect x="11.30" y="2.66" width="5.6" height="1.8" fill="#f4f4f4"/><rect x="20.70" y="2.66" width="5.6" height="1.8" fill="#f4f4f4"/><rect x="30.10" y="2.66" width="5.6" height="1.8" fill="#f4f4f4"/><rect x="39.50" y="2.66" width="5.6" height="1.8" fill="#f4f4f4"/><rect x="1.90" y="9.78" width="5.6" height="1.8" fill="#f2f2f2"/><rect x="11.30" y="9.78" width="5.6" height="1.8" fill="#f2f2f2"/><rect x="20.70" y="9.78" width="5.6" height="1.8" fill="#f2f2f2"/><rect x="30.10" y="9.78" width="5.6" height="1.8" fill="#f2f2f2"/><rect x="39.50" y="9.78" width="5.6" height="1.8" fill="#f2f2f2"/><rect x="1.90" y="16.90" width="5.6" height="1.8" fill="#f2f2f2"/><rect x="11.30" y="16.90" width="5.6" height="1.8" fill="#f2f2f2"/><rect x="20.70" y="16.90" width="5.6" height="1.8" fill="#f2f2f2"/><rect x="30.10" y="16.90" width="5.6" height="1.8" fill="#f2f2f2"/><rect x="39.50" y="16.90" width="5.6" height="1.8" fill="#f2f2f2"/><rect x="1.90" y="24.02" width="5.6" height="1.8" fill="#f2f2f2"/><rect x="11.30" y="24.02" width="5.6" height="1.8" fill="#f2f2f2"/><rect x="20.70" y="24.02" width="5.6" height="1.8" fill="#f2f2f2"/><rect x="30.10" y="24.02" width="5.6" height="1.8" fill="#f2f2f2"/><rect x="39.50" y="24.02" width="5.6" height="1.8" fill="#f2f2f2"/><rect x="1.90" y="31.14" width="5.6" height="1.8" fill="#f2f2f2"/><rect x="11.30" y="31.14" width="5.6" height="1.8" fill="#f2f2f2"/><rect x="20.70" y="31.14" width="5.6" height="1.8" fill="#f2f2f2"/><rect x="30.10" y="31.14" width="5.6" height="1.8" fill="#f2f2f2"/><rect x="39.50" y="31.14" width="5.6" height="1.8" fill="#f2f2f2"/></svg>
<svg style="left:559.20px;top:453.00px" width="47" height="35.6" viewBox="0 0 47 35.6"><rect x="0" y="0.00" width="47" height="7.12" fill="#000"/><rect x="0" y="7.12" width="47" height="7.12" fill="#5f4a7e"/><rect x="0" y="14.24" width="47" height="7.12" fill="#8064a2"/><rect x="0" y="21.36" width="47" height="7.12" fill="#5f4a7e"/><rect x="0" y="28.48" width="47" height="7.12" fill="#8064a2"/><rect x="0" y="6.72" width="47" height="0.8" fill="#ffffff"/><rect x="1.90" y="2.66" width="5.6" height="1.8" fill="#f4f4f4"/><rect x="11.30" y="2.66" width="5.6" height="1.8" fill="#f4f4f4"/><rect x="20.70" y="2.66" width="5.6" height="1.8" fill="#f4f4f4"/><rect x="30.10" y="2.66" width="5.6" height="1.8" fill="#f4f4f4"/><rect x="39.50" y="2.66" width="5.6" height="1.8" fill="#f4f4f4"/><rect x="1.90" y="9.78" width="5.6" height="1.8" fill="#f2f2f2"/><rect x="11.30" y="9.78" width="5.6" height="1.8" fill="#f2f2f2"/><rect x="20.70" y="9.78" width="5.6" height="1.8" fill="#f2f2f2"/><rect x="30.10" y="9.78" width="5.6" height="1.8" fill="#f2f2f2"/><rect x="39.50" y="9.78" width="5.6" height="1.8" fill="#f2f2f2"/><rect x="1.90" y="16.90" width="5.6" height="1.8" fill="#f2f2f2"/><rect x="11.30" y="16.90" width="5.6" height="1.8" fill="#f2f2f2"/><rect x="20.70" y="16.90" width="5.6" height="1.8" fill="#f2f2f2"/><rect x="30.10" y="16.90" width="5.6" height="1.8" fill="#f2f2f2"/><rect x="39.50" y="16.90" width="5.6" height="1.8" fill="#f2f2f2"/><rect x="1.90" y="24.02" width="5.6" height="1.8" fill="#f2f2f2"/><rect x="11.30" y="24.02" width="5.6" height="1.8" fill="#f2f2f2"/><rect x="20.70" y="24.02" width="5.6" height="1.8" fill="#f2f2f2"/><rect x="30.10" y="24.02" width="5.6" height="1.8" fill="#f2f2f2"/><rect x="39.50" y="24.02" width="5.6" height="1.8" fill="#f2f2f2"/><rect x="1.90" y="31.14" width="5.6" height="1.8" fill="#f2f2f2"/><rect x="11.30" y="31.14" width="5.6" height="1.8" fill="#f2f2f2"/><rect x="20.70" y="31.14" width="5.6" height="1.8" fill="#f2f2f2"/><rect x="30.10" y="31.14" width="5.6" height="1.8" fill="#f2f2f2"/><rect x="39.50" y="31.14" width="5.6" height="1.8" fill="#f2f2f2"/></svg>
<svg style="left:612.60px;top:453.00px" width="47" height="35.6" viewBox="0 0 47 35.6"><rect x="0" y="0.00" width="47" height="7.12" fill="#000"/><rect x="0" y="7.12" width="47" height="7.12" fill="#2f8aa6"/><rect x="0" y="14.24" width="47" height="7.12" fill="#4bacc6"/><rect x="0" y="21.36" width="47" height="7.12" fill="#2f8aa6"/><rect x="0" y="28.48" width="47" height="7.12" fill="#4bacc6"/><rect x="0" y="6.72" width="47" height="0.8" fill="#ffffff"/><rect x="1.90" y="2.66" width="5.6" height="1.8" fill="#f4f4f4"/><rect x="11.30" y="2.66" width="5.6" height="1.8" fill="#f4f4f4"/><rect x="20.70" y="2.66" width="5.6" height="1.8" fill="#f4f4f4"/><rect x="30.10" y="2.66" width="5.6" height="1.8" fill="#f4f4f4"/><rect x="39.50" y="2.66" width="5.6" height="1.8" fill="#f4f4f4"/><rect x="1.90" y="9.78" width="5.6" height="1.8" fill="#f2f2f2"/><rect x="11.30" y="9.78" width="5.6" height="1.8" fill="#f2f2f2"/><rect x="20.70" y="9.78" width="5.6" height="1.8" fill="#f2f2f2"/><rect x="30.10" y="9.78" width="5.6" height="1.8" fill="#f2f2f2"/><rect x="39.50" y="9.78" width="5.6" height="1.8" fill="#f2f2f2"/><rect x="1.90" y="16.90" width="5.6" height="1.8" fill="#f2f2f2"/><rect x="11.30" y="16.90" width="5.6" height="1.8" fill="#f2f2f2"/><rect x="20.70" y="16.90" width="5.6" height="1.8" fill="#f2f2f2"/><rect x="30.10" y="16.90" width="5.6" height="1.8" fill="#f2f2f2"/><rect x="39.50" y="16.90" width="5.6" height="1.8" fill="#f2f2f2"/><rect x="1.90" y="24.02" width="5.6" height="1.8" fill="#f2f2f2"/><rect x="11.30" y="24.02" width="5.6" height="1.8" fill="#f2f2f2"/><rect x="20.70" y="24.02" width="5.6" height="1.8" fill="#f2f2f2"/><rect x="30.10" y="24.02" width="5.6" height="1.8" fill="#f2f2f2"/><rect x="39.50" y="24.02" width="5.6" height="1.8" fill="#f2f2f2"/><rect x="1.90" y="31.14" width="5.6" height="1.8" fill="#f2f2f2"/><rect x="11.30" y="31.14" width="5.6" height="1.8" fill="#f2f2f2"/><rect x="20.70" y="31.14" width="5.6" height="1.8" fill="#f2f2f2"/><rect x="30.10" y="31.14" width="5.6" height="1.8" fill="#f2f2f2"/><rect x="39.50" y="31.14" width="5.6" height="1.8" fill="#f2f2f2"/></svg>
<svg style="left:666.00px;top:453.00px" width="47" height="35.6" viewBox="0 0 47 35.6"><rect x="0" y="0.00" width="47" height="7.12" fill="#000"/><rect x="0" y="7.12" width="47" height="7.12" fill="#d8731e"/><rect x="0" y="14.24" width="47" height="7.12" fill="#f79646"/><rect x="0" y="21.36" width="47" height="7.12" fill="#d8731e"/><rect x="0" y="28.48" width="47" height="7.12" fill="#f79646"/><rect x="0" y="6.72" width="47" height="0.8" fill="#ffffff"/><rect x="1.90" y="2.66" width="5.6" height="1.8" fill="#f4f4f4"/><rect x="11.30" y="2.66" width="5.6" height="1.8" fill="#f4f4f4"/><rect x="20.70" y="2.66" width="5.6" height="1.8" fill="#f4f4f4"/><rect x="30.10" y="2.66" width="5.6" height="1.8" fill="#f4f4f4"/><rect x="39.50" y="2.66" width="5.6" height="1.8" fill="#f4f4f4"/><rect x="1.90" y="9.78" width="5.6" height="1.8" fill="#f2f2f2"/><rect x="11.30" y="9.78" width="5.6" height="1.8" fill="#f2f2f2"/><rect x="20.70" y="9.78" width="5.6" height="1.8" fill="#f2f2f2"/><rect x="30.10" y="9.78" width="5.6" height="1.8" fill="#f2f2f2"/><rect x="39.50" y="9.78" width="5.6" height="1.8" fill="#f2f2f2"/><rect x="1.90" y="16.90" width="5.6" height="1.8" fill="#f2f2f2"/><rect x="11.30" y="16.90" width="5.6" height="1.8" fill="#f2f2f2"/><rect x="20.70" y="16.90" width="5.6" height="1.8" fill="#f2f2f2"/><rect x="30.10" y="16.90" width="5.6" height="1.8" fill="#f2f2f2"/><rect x="39.50" y="16.90" width="5.6" height="1.8" fill="#f2f2f2"/><rect x="1.90" y="24.02" width="5.6" height="1.8" fill="#f2f2f2"/><rect x="11.30" y="24.02" width="5.6" height="1.8" fill="#f2f2f2"/><rect x="20.70" y="24.02" width="5.6" height="1.8" fill="#f2f2f2"/><rect x="30.10" y="24.02" width="5.6" height="1.8" fill="#f2f2f2"/><rect x="39.50" y="24.02" width="5.6" height="1.8" fill="#f2f2f2"/><rect x="1.90" y="31.14" width="5.6" height="1.8" fill="#f2f2f2"/><rect x="11.30" y="31.14" width="5.6" height="1.8" fill="#f2f2f2"/><rect x="20.70" y="31.14" width="5.6" height="1.8" fill="#f2f2f2"/><rect x="30.10" y="31.14" width="5.6" height="1.8" fill="#f2f2f2"/><rect x="39.50" y="31.14" width="5.6" height="1.8" fill="#f2f2f2"/></svg>
<svg style="left:345.60px;top:495.00px" width="47" height="35.6" viewBox="0 0 47 35.6"><rect x="0" y="0.00" width="47" height="7.12" fill="#000"/><rect x="0" y="7.12" width="47" height="7.12" fill="#a6a6a6"/><rect x="0" y="14.24" width="47" height="7.12" fill="#d9d9d9"/><rect x="0" y="21.36" width="47" height="7.12" fill="#a6a6a6"/><rect x="0" y="28.48" width="47" height="7.12" fill="#d9d9d9"/><rect x="0" y="6.72" width="47" height="0.8" fill="#ffffff"/><rect x="1.90" y="2.66" width="5.6" height="1.8" fill="#c4c4c4"/><rect x="11.30" y="2.66" width="5.6" height="1.8" fill="#c4c4c4"/><rect x="20.70" y="2.66" width="5.6" height="1.8" fill="#c4c4c4"/><rect x="30.10" y="2.66" width="5.6" height="1.8" fill="#c4c4c4"/><rect x="39.50" y="2.66" width="5.6" height="1.8" fill="#c4c4c4"/><rect x="1.90" y="9.78" width="5.6" height="1.8" fill="#444444"/><rect x="11.30" y="9.78" width="5.6" height="1.8" fill="#444444"/><rect x="20.70" y="9.78" width="5.6" height="1.8" fill="#444444"/><rect x="30.10" y="9.78" width="5.6" height="1.8" fill="#444444"/><rect x="39.50" y="9.78" width="5.6" height="1.8" fill="#444444"/><rect x="1.90" y="16.90" width="5.6" height="1.8" fill="#444444"/><rect x="11.30" y="16.90" width="5.6" height="1.8" fill="#444444"/><rect x="20.70" y="16.90" width="5.6" height="1.8" fill="#444444"/><rect x="30.10" y="16.90" width="5.6" height="1.8" fill="#444444"/><rect x="39.50" y="16.90" width="5.6" height="1.8" fill="#444444"/><rect x="1.90" y="24.02" width="5.6" height="1.8" fill="#444444"/><rect x="11.30" y="24.02" width="5.6" height="1.8" fill="#444444"/><rect x="20.70" y="24.02" width="5.6" height="1.8" fill="#444444"/><rect x="30.10" y="24.02" width="5.6" height="1.8" fill="#444444"/><rect x="39.50" y="24.02" width="5.6" height="1.8" fill="#444444"/><rect x="1.90" y="31.14" width="5.6" height="1.8" fill="#444444"/><rect x="11.30" y="31.14" width="5.6" height="1.8" fill="#444444"/><rect x="20.70" y="31.14" width="5.6" height="1.8" fill="#444444"/><rect x="30.10" y="31.14" width="5.6" height="1.8" fill="#444444"/><rect x="39.50" y="31.14" width="5.6" height="1.8" fill="#444444"/></svg>
<svg style="left:399.00px;top:495.00px" width="47" height="35.6" viewBox="0 0 47 35.6"><rect x="0" y="0.00" width="47" height="7.12" fill="#c0504d"/><rect x="0" y="7.12" width="47" height="7.12" fill="#b8cce4"/><rect x="0" y="14.24" width="47" height="7.12" fill="#dce6f1"/><rect x="0" y="21.36" width="47" height="7.12" fill="#b8cce4"/><rect x="0" y="28.48" width="47" height="7.12" fill="#dce6f1"/><rect x="0" y="6.72" width="47" height="0.8" fill="#ffffff"/><rect x="1.90" y="2.66" width="5.6" height="1.8" fill="#f4f4f4"/><rect x="11.30" y="2.66" width="5.6" height="1.8" fill="#f4f4f4"/><rect x="20.70" y="2.66" width="5.6" height="1.8" fill="#f4f4f4"/><rect x="30.10" y="2.66" width="5.6" height="1.8" fill="#f4f4f4"/><rect x="39.50" y="2.66" width="5.6" height="1.8" fill="#f4f4f4"/><rect x="1.90" y="9.78" width="5.6" height="1.8" fill="#444444"/><rect x="11.30" y="9.78" width="5.6" height="1.8" fill="#444444"/><rect x="20.70" y="9.78" width="5.6" height="1.8" fill="#444444"/><rect x="30.10" y="9.78" width="5.6" height="1.8" fill="#444444"/><rect x="39.50" y="9.78" width="5.6" height="1.8" fill="#444444"/><rect x="1.90" y="16.90" width="5.6" height="1.8" fill="#444444"/><rect x="11.30" y="16.90" width="5.6" height="1.8" fill="#444444"/><rect x="20.70" y="16.90" width="5.6" height="1.8" fill="#444444"/><rect x="30.10" y="16.90" width="5.6" height="1.8" fill="#444444"/><rect x="39.50" y="16.90" width="5.6" height="1.8" fill="#444444"/><rect x="1.90" y="24.02" width="5.6" height="1.8" fill="#444444"/><rect x="11.30" y="24.02" width="5.6" height="1.8" fill="#444444"/><rect x="20.70" y="24.02" width="5.6" height="1.8" fill="#444444"/><rect x="30.10" y="24.02" width="5.6" height="1.8" fill="#444444"/><rect x="39.50" y="24.02" width="5.6" height="1.8" fill="#444444"/><rect x="1.90" y="31.14" width="5.6" height="1.8" fill="#444444"/><rect x="11.30" y="31.14" width="5.6" height="1.8" fill="#444444"/><rect x="20.70" y="31.14" width="5.6" height="1.8" fill="#444444"/><rect x="30.10" y="31.14" width="5.6" height="1.8" fill="#444444"/><rect x="39.50" y="31.14" width="5.6" height="1.8" fill="#444444"/></svg>
<svg style="left:452.40px;top:495.00px" width="47" height="35.6" viewBox="0 0 47 35.6"><rect x="0" y="0.00" width="47" height="7.12" fill="#8064a2"/><rect x="0" y="7.12" width="47" height="7.12" fill="#d8e4bc"/><rect x="0" y="14.24" width="47" height="7.12" fill="#ebf1de"/><rect x="0" y="21.36" width="47" height="7.12" fill="#d8e4bc"/><rect x="0" y="28.48" width="47" height="7.12" fill="#ebf1de"/><rect x="0" y="6.72" width="47" height="0.8" fill="#ffffff"/><rect x="1.90" y="2.66" width="5.6" height="1.8" fill="#f4f4f4"/><rect x="11.30" y="2.66" width="5.6" height="1.8" fill="#f4f4f4"/><rect x="20.70" y="2.66" width="5.6" height="1.8" fill="#f4f4f4"/><rect x="30.10" y="2.66" width="5.6" height="1.8" fill="#f4f4f4"/><rect x="39.50" y="2.66" width="5.6" height="1.8" fill="#f4f4f4"/><rect x="1.90" y="9.78" width="5.6" height="1.8" fill="#444444"/><rect x="11.30" y="9.78" width="5.6" height="1.8" fill="#444444"/><rect x="20.70" y="9.78" width="5.6" height="1.8" fill="#444444"/><rect x="30.10" y="9.78" width="5.6" height="1.8" fill="#444444"/><rect x="39.50" y="9.78" width="5.6" height="1.8" fill="#444444"/><rect x="1.90" y="16.90" width="5.6" height="1.8" fill="#444444"/><rect x="11.30" y="16.90" width="5.6" height="1.8" fill="#444444"/><rect x="20.70" y="16.90" width="5.6" height="1.8" fill="#444444"/><rect x="30.10" y="16.90" width="5.6" height="1.8" fill="#444444"/><rect x="39.50" y="16.90" width="5.6" height="1.8" fill="#444444"/><rect x="1.90" y="24.02" width="5.6" height="1.8" fill="#444444"/><rect x="11.30" y="24.02" width="5.6" height="1.8" fill="#444444"/><rect x="20.70" y="24.02" width="5.6" height="1.8" fill="#444444"/><rect x="30.10" y="24.02" width="5.6" height="1.8" fill="#444444"/><rect x="39.50" y="24.02" width="5.6" height="1.8" fill="#444444"/><rect x="1.90" y="31.14" width="5.6" height="1.8" fill="#444444"/><rect x="11.30" y="31.14" width="5.6" height="1.8" fill="#444444"/><rect x="20.70" y="31.14" width="5.6" height="1.8" fill="#444444"/><rect x="30.10" y="31.14" width="5.6" height="1.8" fill="#444444"/><rect x="39.50" y="31.14" width="5.6" height="1.8" fill="#444444"/></svg>
<svg style="left:505.80px;top:495.00px" width="47" height="35.6" viewBox="0 0 47 35.6"><rect x="0" y="0.00" width="47" height="7.12" fill="#f79646"/><rect x="0" y="7.12" width="47" height="7.12" fill="#b7dee8"/><rect x="0" y="14.24" width="47" height="7.12" fill="#daeef3"/><rect x="0" y="21.36" width="47" height="7.12" fill="#b7dee8"/><rect x="0" y="28.48" width="47" height="7.12" fill="#daeef3"/><rect x="0" y="6.72" width="47" height="0.8" fill="#ffffff"/><rect x="1.90" y="2.66" width="5.6" height="1.8" fill="#f4f4f4"/><rect x="11.30" y="2.66" width="5.6" height="1.8" fill="#f4f4f4"/><rect x="20.70" y="2.66" width="5.6" height="1.8" fill="#f4f4f4"/><rect x="30.10" y="2.66" width="5.6" height="1.8" fill="#f4f4f4"/><rect x="39.50" y="2.66" width="5.6" height="1.8" fill="#f4f4f4"/><rect x="1.90" y="9.78" width="5.6" height="1.8" fill="#444444"/><rect x="11.30" y="9.78" width="5.6" height="1.8" fill="#444444"/><rect x="20.70" y="9.78" width="5.6" height="1.8" fill="#444444"/><rect x="30.10" y="9.78" width="5.6" height="1.8" fill="#444444"/><rect x="39.50" y="9.78" width="5.6" height="1.8" fill="#444444"/><rect x="1.90" y="16.90" width="5.6" height="1.8" fill="#444444"/><rect x="11.30" y="16.90" width="5.6" height="1.8" fill="#444444"/><rect x="20.70" y="16.90" width="5.6" height="1.8" fill="#444444"/><rect x="30.10" y="16.90" width="5.6" height="1.8" fill="#444444"/><rect x="39.50" y="16.90" width="5.6" height="1.8" fill="#444444"/><rect x="1.90" y="24.02" width="5.6" height="1.8" fill="#444444"/><rect x="11.30" y="24.02" width="5.6" height="1.8" fill="#444444"/><rect x="20.70" y="24.02" width="5.6" height="1.8" fill="#444444"/><rect x="30.10" y="24.02" width="5.6" height="1.8" fill="#444444"/><rect x="39.50" y="24.02" width="5.6" height="1.8" fill="#444444"/><rect x="1.90" y="31.14" width="5.6" height="1.8" fill="#444444"/><rect x="11.30" y="31.14" width="5.6" height="1.8" fill="#444444"/><rect x="20.70" y="31.14" width="5.6" height="1.8" fill="#444444"/><rect x="30.10" y="31.14" width="5.6" height="1.8" fill="#444444"/><rect x="39.50" y="31.14" width="5.6" height="1.8" fill="#444444"/></svg>
<svg style="left:350px;top:544px" width="16" height="16" viewBox="0 0 16 16"><rect x="2" y="3.5" width="11.5" height="10" fill="#fff" stroke="#555" stroke-width="1"/><rect x="5.8" y="3" width="8.2" height="11" fill="#2f78cc"/><path d="M2 7 H14 M2 10.3 H14" stroke="#fff" stroke-width="1"/><path d="M2 7 H5.8 M2 10.3 H5.8" stroke="#666" stroke-width="0.9"/><path d="M10 3 V14" stroke="#fff" stroke-width="0.9"/><path d="M4.5 0.8 V6.2 M1.8 3.5 H7.2" stroke="#3b9b4a" stroke-width="1.4"/></svg>
<div style="left:371.50px;top:548.70px;font-size:10px;line-height:10px;color:#2a2a33;font-weight:normal;-webkit-text-stroke:0.2px #2a2a33;transform:scaleX(0.8889);transform-origin:left top;white-space:nowrap"><u>N</u>ew Table Style...</div>
<svg style="left:350px;top:566px" width="16" height="15" viewBox="0 0 16 15"><rect x="2" y="2.5" width="11.5" height="10.5" fill="#eef4fa" stroke="#555" stroke-width="1"/><path d="M2 6 H13.5 M2 9.5 H13.5 M5.8 2.5 V13 M9.7 2.5 V13" stroke="#666" stroke-width="0.8"/><rect x="6" y="7" width="3.5" height="5" fill="#5fa0dd"/><path d="M7.2 12.6 L12.2 7.6 L14.8 10.2 L9.8 15.2 Z" fill="#a855c8" stroke="#7d3a9a" stroke-width="0.6"/><path d="M9.2 11.8 L11 10" stroke="#f0d8f8" stroke-width="1.1"/></svg>
<div style="left:371.00px;top:570.10px;font-size:10px;line-height:10px;color:#2a2a33;font-weight:normal;-webkit-text-stroke:0.2px #2a2a33;transform:scaleX(0.8779);transform-origin:left top;white-space:nowrap"><u>C</u>lear</div>
<div style="left:528.0px;top:587.5px;width:1.2px;height:1.2px;background:#9a9a9a;"></div>
<div style="left:532.5px;top:587.5px;width:1.2px;height:1.2px;background:#9a9a9a;"></div>
<div style="left:537.0px;top:587.5px;width:1.2px;height:1.2px;background:#9a9a9a;"></div>
<div style="left:541.5px;top:587.5px;width:1.2px;height:1.2px;background:#9a9a9a;"></div>
<div style="left:342px;top:49.3px;width:55.8px;height:50.7px;box-sizing:border-box;border:4px solid #e60a0e;box-shadow:1px 1px 2px rgba(0,0,0,0.35), inset 1px 1px 2px rgba(0,0,0,0.3)"></div>
<div style="left:344px;top:561.4px;width:151.4px;height:29.8px;box-sizing:border-box;border:4.2px solid #e60a0e;box-shadow:1px 1px 2px rgba(0,0,0,0.35), inset 1px 1px 2px rgba(0,0,0,0.3)"></div>
<svg style="left:0;top:0" width="800" height="614" viewBox="0 0 800 614"><defs><filter id="sh" x="-20%" y="-20%" width="140%" height="140%"><feGaussianBlur in="SourceAlpha" stdDeviation="1.6"/><feOffset dx="1.5" dy="2" result="b"/><feComponentTransfer><feFuncA type="linear" slope="0.45"/></feComponentTransfer><feMerge><feMergeNode/><feMergeNode in="SourceGraphic"/></feMerge></filter></defs><g filter="url(#sh)"><path d="M405.5 110.5 L412.3 142.5 L415.2 133.1 L475.5 211.2 L477.9 209.4 L423.7 127.0 L433.5 127.4 Z" fill="#ec0c10" stroke="#fff" stroke-width="6.5" stroke-linejoin="round"/><path d="M405.5 110.5 L412.3 142.5 L415.2 133.1 L475.5 211.2 L477.9 209.4 L423.7 127.0 L433.5 127.4 Z" fill="#ec0c10"/></g><g filter="url(#sh)"><path d="M498.6 550.5 L525.3 532.1 L515.8 533.4 L570.6 432.9 L567.8 431.3 L505.5 527.2 L502.1 518.2 Z" fill="#ec0c10" stroke="#fff" stroke-width="6.5" stroke-linejoin="round"/><path d="M498.6 550.5 L525.3 532.1 L515.8 533.4 L570.6 432.9 L567.8 431.3 L505.5 527.2 L502.1 518.2 Z" fill="#ec0c10"/></g></svg>
<svg style="left:640px;top:556px" width="80" height="46" viewBox="0 0 80 46"><path d="M4 37 L8.9 18.5 Q11 10.5 19 10.5 L27 10.5 L22.1 29 Q20 37 12 37 Z" fill="#1d59b0"/><path d="M44.5 37 L49.4 18.5 Q51.5 10.5 59.5 10.5 L69 10.5 L64.1 29 Q62 37 54 37 Z" fill="#49b04a"/><path d="M23 43.5 L30.8 12.7 Q33 4 42 4 L49.5 4 L41.7 34.8 Q39.5 43.5 30.5 43.5 Z" fill="#f07b22" stroke="#fff" stroke-width="1.2"/><text x="8.5" y="31" font-family="Liberation Sans" font-weight="bold" font-style="italic" font-size="18" fill="#fff">F</text><text x="28" y="31" font-family="Liberation Sans" font-weight="bold" font-style="italic" font-size="18" fill="#fff">P</text><text x="50" y="31" font-family="Liberation Sans" font-weight="bold" font-style="italic" font-size="18" fill="#fff">T</text><circle cx="68" cy="34.5" r="1.9" fill="#9ab3de" stroke="#5b7fc4" stroke-width="0.5"/></svg>
<div style="left:715.30px;top:570.10px;font-size:18px;line-height:18px;color:#111;font-weight:bold;-webkit-text-stroke:0.7px #111;transform:scaleX(0.9333);transform-origin:left top;white-space:nowrap">Shop</div>
<div style="left:757.50px;top:574.77px;font-size:12.5px;line-height:12.5px;color:#111;font-weight:bold;-webkit-text-stroke:0.3px #111;transform:scaleX(0.7619);transform-origin:left top;white-space:nowrap">.com.vn</div>
</body></html>
